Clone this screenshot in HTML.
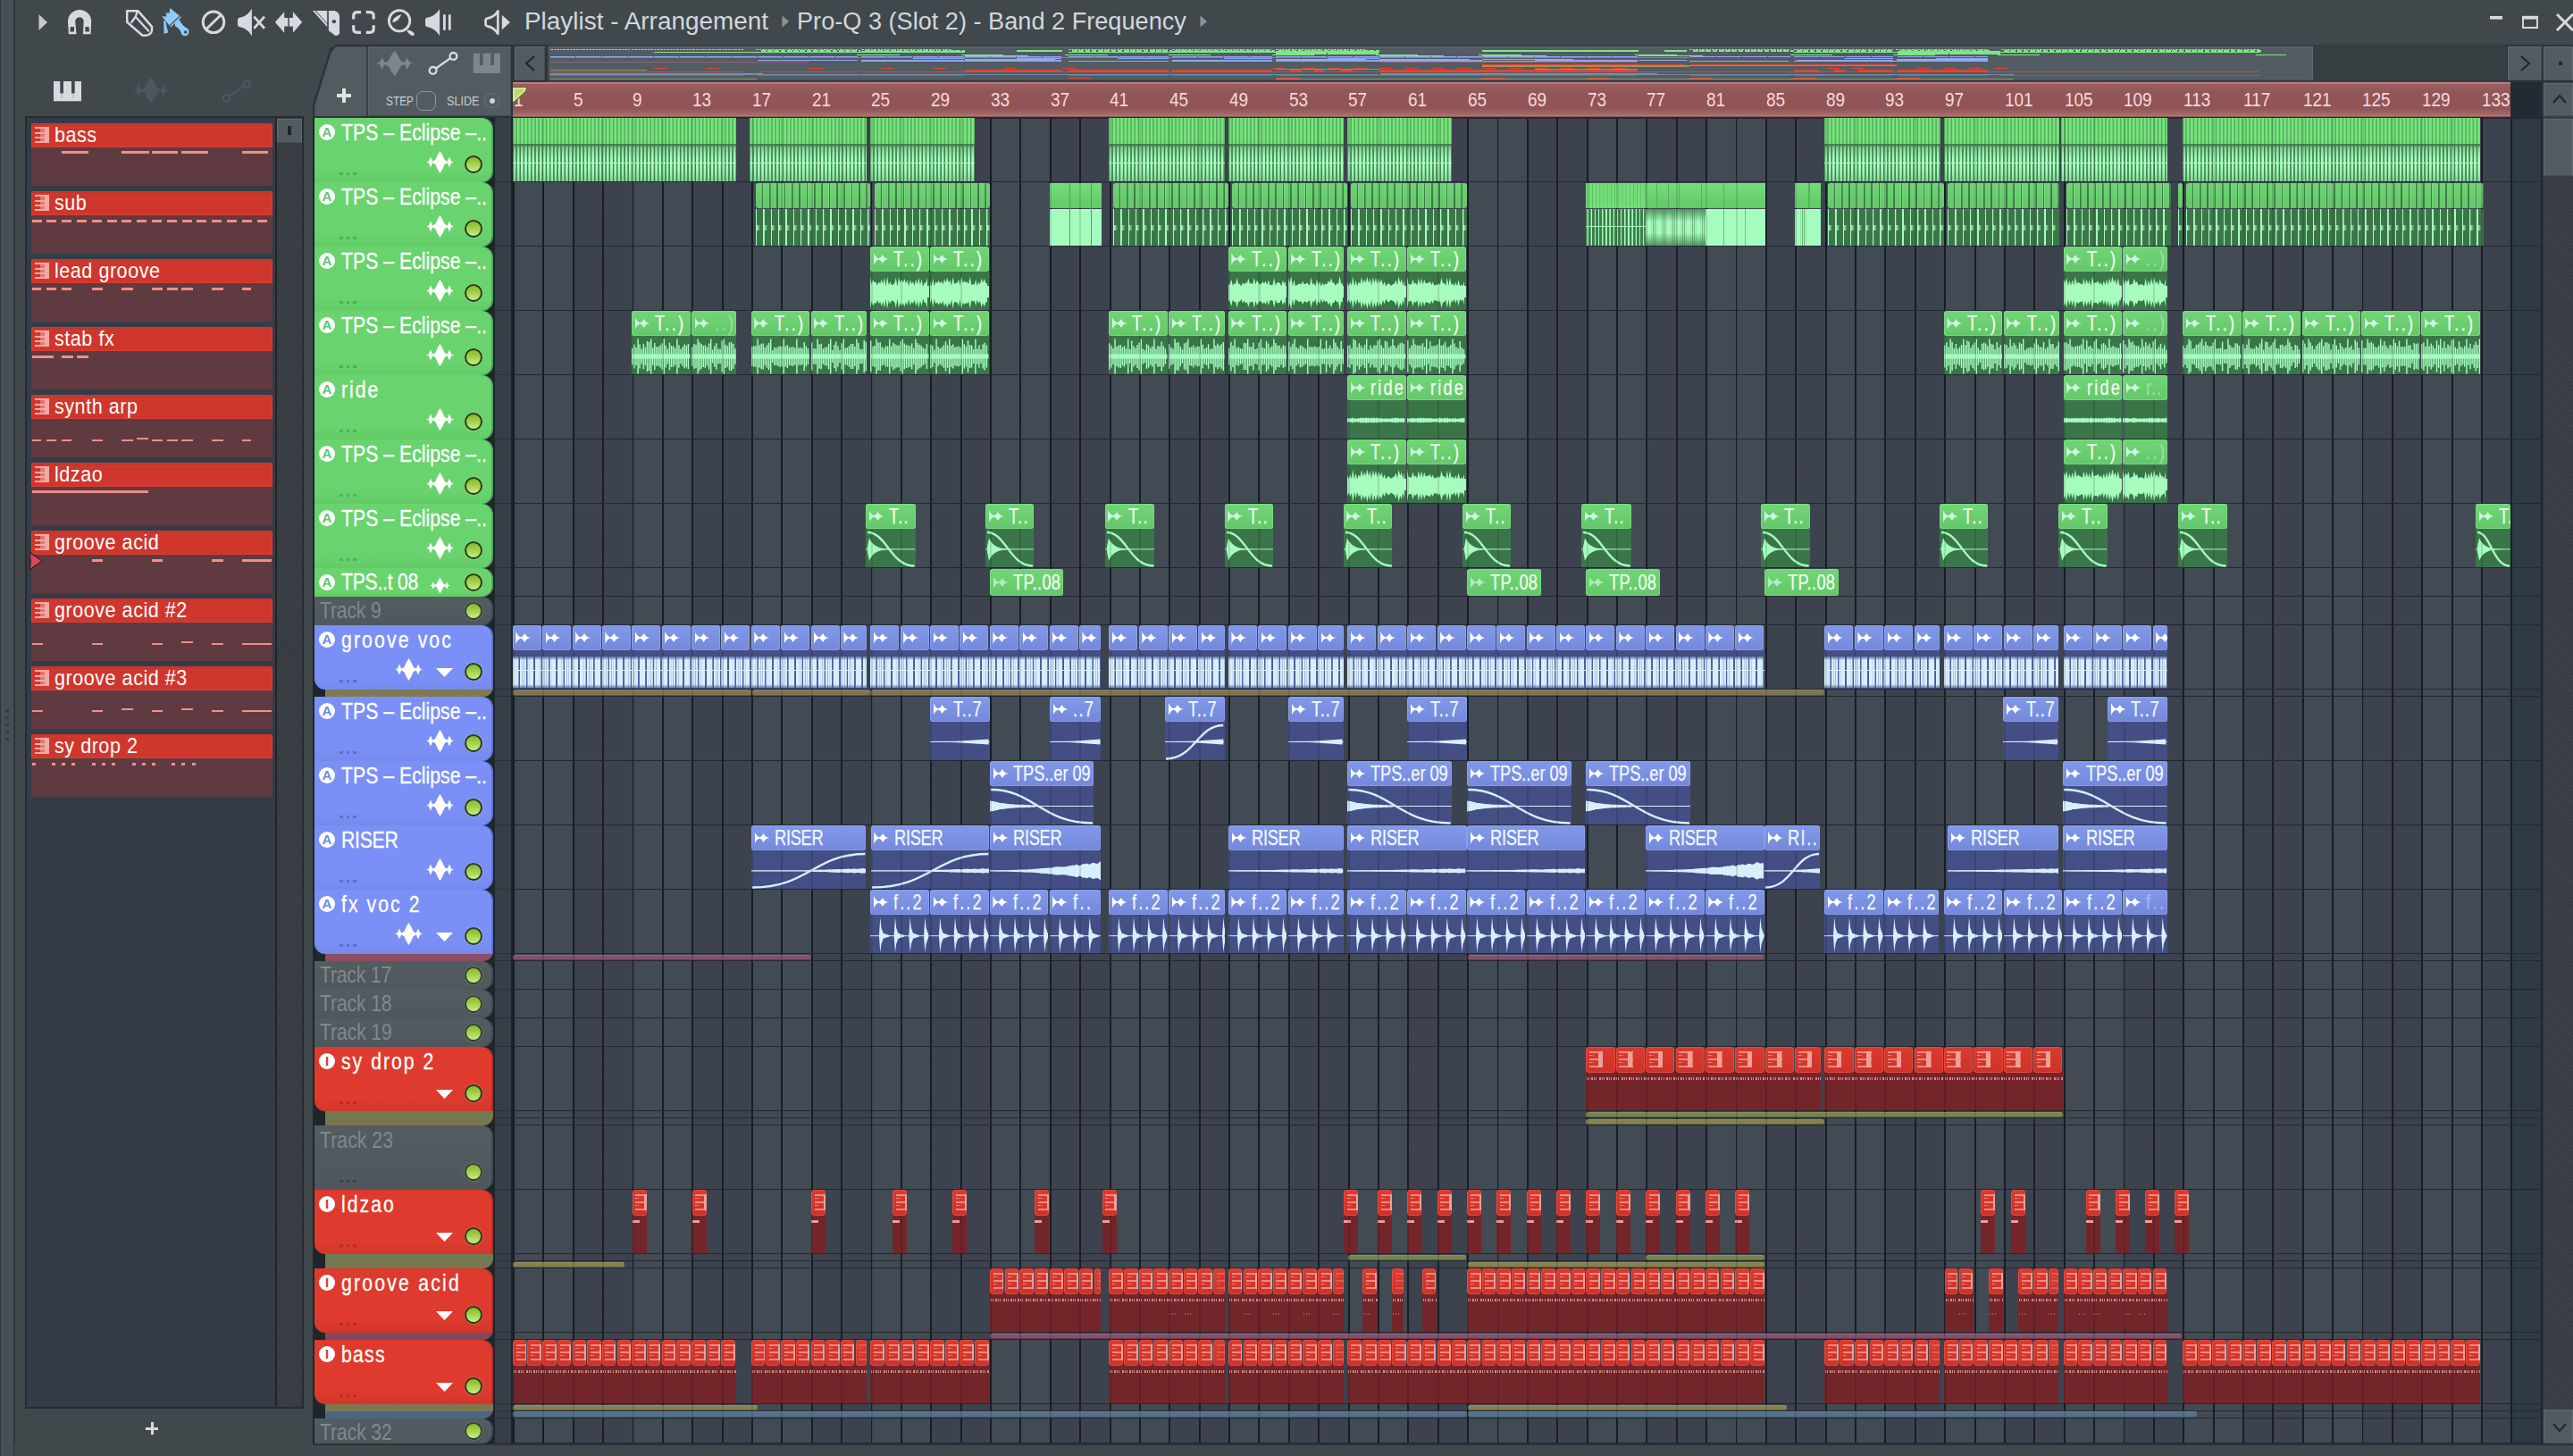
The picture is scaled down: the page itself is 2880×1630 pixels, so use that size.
<!DOCTYPE html><html><head><meta charset="utf-8"><title>Playlist - Arrangement</title><style>
html,body{margin:0;padding:0}
body{width:2880px;height:1630px;background:#40484c;position:relative;overflow:hidden;font-family:"Liberation Sans",sans-serif;}
div,svg,span,i,b{position:absolute;box-sizing:border-box;display:block}
.t{white-space:nowrap;transform-origin:0 0;line-height:1}

.h{border-radius:3px;overflow:hidden;z-index:1}
.hg{background:linear-gradient(#70d675 0,#6bcf70 50%,#64c86a 100%);box-shadow:inset 0 0 0 1px rgba(130,230,135,0.55)}
.hb{background:linear-gradient(#8199ea 0,#7b91e2 50%,#7488da 100%);box-shadow:inset 0 0 0 1px rgba(150,170,245,0.55)}
.hr{background:linear-gradient(#dc3a2e 0,#d5362b 50%,#cc3329 100%);box-shadow:inset 0 0 0 1px rgba(240,90,75,0.55);border-radius:4px}
.bg{background:rgba(58,122,72,0.93)}
.bb{background:rgba(69,80,138,0.93)}
.br{background:rgba(118,36,40,0.95)}
.ic{left:3.6px;top:6.8px;width:17px;height:14px;clip-path:polygon(0 0,7% 17%,17% 33%,30% 44%,40% 42%,50% 30%,59% 14%,66% 28%,74% 40%,86% 47%,100% 50%,86% 53%,74% 60%,66% 72%,59% 86%,50% 70%,40% 58%,30% 56%,17% 67%,7% 83%,0 100%)}
.hg .ic{background:#cdf8e0}
.hb .ic{background:#fff}
.lb{left:26px;top:1.6px;-webkit-text-stroke:.25px currentColor;font-size:24px;white-space:nowrap;transform-origin:0 0;line-height:1;color:#f2fff2}
.hb .lb{color:#f4f7ff}
.pi{left:3.5px;top:5px;width:15.5px;height:18px;background:linear-gradient(#ee9f98,#ee9f98) 100% 0/5.5px 100% no-repeat,linear-gradient(rgba(255,205,200,.55),rgba(255,205,200,.55)) 0 0/100% 2px no-repeat,linear-gradient(rgba(255,205,200,.55),rgba(255,205,200,.55)) 0 8px/100% 2px no-repeat,linear-gradient(rgba(255,205,200,.55),rgba(255,205,200,.55)) 0 16px/100% 2px no-repeat,linear-gradient(90deg,rgba(255,215,205,.7),rgba(255,215,205,0)) 0 4.2px/6px 1.4px no-repeat,linear-gradient(90deg,rgba(255,215,205,.7),rgba(255,215,205,0)) 0 12.2px/6px 1.4px no-repeat}
.mu{opacity:.35}

.T20pi{left:5px}

.th{left:352px;width:200px;border-radius:0 12px 12px 0;overflow:hidden;box-shadow:inset -1.7px 0 0 rgba(10,20,60,.28)}
.thg{background:linear-gradient(#69d36d 0,#69d36d 80%,#62cb67 100%)}
.thb{background:linear-gradient(#7b90f6 0,#7b90f6 80%,#748aee 100%)}
.thr{background:linear-gradient(#de3a2d 0,#de3a2d 80%,#d3372b 100%)}
.thx{background:linear-gradient(#535c61 0,#4e575c 100%)}
.led{left:168px;width:20px;height:20px;border-radius:50%;background:linear-gradient(#86b832 0,#a2d048 45%,#c8ec8a 100%);border:2px solid rgba(15,25,12,.82);box-shadow:0 0 0 1px rgba(255,255,255,.12)}
.thx .led{border-color:rgba(25,30,34,.8)}
.cir{left:5px;top:7px;width:18px;height:18px;border-radius:50%;background:#fff;font:bold 15px/18px "Liberation Sans",sans-serif;text-align:center}
.thg .cir{color:#5fc866}.thb .cir{color:#7088ee}.thr .cir{color:#d93a2e}
.nm{left:30px;top:3.5px;font-size:25px;color:#fff;-webkit-text-stroke:.3px currentColor;white-space:nowrap;transform-origin:0 0;line-height:1;transform:scaleX(.85)}
.thx .nm{color:#7f888e;left:6px;-webkit-text-stroke:0}
.dots{left:28px;width:20px;height:3.5px;background:linear-gradient(90deg,currentColor 0,currentColor 3.5px,transparent 3.5px,transparent 7.5px,currentColor 7.5px,currentColor 11px,transparent 11px,transparent 15px,currentColor 15px,currentColor 18.5px,transparent 18.5px)}
.thg .dots{color:#4fb056}.thb .dots{color:#5b6fd0}.thr .dots{color:#b82d24}.thx .dots{color:#3c4449}
.wv{width:31px;height:25px;background:#fff;clip-path:polygon(0 50%,9% 46%,16% 26%,23% 46%,33% 40%,42% 16%,50% 0,58% 16%,67% 40%,77% 46%,84% 26%,91% 46%,100% 50%,91% 54%,84% 74%,77% 54%,67% 60%,58% 84%,50% 100%,42% 84%,33% 60%,23% 54%,16% 74%,9% 54%)}
.tri{width:19px;height:10px;background:#fff;clip-path:polygon(0 0,100% 0,50% 100%)}
.gs{left:364px;width:188px;border-radius:0 0 11px 0}
</style></head><body>
<div style="left:0px;top:0px;width:15px;height:1630px;background:#465054;"></div>
<div style="left:0px;top:0px;width:1px;height:1630px;background:#2f373b;"></div>
<div style="left:15px;top:0px;width:2px;height:1630px;background:#2e363a;"></div>
<div id="grid" style="left:574px;top:132px;width:2271px;height:1484px;background:#3f4651;overflow:hidden"><div style="left:0px;top:0;width:66.8px;height:1484px;background:#424a54"></div><div style="left:66.8px;top:0;width:66.8px;height:1484px;background:#3c434e"></div><div style="left:133.5px;top:0;width:66.8px;height:1484px;background:#424a54"></div><div style="left:200.3px;top:0;width:66.8px;height:1484px;background:#3c434e"></div><div style="left:267px;top:0;width:66.8px;height:1484px;background:#424a54"></div><div style="left:333.8px;top:0;width:66.8px;height:1484px;background:#3c434e"></div><div style="left:400.6px;top:0;width:66.8px;height:1484px;background:#424a54"></div><div style="left:467.3px;top:0;width:66.8px;height:1484px;background:#3c434e"></div><div style="left:534.1px;top:0;width:66.8px;height:1484px;background:#424a54"></div><div style="left:600.8px;top:0;width:66.8px;height:1484px;background:#3c434e"></div><div style="left:667.6px;top:0;width:66.8px;height:1484px;background:#424a54"></div><div style="left:734.4px;top:0;width:66.8px;height:1484px;background:#3c434e"></div><div style="left:801.1px;top:0;width:66.8px;height:1484px;background:#424a54"></div><div style="left:867.9px;top:0;width:66.8px;height:1484px;background:#3c434e"></div><div style="left:934.6px;top:0;width:66.8px;height:1484px;background:#424a54"></div><div style="left:1001.4px;top:0;width:66.8px;height:1484px;background:#3c434e"></div><div style="left:1068.2px;top:0;width:66.8px;height:1484px;background:#424a54"></div><div style="left:1134.9px;top:0;width:66.8px;height:1484px;background:#3c434e"></div><div style="left:1201.7px;top:0;width:66.8px;height:1484px;background:#424a54"></div><div style="left:1268.4px;top:0;width:66.8px;height:1484px;background:#3c434e"></div><div style="left:1335.2px;top:0;width:66.8px;height:1484px;background:#424a54"></div><div style="left:1402px;top:0;width:66.8px;height:1484px;background:#3c434e"></div><div style="left:1468.7px;top:0;width:66.8px;height:1484px;background:#424a54"></div><div style="left:1535.5px;top:0;width:66.8px;height:1484px;background:#3c434e"></div><div style="left:1602.2px;top:0;width:66.8px;height:1484px;background:#424a54"></div><div style="left:1669px;top:0;width:66.8px;height:1484px;background:#3c434e"></div><div style="left:1735.8px;top:0;width:66.8px;height:1484px;background:#424a54"></div><div style="left:1802.5px;top:0;width:66.8px;height:1484px;background:#3c434e"></div><div style="left:1869.3px;top:0;width:66.8px;height:1484px;background:#424a54"></div><div style="left:1936px;top:0;width:66.8px;height:1484px;background:#3c434e"></div><div style="left:2002.8px;top:0;width:66.8px;height:1484px;background:#424a54"></div><div style="left:2069.6px;top:0;width:66.8px;height:1484px;background:#3c434e"></div><div style="left:2136.3px;top:0;width:66.8px;height:1484px;background:#424a54"></div><div style="left:2203.1px;top:0;width:32.9px;height:1484px;background:#3c434e"></div><div style="left:2236px;top:0;width:35px;height:1484px;background:#2f3a46"></div><div style="left:-0.2px;top:0;width:2271.5px;height:1484px;background:repeating-linear-gradient(90deg,#1a1f28 0,#1a1f28 1.9px,transparent 1.9px,transparent 33.380px)"></div><div style="left:0;top:70.5px;width:2271px;height:1.6px;background:#222832"></div><div style="left:0;top:142.5px;width:2271px;height:1.6px;background:#222832"></div><div style="left:0;top:214.5px;width:2271px;height:1.6px;background:#222832"></div><div style="left:0;top:286.5px;width:2271px;height:1.6px;background:#222832"></div><div style="left:0;top:358.5px;width:2271px;height:1.6px;background:#222832"></div><div style="left:0;top:430.5px;width:2271px;height:1.6px;background:#222832"></div><div style="left:0;top:502.5px;width:2271px;height:1.6px;background:#222832"></div><div style="left:0;top:534.5px;width:2271px;height:1.6px;background:#222832"></div><div style="left:0;top:566.5px;width:2271px;height:1.6px;background:#222832"></div><div style="left:0;top:638.5px;width:2271px;height:1.6px;background:#222832"></div><div style="left:0;top:646.5px;width:2271px;height:1.6px;background:#222832"></div><div style="left:0;top:718.5px;width:2271px;height:1.6px;background:#222832"></div><div style="left:0;top:790.5px;width:2271px;height:1.6px;background:#222832"></div><div style="left:0;top:862.5px;width:2271px;height:1.6px;background:#222832"></div><div style="left:0;top:934.5px;width:2271px;height:1.6px;background:#222832"></div><div style="left:0;top:942.5px;width:2271px;height:1.6px;background:#222832"></div><div style="left:0;top:974.5px;width:2271px;height:1.6px;background:#222832"></div><div style="left:0;top:1006.5px;width:2271px;height:1.6px;background:#222832"></div><div style="left:0;top:1038.5px;width:2271px;height:1.6px;background:#222832"></div><div style="left:0;top:1110.5px;width:2271px;height:1.6px;background:#222832"></div><div style="left:0;top:1118.5px;width:2271px;height:1.6px;background:#222832"></div><div style="left:0;top:1126.5px;width:2271px;height:1.6px;background:#222832"></div><div style="left:0;top:1198.5px;width:2271px;height:1.6px;background:#222832"></div><div style="left:0;top:1270.5px;width:2271px;height:1.6px;background:#222832"></div><div style="left:0;top:1278.5px;width:2271px;height:1.6px;background:#222832"></div><div style="left:0;top:1286.5px;width:2271px;height:1.6px;background:#222832"></div><div style="left:0;top:1358.5px;width:2271px;height:1.6px;background:#222832"></div><div style="left:0;top:1366.5px;width:2271px;height:1.6px;background:#222832"></div><div style="left:0;top:1438.5px;width:2271px;height:1.6px;background:#222832"></div><div style="left:0;top:1446.5px;width:2271px;height:1.6px;background:#222832"></div><div style="left:0;top:1454.5px;width:2271px;height:1.6px;background:#222832"></div><div style="left:0;top:1482.5px;width:2271px;height:1.6px;background:#222832"></div></div>
<div style="left:552px;top:132px;width:22px;height:1484px;background:#1e262c;"></div>
<div style="left:553.8px;top:132px;width:18.2px;height:1484px;background:#373e48;"></div>
<div style="left:572px;top:132px;width:2px;height:1484px;background:#1d252c;"></div>
<div style="left:553.8px;top:202.7px;width:18.2px;height:1.5px;background:#293039;"></div>
<div style="left:553.8px;top:274.7px;width:18.2px;height:1.5px;background:#293039;"></div>
<div style="left:553.8px;top:346.7px;width:18.2px;height:1.5px;background:#293039;"></div>
<div style="left:553.8px;top:418.7px;width:18.2px;height:1.5px;background:#293039;"></div>
<div style="left:553.8px;top:490.7px;width:18.2px;height:1.5px;background:#293039;"></div>
<div style="left:553.8px;top:562.7px;width:18.2px;height:1.5px;background:#293039;"></div>
<div style="left:553.8px;top:634.7px;width:18.2px;height:1.5px;background:#293039;"></div>
<div style="left:553.8px;top:666.7px;width:18.2px;height:1.5px;background:#293039;"></div>
<div style="left:553.8px;top:698.7px;width:18.2px;height:1.5px;background:#293039;"></div>
<div style="left:553.8px;top:770.7px;width:18.2px;height:1.5px;background:#293039;"></div>
<div style="left:553.8px;top:778.7px;width:18.2px;height:1.5px;background:#293039;"></div>
<div style="left:553.8px;top:850.7px;width:18.2px;height:1.5px;background:#293039;"></div>
<div style="left:553.8px;top:922.7px;width:18.2px;height:1.5px;background:#293039;"></div>
<div style="left:553.8px;top:994.7px;width:18.2px;height:1.5px;background:#293039;"></div>
<div style="left:553.8px;top:1066.7px;width:18.2px;height:1.5px;background:#293039;"></div>
<div style="left:553.8px;top:1074.7px;width:18.2px;height:1.5px;background:#293039;"></div>
<div style="left:553.8px;top:1106.7px;width:18.2px;height:1.5px;background:#293039;"></div>
<div style="left:553.8px;top:1138.7px;width:18.2px;height:1.5px;background:#293039;"></div>
<div style="left:553.8px;top:1170.7px;width:18.2px;height:1.5px;background:#293039;"></div>
<div style="left:553.8px;top:1242.7px;width:18.2px;height:1.5px;background:#293039;"></div>
<div style="left:553.8px;top:1250.7px;width:18.2px;height:1.5px;background:#293039;"></div>
<div style="left:553.8px;top:1258.7px;width:18.2px;height:1.5px;background:#293039;"></div>
<div style="left:553.8px;top:1330.7px;width:18.2px;height:1.5px;background:#293039;"></div>
<div style="left:553.8px;top:1402.7px;width:18.2px;height:1.5px;background:#293039;"></div>
<div style="left:553.8px;top:1410.7px;width:18.2px;height:1.5px;background:#293039;"></div>
<div style="left:553.8px;top:1418.7px;width:18.2px;height:1.5px;background:#293039;"></div>
<div style="left:553.8px;top:1490.7px;width:18.2px;height:1.5px;background:#293039;"></div>
<div style="left:553.8px;top:1498.7px;width:18.2px;height:1.5px;background:#293039;"></div>
<div style="left:553.8px;top:1570.7px;width:18.2px;height:1.5px;background:#293039;"></div>
<div style="left:553.8px;top:1578.7px;width:18.2px;height:1.5px;background:#293039;"></div>
<div style="left:553.8px;top:1586.7px;width:18.2px;height:1.5px;background:#293039;"></div>
<div style="left:553.8px;top:1614.7px;width:18.2px;height:1.5px;background:#293039;"></div>
<div style="left:574px;top:92px;width:2236px;height:39px;background:linear-gradient(#c38585 0,#c38585 1.2px,#9b5f61 2.2px,#935658 30%,#915456 75%,#a56868 92%,#b47877 97.5%,#5a3a40 100%)"></div>
<div style="left:574px;top:130.5px;width:2271px;height:2px;background:#2a2630;"></div>
<div style="left:2810px;top:92px;width:35px;height:39px;background:#222a33;"></div>
<div class="t" style="left:574.5px;top:100.9px;font-size:21.8px;color:#f6dada;transform:scaleX(0.870);">1</div>
<div class="t" style="left:641.6px;top:100.9px;font-size:21.8px;color:#f6dada;transform:scaleX(0.870);">5</div>
<div class="t" style="left:708.3px;top:100.9px;font-size:21.8px;color:#f6dada;transform:scaleX(0.870);">9</div>
<div class="t" style="left:775.1px;top:100.9px;font-size:21.8px;color:#f6dada;transform:scaleX(0.870);">13</div>
<div class="t" style="left:841.8px;top:100.9px;font-size:21.8px;color:#f6dada;transform:scaleX(0.870);">17</div>
<div class="t" style="left:908.6px;top:100.9px;font-size:21.8px;color:#f6dada;transform:scaleX(0.870);">21</div>
<div class="t" style="left:975.4px;top:100.9px;font-size:21.8px;color:#f6dada;transform:scaleX(0.870);">25</div>
<div class="t" style="left:1042.1px;top:100.9px;font-size:21.8px;color:#f6dada;transform:scaleX(0.870);">29</div>
<div class="t" style="left:1108.9px;top:100.9px;font-size:21.8px;color:#f6dada;transform:scaleX(0.870);">33</div>
<div class="t" style="left:1175.6px;top:100.9px;font-size:21.8px;color:#f6dada;transform:scaleX(0.870);">37</div>
<div class="t" style="left:1242.4px;top:100.9px;font-size:21.8px;color:#f6dada;transform:scaleX(0.870);">41</div>
<div class="t" style="left:1309.2px;top:100.9px;font-size:21.8px;color:#f6dada;transform:scaleX(0.870);">45</div>
<div class="t" style="left:1375.9px;top:100.9px;font-size:21.8px;color:#f6dada;transform:scaleX(0.870);">49</div>
<div class="t" style="left:1442.7px;top:100.9px;font-size:21.8px;color:#f6dada;transform:scaleX(0.870);">53</div>
<div class="t" style="left:1509.4px;top:100.9px;font-size:21.8px;color:#f6dada;transform:scaleX(0.870);">57</div>
<div class="t" style="left:1576.2px;top:100.9px;font-size:21.8px;color:#f6dada;transform:scaleX(0.870);">61</div>
<div class="t" style="left:1643px;top:100.9px;font-size:21.8px;color:#f6dada;transform:scaleX(0.870);">65</div>
<div class="t" style="left:1709.7px;top:100.9px;font-size:21.8px;color:#f6dada;transform:scaleX(0.870);">69</div>
<div class="t" style="left:1776.5px;top:100.9px;font-size:21.8px;color:#f6dada;transform:scaleX(0.870);">73</div>
<div class="t" style="left:1843.2px;top:100.9px;font-size:21.8px;color:#f6dada;transform:scaleX(0.870);">77</div>
<div class="t" style="left:1910px;top:100.9px;font-size:21.8px;color:#f6dada;transform:scaleX(0.870);">81</div>
<div class="t" style="left:1976.8px;top:100.9px;font-size:21.8px;color:#f6dada;transform:scaleX(0.870);">85</div>
<div class="t" style="left:2043.5px;top:100.9px;font-size:21.8px;color:#f6dada;transform:scaleX(0.870);">89</div>
<div class="t" style="left:2110.3px;top:100.9px;font-size:21.8px;color:#f6dada;transform:scaleX(0.870);">93</div>
<div class="t" style="left:2177px;top:100.9px;font-size:21.8px;color:#f6dada;transform:scaleX(0.870);">97</div>
<div class="t" style="left:2243.8px;top:100.9px;font-size:21.8px;color:#f6dada;transform:scaleX(0.870);">101</div>
<div class="t" style="left:2310.6px;top:100.9px;font-size:21.8px;color:#f6dada;transform:scaleX(0.870);">105</div>
<div class="t" style="left:2377.3px;top:100.9px;font-size:21.8px;color:#f6dada;transform:scaleX(0.870);">109</div>
<div class="t" style="left:2444.1px;top:100.9px;font-size:21.8px;color:#f6dada;transform:scaleX(0.870);">113</div>
<div class="t" style="left:2510.8px;top:100.9px;font-size:21.8px;color:#f6dada;transform:scaleX(0.870);">117</div>
<div class="t" style="left:2577.6px;top:100.9px;font-size:21.8px;color:#f6dada;transform:scaleX(0.870);">121</div>
<div class="t" style="left:2644.4px;top:100.9px;font-size:21.8px;color:#f6dada;transform:scaleX(0.870);">125</div>
<div class="t" style="left:2711.1px;top:100.9px;font-size:21.8px;color:#f6dada;transform:scaleX(0.870);">129</div>
<div class="t" style="left:2777.9px;top:100.9px;font-size:21.8px;color:#f6dada;transform:scaleX(0.870);">133</div>
<svg style="left:573px;top:96px" width="22" height="22" viewBox="0 0 22 22"><path d="M0.5 1.5 L17 1.5 L15 7 L0.5 20 Z" fill="#b9d96b" stroke="#5c6b2c" stroke-width="1.2"/><path d="M2 3 L15 3 L13.6 6.2 L2 16.5 Z" fill="none" stroke="#e4f2b0" stroke-width="1.2"/></svg>
<div style="left:574px;top:50px;width:2306px;height:42px;background:#363e42;"></div>
<div style="left:574px;top:50px;width:38px;height:42px;background:#2d3439;"></div>
<div style="left:2805px;top:50px;width:75px;height:42px;background:#2d3439;"></div>
<div style="left:576px;top:52px;width:34px;height:38px;background:#525b60;border:1px solid #626b70;border-right-color:#474f54;border-bottom-color:#474f54"></div>
<svg style="left:584px;top:60px" width="20" height="22" viewBox="0 0 20 22"><path d="M14 3 L5 11 L14 19" fill="none" stroke="#1f2529" stroke-width="2"/></svg>
<div style="left:612px;top:52px;width:2194px;height:38px;background:#363e42;"></div>
<div id="mini" style="left:614px;top:52px;width:1975px;height:38px;background:#525c62;border-top:1px solid #5e686e;border-right:1px solid #5f696e;border-bottom:1px solid #495257;overflow:hidden"><i style="left:2px;top:2px;width:217.2px;height:1.2px;background:repeating-linear-gradient(90deg,#7fe684 0,#7fe684 2.6px,transparent 2.6px,transparent 3.62px)"></i><i style="left:232.2px;top:2px;width:113.8px;height:1.2px;background:repeating-linear-gradient(90deg,#7fe684 0,#7fe684 2.6px,transparent 2.6px,transparent 3.62px)"></i><i style="left:349.5px;top:2px;width:101.6px;height:1.2px;background:repeating-linear-gradient(90deg,#7fe684 0,#7fe684 2.6px,transparent 2.6px,transparent 3.62px)"></i><i style="left:581.5px;top:2px;width:112.9px;height:1.2px;background:repeating-linear-gradient(90deg,#7fe684 0,#7fe684 2.6px,transparent 2.6px,transparent 3.62px)"></i><i style="left:697.9px;top:2px;width:112.1px;height:1.2px;background:repeating-linear-gradient(90deg,#7fe684 0,#7fe684 2.6px,transparent 2.6px,transparent 3.62px)"></i><i style="left:813.5px;top:2px;width:101.6px;height:1.2px;background:repeating-linear-gradient(90deg,#7fe684 0,#7fe684 2.6px,transparent 2.6px,transparent 3.62px)"></i><i style="left:1277.4px;top:2px;width:112.9px;height:1.2px;background:repeating-linear-gradient(90deg,#7fe684 0,#7fe684 2.6px,transparent 2.6px,transparent 3.62px)"></i><i style="left:1393.8px;top:2px;width:112.1px;height:1.2px;background:repeating-linear-gradient(90deg,#7fe684 0,#7fe684 2.6px,transparent 2.6px,transparent 3.62px)"></i><i style="left:1507.6px;top:2px;width:103.4px;height:1.2px;background:repeating-linear-gradient(90deg,#7fe684 0,#7fe684 2.6px,transparent 2.6px,transparent 3.62px)"></i><i style="left:1625.8px;top:2px;width:289.3px;height:1.2px;background:repeating-linear-gradient(90deg,#7fe684 0,#7fe684 2.6px,transparent 2.6px,transparent 3.62px)"></i><i style="left:237.9px;top:2.6px;width:111.2px;height:2.2px;background:repeating-linear-gradient(90deg,#7fe684 0,#7fe684 5.6px,transparent 5.6px,transparent 7.25px)"></i><i style="left:353.9px;top:2.6px;width:112.1px;height:2.2px;background:repeating-linear-gradient(90deg,#7fe684 0,#7fe684 5.6px,transparent 5.6px,transparent 7.25px)"></i><i style="left:585.8px;top:2.6px;width:112.1px;height:2.2px;background:repeating-linear-gradient(90deg,#7fe684 0,#7fe684 5.6px,transparent 5.6px,transparent 7.25px)"></i><i style="left:701.4px;top:2.6px;width:112.1px;height:2.2px;background:repeating-linear-gradient(90deg,#7fe684 0,#7fe684 5.6px,transparent 5.6px,transparent 7.25px)"></i><i style="left:816.9px;top:2.6px;width:112.9px;height:2.2px;background:repeating-linear-gradient(90deg,#7fe684 0,#7fe684 5.6px,transparent 5.6px,transparent 7.25px)"></i><i style="left:1280.9px;top:2.6px;width:112.7px;height:2.2px;background:repeating-linear-gradient(90deg,#7fe684 0,#7fe684 5.6px,transparent 5.6px,transparent 7.25px)"></i><i style="left:1397.3px;top:2.6px;width:108.6px;height:2.2px;background:repeating-linear-gradient(90deg,#7fe684 0,#7fe684 5.6px,transparent 5.6px,transparent 7.25px)"></i><i style="left:1512.8px;top:2.6px;width:101.2px;height:2.2px;background:repeating-linear-gradient(90deg,#7fe684 0,#7fe684 5.6px,transparent 5.6px,transparent 7.25px)"></i><i style="left:1629.3px;top:2.6px;width:289.1px;height:2.2px;background:repeating-linear-gradient(90deg,#7fe684 0,#7fe684 5.6px,transparent 5.6px,transparent 7.25px)"></i><i style="left:523.9px;top:2.6px;width:50.7px;height:2.2px;background:#7fe684"></i><i style="left:1045.4px;top:2.6px;width:174.3px;height:2.2px;background:#7fe684"></i><i style="left:1248.7px;top:2.6px;width:24.9px;height:2.2px;background:#7fe684"></i><i style="left:350px;top:4.4px;width:56.6px;height:1px;background:#7fe684"></i><i style="left:408px;top:4.4px;width:56.6px;height:1px;background:#7fe684"></i><i style="left:698px;top:4.4px;width:56.6px;height:1px;background:#7fe684"></i><i style="left:756px;top:4.4px;width:56.6px;height:1px;background:#7fe684"></i><i style="left:814px;top:4.4px;width:56.6px;height:1px;background:#7fe684"></i><i style="left:872px;top:4.4px;width:56.6px;height:1px;background:#7fe684"></i><i style="left:1510px;top:4.4px;width:56.6px;height:1px;background:#7fe684"></i><i style="left:1568px;top:4.4px;width:56.6px;height:1px;background:#7fe684"></i><i style="left:118px;top:5.1px;width:58px;height:1.3px;background:#7fe684"></i><i style="left:176px;top:5.1px;width:58px;height:1.3px;background:#7fe684"></i><i style="left:234px;top:5.1px;width:58px;height:1.3px;background:#7fe684"></i><i style="left:292px;top:5.1px;width:58px;height:1.3px;background:#7fe684"></i><i style="left:350px;top:5.1px;width:58px;height:1.3px;background:#7fe684"></i><i style="left:408px;top:5.1px;width:58px;height:1.3px;background:#7fe684"></i><i style="left:582px;top:5.1px;width:58px;height:1.3px;background:#7fe684"></i><i style="left:640px;top:5.1px;width:58px;height:1.3px;background:#7fe684"></i><i style="left:698px;top:5.1px;width:58px;height:1.3px;background:#7fe684"></i><i style="left:756px;top:5.1px;width:58px;height:1.3px;background:#7fe684"></i><i style="left:814px;top:5.1px;width:58px;height:1.3px;background:#7fe684"></i><i style="left:872px;top:5.1px;width:58px;height:1.3px;background:#7fe684"></i><i style="left:1394px;top:5.1px;width:58px;height:1.3px;background:#7fe684"></i><i style="left:1452px;top:5.1px;width:58px;height:1.3px;background:#7fe684"></i><i style="left:1510px;top:5.1px;width:58px;height:1.3px;background:#7fe684"></i><i style="left:1568px;top:5.1px;width:58px;height:1.3px;background:#7fe684"></i><i style="left:1626px;top:5.1px;width:58px;height:1.3px;background:#7fe684"></i><i style="left:1684px;top:5.1px;width:58px;height:1.3px;background:#7fe684"></i><i style="left:1742px;top:5.1px;width:58px;height:1.3px;background:#7fe684"></i><i style="left:1800px;top:5.1px;width:58px;height:1.3px;background:#7fe684"></i><i style="left:1858px;top:5.1px;width:58px;height:1.3px;background:#7fe684"></i><i style="left:814px;top:6px;width:56.6px;height:1px;background:#7fe684"></i><i style="left:814px;top:6.9px;width:56.6px;height:1px;background:#7fe684"></i><i style="left:872px;top:6px;width:56.6px;height:1px;background:#7fe684"></i><i style="left:872px;top:6.9px;width:56.6px;height:1px;background:#7fe684"></i><i style="left:1510px;top:6px;width:56.6px;height:1px;background:#7fe684"></i><i style="left:1510px;top:6.9px;width:56.6px;height:1px;background:#7fe684"></i><i style="left:1568px;top:6px;width:56.6px;height:1px;background:#7fe684"></i><i style="left:1568px;top:6.9px;width:56.6px;height:1px;background:#7fe684"></i><i style="left:345.2px;top:7.7px;width:48.2px;height:1px;background:#7fe684"></i><i style="left:461.9px;top:7.7px;width:46.9px;height:1px;background:#7fe684"></i><i style="left:577.6px;top:7.7px;width:48px;height:1px;background:#7fe684"></i><i style="left:694.2px;top:7.7px;width:46.9px;height:1px;background:#7fe684"></i><i style="left:809.6px;top:7.7px;width:47.6px;height:1px;background:#7fe684"></i><i style="left:925.8px;top:7.7px;width:46.9px;height:1px;background:#7fe684"></i><i style="left:1041.1px;top:7.7px;width:48.3px;height:1px;background:#7fe684"></i><i style="left:1215.9px;top:7.7px;width:47.4px;height:1px;background:#7fe684"></i><i style="left:1389.7px;top:7.7px;width:47.1px;height:1px;background:#7fe684"></i><i style="left:1505.2px;top:7.7px;width:47.3px;height:1px;background:#7fe684"></i><i style="left:1621.6px;top:7.7px;width:47.3px;height:1px;background:#7fe684"></i><i style="left:1910.8px;top:7.7px;width:33.9px;height:1px;background:#7fe684"></i><i style="left:466.3px;top:8.6px;width:71.2px;height:1px;background:#7fe684"></i><i style="left:930.2px;top:8.6px;width:71.4px;height:1px;background:#7fe684"></i><i style="left:1045.4px;top:8.6px;width:72.1px;height:1px;background:#7fe684"></i><i style="left:1219.5px;top:8.6px;width:72.2px;height:1px;background:#7fe684"></i><i style="left:2px;top:10px;width:344px;height:1.3px;background:repeating-linear-gradient(90deg,#93a7f2 0,#93a7f2 28px,transparent 28px,transparent 29px)"></i><i style="left:350px;top:10px;width:224.1px;height:1.3px;background:repeating-linear-gradient(90deg,#93a7f2 0,#93a7f2 28px,transparent 28px,transparent 29px)"></i><i style="left:582px;top:10px;width:112.2px;height:1.3px;background:repeating-linear-gradient(90deg,#93a7f2 0,#93a7f2 28px,transparent 28px,transparent 29px)"></i><i style="left:698px;top:10px;width:111.6px;height:1.3px;background:repeating-linear-gradient(90deg,#93a7f2 0,#93a7f2 28px,transparent 28px,transparent 29px)"></i><i style="left:814px;top:10px;width:404.8px;height:1.3px;background:repeating-linear-gradient(90deg,#93a7f2 0,#93a7f2 28px,transparent 28px,transparent 29px)"></i><i style="left:1278px;top:10px;width:111.7px;height:1.3px;background:repeating-linear-gradient(90deg,#93a7f2 0,#93a7f2 28px,transparent 28px,transparent 29px)"></i><i style="left:1394px;top:10px;width:111.2px;height:1.3px;background:repeating-linear-gradient(90deg,#93a7f2 0,#93a7f2 28px,transparent 28px,transparent 29px)"></i><i style="left:1510px;top:10px;width:100.6px;height:1.3px;background:repeating-linear-gradient(90deg,#93a7f2 0,#93a7f2 28px,transparent 28px,transparent 29px)"></i><i style="left:2px;top:11.4px;width:231.6px;height:0.9px;background:#8f8660"></i><i style="left:234.8px;top:11.4px;width:114.2px;height:0.9px;background:#8f8660"></i><i style="left:350px;top:11.4px;width:927.1px;height:0.9px;background:#8f8660"></i><i style="left:407.7px;top:12.4px;width:57.9px;height:1px;background:#93a7f2"></i><i style="left:524.1px;top:12.4px;width:49.9px;height:1px;background:#93a7f2"></i><i style="left:636.6px;top:12.4px;width:57.6px;height:1px;background:#93a7f2"></i><i style="left:756.1px;top:12.4px;width:53.5px;height:1px;background:#93a7f2"></i><i style="left:871.7px;top:12.4px;width:58.2px;height:1px;background:#93a7f2"></i><i style="left:1451.4px;top:12.4px;width:53.8px;height:1px;background:#93a7f2"></i><i style="left:1553.1px;top:12.4px;width:57.6px;height:1px;background:#93a7f2"></i><i style="left:466.3px;top:13.3px;width:100.9px;height:1px;background:#93a7f2"></i><i style="left:813.5px;top:13.3px;width:101.4px;height:1px;background:#93a7f2"></i><i style="left:929.9px;top:13.3px;width:101.2px;height:1px;background:#93a7f2"></i><i style="left:1045.4px;top:13.3px;width:101.6px;height:1px;background:#93a7f2"></i><i style="left:1509.4px;top:13.3px;width:101.3px;height:1px;background:#93a7f2"></i><i style="left:234px;top:13.9px;width:111.6px;height:1.2px;background:#93a7f2"></i><i style="left:350px;top:13.9px;width:115px;height:1.2px;background:#93a7f2"></i><i style="left:466.3px;top:13.9px;width:107.7px;height:1.2px;background:#93a7f2"></i><i style="left:697.9px;top:13.9px;width:111.7px;height:1.2px;background:#93a7f2"></i><i style="left:813.5px;top:13.9px;width:116px;height:1.2px;background:#93a7f2"></i><i style="left:930.2px;top:13.9px;width:114.7px;height:1.2px;background:#93a7f2"></i><i style="left:1104px;top:13.9px;width:114.9px;height:1.2px;background:#93a7f2"></i><i style="left:1219.5px;top:13.9px;width:54px;height:1.2px;background:#93a7f2"></i><i style="left:1397.3px;top:13.9px;width:107.7px;height:1.2px;background:#93a7f2"></i><i style="left:1509.4px;top:13.9px;width:101.3px;height:1.2px;background:#93a7f2"></i><i style="left:349.5px;top:14.8px;width:224.5px;height:1.4px;background:#93a7f2"></i><i style="left:581.5px;top:14.8px;width:112.7px;height:1.4px;background:#93a7f2"></i><i style="left:697.9px;top:14.8px;width:111.7px;height:1.4px;background:#93a7f2"></i><i style="left:813.5px;top:14.8px;width:405.4px;height:1.4px;background:#93a7f2"></i><i style="left:1277.4px;top:14.8px;width:111.1px;height:1.4px;background:#93a7f2"></i><i style="left:1393.8px;top:14.8px;width:216.9px;height:1.4px;background:#93a7f2"></i><i style="left:2px;top:15.9px;width:290px;height:0.9px;background:#94607a"></i><i style="left:930.7px;top:15.9px;width:287.6px;height:0.9px;background:#94607a"></i><i style="left:1045.4px;top:19.2px;width:228.1px;height:1.3px;background:#e2452f"></i><i style="left:1277.7px;top:19.2px;width:231.7px;height:1.3px;background:#e2452f"></i><i style="left:1045.4px;top:20.3px;width:463.9px;height:0.8px;background:#8a9a5a"></i><i style="left:1045.4px;top:21px;width:231.7px;height:0.8px;background:#9a9660"></i><i style="left:118px;top:22.9px;width:14.8px;height:1px;background:#e2452f"></i><i style="left:176.3px;top:22.9px;width:14.8px;height:1px;background:#e2452f"></i><i style="left:292.4px;top:22.9px;width:14.8px;height:1px;background:#e2452f"></i><i style="left:371.5px;top:22.9px;width:14.8px;height:1px;background:#e2452f"></i><i style="left:429.8px;top:22.9px;width:14.8px;height:1px;background:#e2452f"></i><i style="left:509.6px;top:22.9px;width:14.8px;height:1px;background:#e2452f"></i><i style="left:575px;top:22.9px;width:14.8px;height:1px;background:#e2452f"></i><i style="left:810.3px;top:22.9px;width:14.8px;height:1px;background:#e2452f"></i><i style="left:843.2px;top:22.9px;width:14.8px;height:1px;background:#e2452f"></i><i style="left:871.8px;top:22.9px;width:14.8px;height:1px;background:#e2452f"></i><i style="left:900.8px;top:22.9px;width:14.8px;height:1px;background:#e2452f"></i><i style="left:929.9px;top:22.9px;width:14.8px;height:1px;background:#e2452f"></i><i style="left:958.5px;top:22.9px;width:14.8px;height:1px;background:#e2452f"></i><i style="left:988.3px;top:22.9px;width:14.8px;height:1px;background:#e2452f"></i><i style="left:1016.9px;top:22.9px;width:14.8px;height:1px;background:#e2452f"></i><i style="left:1045.7px;top:22.9px;width:14.8px;height:1px;background:#e2452f"></i><i style="left:1075.3px;top:22.9px;width:14.8px;height:1px;background:#e2452f"></i><i style="left:1103.6px;top:22.9px;width:14.8px;height:1px;background:#e2452f"></i><i style="left:1132.9px;top:22.9px;width:14.8px;height:1px;background:#e2452f"></i><i style="left:1162.1px;top:22.9px;width:14.8px;height:1px;background:#e2452f"></i><i style="left:1190.9px;top:22.9px;width:14.8px;height:1px;background:#e2452f"></i><i style="left:1429.8px;top:22.9px;width:14.8px;height:1px;background:#e2452f"></i><i style="left:1459px;top:22.9px;width:14.8px;height:1px;background:#e2452f"></i><i style="left:1531.7px;top:22.9px;width:14.8px;height:1px;background:#e2452f"></i><i style="left:1560.8px;top:22.9px;width:14.8px;height:1px;background:#e2452f"></i><i style="left:1589.6px;top:22.9px;width:14.8px;height:1px;background:#e2452f"></i><i style="left:1618.2px;top:22.9px;width:14.8px;height:1px;background:#e2452f"></i><i style="left:814px;top:23.8px;width:115.5px;height:0.8px;background:#8a9a5a"></i><i style="left:1104px;top:23.8px;width:114.9px;height:0.8px;background:#8a9a5a"></i><i style="left:2px;top:24.6px;width:108.2px;height:0.9px;background:#9a9660"></i><i style="left:930.7px;top:24.6px;width:288.1px;height:0.9px;background:#9a9660"></i><i style="left:466.3px;top:25.3px;width:107.7px;height:1.3px;background:#e2452f"></i><i style="left:581.8px;top:25.3px;width:112.3px;height:1.3px;background:#e2452f"></i><i style="left:697.9px;top:25.3px;width:111.7px;height:1.3px;background:#e2452f"></i><i style="left:828.6px;top:25.3px;width:14.1px;height:1.3px;background:#e2452f"></i><i style="left:857.2px;top:25.3px;width:10.7px;height:1.3px;background:#e2452f"></i><i style="left:886.4px;top:25.3px;width:13.9px;height:1.3px;background:#e2452f"></i><i style="left:929.9px;top:25.3px;width:289px;height:1.3px;background:#e2452f"></i><i style="left:1394.3px;top:25.3px;width:28px;height:1.3px;background:#e2452f"></i><i style="left:1437.6px;top:25.3px;width:13.4px;height:1.3px;background:#e2452f"></i><i style="left:1466.3px;top:25.3px;width:38.9px;height:1.3px;background:#e2452f"></i><i style="left:1509.8px;top:25.3px;width:100.9px;height:1.3px;background:#e2452f"></i><i style="left:466.3px;top:26.5px;width:1159px;height:0.8px;background:#94607a"></i><i style="left:2px;top:27.1px;width:216.9px;height:1.4px;background:#e2452f"></i><i style="left:234px;top:27.1px;width:112.1px;height:1.4px;background:#e2452f"></i><i style="left:349.5px;top:27.1px;width:116.1px;height:1.4px;background:#e2452f"></i><i style="left:581.8px;top:27.1px;width:112.3px;height:1.4px;background:#e2452f"></i><i style="left:697.9px;top:27.1px;width:111.7px;height:1.4px;background:#e2452f"></i><i style="left:813.5px;top:27.1px;width:405.4px;height:1.4px;background:#e2452f"></i><i style="left:1277.7px;top:27.1px;width:112.1px;height:1.4px;background:#e2452f"></i><i style="left:1393.8px;top:27.1px;width:111.4px;height:1.4px;background:#e2452f"></i><i style="left:1509.8px;top:27.1px;width:100.9px;height:1.4px;background:#e2452f"></i><i style="left:1626px;top:27.1px;width:289.1px;height:1.4px;background:#e2452f"></i><i style="left:2px;top:28.7px;width:238.1px;height:0.8px;background:#9a9660"></i><i style="left:930.7px;top:28.7px;width:309.9px;height:0.8px;background:#9a9660"></i><i style="left:2px;top:29.6px;width:927.4px;height:0.8px;background:#6d8ba8"></i><i style="left:930.7px;top:29.6px;width:708.9px;height:0.8px;background:#6d8ba8"></i><i style="left:2px;top:30.8px;width:216.9px;height:1.1px;background:#e2452f"></i><i style="left:234px;top:30.8px;width:112.1px;height:1.1px;background:#e2452f"></i><i style="left:349.5px;top:30.8px;width:116.1px;height:1.1px;background:#e2452f"></i><i style="left:581.8px;top:30.8px;width:112.3px;height:1.1px;background:#e2452f"></i><i style="left:697.9px;top:30.8px;width:111.7px;height:1.1px;background:#e2452f"></i><i style="left:813.5px;top:30.8px;width:405.4px;height:1.1px;background:#e2452f"></i><i style="left:1277.7px;top:30.8px;width:112.1px;height:1.1px;background:#e2452f"></i><i style="left:1393.8px;top:30.8px;width:111.4px;height:1.1px;background:#e2452f"></i><i style="left:1509.8px;top:30.8px;width:100.9px;height:1.1px;background:#e2452f"></i><i style="left:1626px;top:30.8px;width:289.1px;height:1.1px;background:#e2452f"></i><i style="left:581.5px;top:34.2px;width:26.1px;height:1px;background:#e2452f"></i><i style="left:813.5px;top:34.2px;width:26.1px;height:1px;background:#e2452f"></i><i style="left:1045.4px;top:34.2px;width:26.1px;height:1px;background:#e2452f"></i><i style="left:1161.8px;top:34.2px;width:26.1px;height:1px;background:#e2452f"></i><i style="left:1277.4px;top:34.2px;width:26.1px;height:1px;background:#e2452f"></i><i style="left:1393.8px;top:34.2px;width:26.1px;height:1px;background:#e2452f"></i><i style="left:1509.4px;top:34.2px;width:26.1px;height:1px;background:#e2452f"></i><i style="left:2px;top:35.3px;width:231.1px;height:0.8px;background:#9a9660"></i><i style="left:813.5px;top:35.3px;width:826.2px;height:0.8px;background:#9a9660"></i></div>
<div style="left:2807px;top:52px;width:38px;height:38px;background:#525b60;border:1px solid #626b70;border-right-color:#474f54;border-bottom-color:#474f54"></div>
<svg style="left:2816px;top:60px" width="20" height="22" viewBox="0 0 20 22"><path d="M6 3 L15 11 L6 19" fill="none" stroke="#1f2529" stroke-width="2"/></svg>
<div style="left:2847px;top:52px;width:33px;height:38px;background:#525b60;border:1px solid #626b70;border-bottom-color:#474f54"></div>
<div style="left:2864px;top:69px;width:4px;height:4px;background:#1f2529;"></div>
<div style="left:2845px;top:92px;width:2px;height:1524px;background:#2a3036;"></div>
<div style="left:2847px;top:92px;width:33px;height:1524px;background:#363c41;background-image:repeating-linear-gradient(45deg,rgba(255,255,255,0.035) 0,rgba(255,255,255,0.035) 1px,transparent 1px,transparent 3px)"></div>
<div style="left:2847px;top:93px;width:33px;height:37px;background:#525b60;border:1px solid #626b70;border-bottom-color:#474f54"></div>
<svg style="left:2855px;top:100px" width="20" height="22" viewBox="0 0 20 22"><path d="M3 15 L10 7 L17 15" fill="none" stroke="#1f2529" stroke-width="2"/></svg>
<div style="left:2847px;top:133px;width:33px;height:64px;background:#525b60;border:1px solid #626b70;border-bottom-color:#474f54"></div>
<div style="left:2847px;top:1578px;width:33px;height:38px;background:#525b60;border:1px solid #626b70;border-bottom-color:#474f54"></div>
<svg style="left:2855px;top:1587px" width="20" height="22" viewBox="0 0 20 22"><path d="M3 7 L10 15 L17 7" fill="none" stroke="#1f2529" stroke-width="2"/></svg>
<div style="left:350px;top:1616px;width:2530px;height:2px;background:#2b3237;"></div>
<div style="left:16px;top:1618px;width:2864px;height:12px;background:#40484c;"></div>
<div id="clips" style="left:574px;top:132px;width:2236px;height:1484px;overflow:hidden"><div class="" style="left:0px;top:0.3px;width:250px;height:28.3px;background:repeating-linear-gradient(90deg,#55ad5d 0,#5bb863 .5px,#79e57d 1.2px,#79e57d 2.9px,#5bb863 3.6px,#55ad5d 4.1725px);"></div>
<div class="" style="left:0px;top:28.6px;width:250px;height:42.1px;background:linear-gradient(rgba(60,122,72,.9) 0,rgba(60,122,72,.9) 1.5px,rgba(60,122,72,.35) 4px,rgba(60,122,72,0) 40%,rgba(60,122,72,0) 65%,rgba(60,122,72,.3) 100%),repeating-linear-gradient(90deg,#3f7d4b 0,#4f9a5e .5px,#aaffc3 1.1px,#aaffc3 2.9px,#4f9a5e 3.5px,#3f7d4b 4.1725px);"></div>
<div class="" style="left:0px;top:50px;width:250px;height:1.4px;background:#aaffc3"></div>
<div class="" style="left:265px;top:0.3px;width:131px;height:28.3px;background:repeating-linear-gradient(90deg,#55ad5d 0,#5bb863 .5px,#79e57d 1.2px,#79e57d 2.9px,#5bb863 3.6px,#55ad5d 4.1725px);"></div>
<div class="" style="left:265px;top:28.6px;width:131px;height:42.1px;background:linear-gradient(rgba(60,122,72,.9) 0,rgba(60,122,72,.9) 1.5px,rgba(60,122,72,.35) 4px,rgba(60,122,72,0) 40%,rgba(60,122,72,0) 65%,rgba(60,122,72,.3) 100%),repeating-linear-gradient(90deg,#3f7d4b 0,#4f9a5e .5px,#aaffc3 1.1px,#aaffc3 2.9px,#4f9a5e 3.5px,#3f7d4b 4.1725px);"></div>
<div class="" style="left:265px;top:50px;width:131px;height:1.4px;background:#aaffc3"></div>
<div class="" style="left:400px;top:0.3px;width:117px;height:28.3px;background:repeating-linear-gradient(90deg,#55ad5d 0,#5bb863 .5px,#79e57d 1.2px,#79e57d 2.9px,#5bb863 3.6px,#55ad5d 4.1725px);"></div>
<div class="" style="left:400px;top:28.6px;width:117px;height:42.1px;background:linear-gradient(rgba(60,122,72,.9) 0,rgba(60,122,72,.9) 1.5px,rgba(60,122,72,.35) 4px,rgba(60,122,72,0) 40%,rgba(60,122,72,0) 65%,rgba(60,122,72,.3) 100%),repeating-linear-gradient(90deg,#3f7d4b 0,#4f9a5e .5px,#aaffc3 1.1px,#aaffc3 2.9px,#4f9a5e 3.5px,#3f7d4b 4.1725px);"></div>
<div class="" style="left:400px;top:50px;width:117px;height:1.4px;background:#aaffc3"></div>
<div class="" style="left:667px;top:0.3px;width:130px;height:28.3px;background:repeating-linear-gradient(90deg,#55ad5d 0,#5bb863 .5px,#79e57d 1.2px,#79e57d 2.9px,#5bb863 3.6px,#55ad5d 4.1725px);"></div>
<div class="" style="left:667px;top:28.6px;width:130px;height:42.1px;background:linear-gradient(rgba(60,122,72,.9) 0,rgba(60,122,72,.9) 1.5px,rgba(60,122,72,.35) 4px,rgba(60,122,72,0) 40%,rgba(60,122,72,0) 65%,rgba(60,122,72,.3) 100%),repeating-linear-gradient(90deg,#3f7d4b 0,#4f9a5e .5px,#aaffc3 1.1px,#aaffc3 2.9px,#4f9a5e 3.5px,#3f7d4b 4.1725px);"></div>
<div class="" style="left:667px;top:50px;width:130px;height:1.4px;background:#aaffc3"></div>
<div class="" style="left:801px;top:0.3px;width:129px;height:28.3px;background:repeating-linear-gradient(90deg,#55ad5d 0,#5bb863 .5px,#79e57d 1.2px,#79e57d 2.9px,#5bb863 3.6px,#55ad5d 4.1725px);"></div>
<div class="" style="left:801px;top:28.6px;width:129px;height:42.1px;background:linear-gradient(rgba(60,122,72,.9) 0,rgba(60,122,72,.9) 1.5px,rgba(60,122,72,.35) 4px,rgba(60,122,72,0) 40%,rgba(60,122,72,0) 65%,rgba(60,122,72,.3) 100%),repeating-linear-gradient(90deg,#3f7d4b 0,#4f9a5e .5px,#aaffc3 1.1px,#aaffc3 2.9px,#4f9a5e 3.5px,#3f7d4b 4.1725px);"></div>
<div class="" style="left:801px;top:50px;width:129px;height:1.4px;background:#aaffc3"></div>
<div class="" style="left:934px;top:0.3px;width:117px;height:28.3px;background:repeating-linear-gradient(90deg,#55ad5d 0,#5bb863 .5px,#79e57d 1.2px,#79e57d 2.9px,#5bb863 3.6px,#55ad5d 4.1725px);"></div>
<div class="" style="left:934px;top:28.6px;width:117px;height:42.1px;background:linear-gradient(rgba(60,122,72,.9) 0,rgba(60,122,72,.9) 1.5px,rgba(60,122,72,.35) 4px,rgba(60,122,72,0) 40%,rgba(60,122,72,0) 65%,rgba(60,122,72,.3) 100%),repeating-linear-gradient(90deg,#3f7d4b 0,#4f9a5e .5px,#aaffc3 1.1px,#aaffc3 2.9px,#4f9a5e 3.5px,#3f7d4b 4.1725px);"></div>
<div class="" style="left:934px;top:50px;width:117px;height:1.4px;background:#aaffc3"></div>
<div class="" style="left:1468px;top:0.3px;width:130px;height:28.3px;background:repeating-linear-gradient(90deg,#55ad5d 0,#5bb863 .5px,#79e57d 1.2px,#79e57d 2.9px,#5bb863 3.6px,#55ad5d 4.1725px);"></div>
<div class="" style="left:1468px;top:28.6px;width:130px;height:42.1px;background:linear-gradient(rgba(60,122,72,.9) 0,rgba(60,122,72,.9) 1.5px,rgba(60,122,72,.35) 4px,rgba(60,122,72,0) 40%,rgba(60,122,72,0) 65%,rgba(60,122,72,.3) 100%),repeating-linear-gradient(90deg,#3f7d4b 0,#4f9a5e .5px,#aaffc3 1.1px,#aaffc3 2.9px,#4f9a5e 3.5px,#3f7d4b 4.1725px);"></div>
<div class="" style="left:1468px;top:50px;width:130px;height:1.4px;background:#aaffc3"></div>
<div class="" style="left:1602px;top:0.3px;width:129px;height:28.3px;background:repeating-linear-gradient(90deg,#55ad5d 0,#5bb863 .5px,#79e57d 1.2px,#79e57d 2.9px,#5bb863 3.6px,#55ad5d 4.1725px);"></div>
<div class="" style="left:1602px;top:28.6px;width:129px;height:42.1px;background:linear-gradient(rgba(60,122,72,.9) 0,rgba(60,122,72,.9) 1.5px,rgba(60,122,72,.35) 4px,rgba(60,122,72,0) 40%,rgba(60,122,72,0) 65%,rgba(60,122,72,.3) 100%),repeating-linear-gradient(90deg,#3f7d4b 0,#4f9a5e .5px,#aaffc3 1.1px,#aaffc3 2.9px,#4f9a5e 3.5px,#3f7d4b 4.1725px);"></div>
<div class="" style="left:1602px;top:50px;width:129px;height:1.4px;background:#aaffc3"></div>
<div class="" style="left:1733px;top:0.3px;width:119px;height:28.3px;background:repeating-linear-gradient(90deg,#55ad5d 0,#5bb863 .5px,#79e57d 1.2px,#79e57d 2.9px,#5bb863 3.6px,#55ad5d 4.1725px);"></div>
<div class="" style="left:1733px;top:28.6px;width:119px;height:42.1px;background:linear-gradient(rgba(60,122,72,.9) 0,rgba(60,122,72,.9) 1.5px,rgba(60,122,72,.35) 4px,rgba(60,122,72,0) 40%,rgba(60,122,72,0) 65%,rgba(60,122,72,.3) 100%),repeating-linear-gradient(90deg,#3f7d4b 0,#4f9a5e .5px,#aaffc3 1.1px,#aaffc3 2.9px,#4f9a5e 3.5px,#3f7d4b 4.1725px);"></div>
<div class="" style="left:1733px;top:50px;width:119px;height:1.4px;background:#aaffc3"></div>
<div class="" style="left:1869px;top:0.3px;width:333px;height:28.3px;background:repeating-linear-gradient(90deg,#55ad5d 0,#5bb863 .5px,#79e57d 1.2px,#79e57d 2.9px,#5bb863 3.6px,#55ad5d 4.1725px);"></div>
<div class="" style="left:1869px;top:28.6px;width:333px;height:42.1px;background:linear-gradient(rgba(60,122,72,.9) 0,rgba(60,122,72,.9) 1.5px,rgba(60,122,72,.35) 4px,rgba(60,122,72,0) 40%,rgba(60,122,72,0) 65%,rgba(60,122,72,.3) 100%),repeating-linear-gradient(90deg,#3f7d4b 0,#4f9a5e .5px,#aaffc3 1.1px,#aaffc3 2.9px,#4f9a5e 3.5px,#3f7d4b 4.1725px);"></div>
<div class="" style="left:1869px;top:50px;width:333px;height:1.4px;background:#aaffc3"></div>
<div class="" style="left:271.5px;top:72.5px;width:128px;height:28.5px;background:linear-gradient(rgba(255,255,255,.06),rgba(255,255,255,0) 30%,rgba(0,0,0,.05)),repeating-linear-gradient(90deg,#78dc7d 0,#6bd070 .6px,#6bd070 5.9px,#78dc7d 6.4px,#3d7c48 6.8px,#3d7c48 8.05px,#78dc7d 8.345px);border-radius:3px;"></div>
<div class="" style="left:271.5px;top:101.5px;width:128px;height:41px;background:repeating-linear-gradient(90deg,#a6fcbf 0,#a6fcbf 1.1px,rgba(166,252,191,0) 1.5px,rgba(166,252,191,0) 8.345px),rgba(60,120,72,.96);"></div>
<div class="" style="left:271.5px;top:119.5px;width:128px;height:6px;background:repeating-linear-gradient(90deg,#a6fcbf 0,#a6fcbf 1.3px,rgba(166,252,191,.75) 2px,rgba(166,252,191,0) 5px,rgba(166,252,191,0) 8.345px);"></div>
<div class="" style="left:271.5px;top:121.6px;width:128px;height:1.8px;background:repeating-linear-gradient(90deg,#a6fcbf 0,#a6fcbf 1.3px,rgba(166,252,191,.75) 2px,rgba(166,252,191,0) 6.5px,rgba(166,252,191,0) 8.346.5px);"></div>
<div class="" style="left:405px;top:72.5px;width:129px;height:28.5px;background:linear-gradient(rgba(255,255,255,.06),rgba(255,255,255,0) 30%,rgba(0,0,0,.05)),repeating-linear-gradient(90deg,#78dc7d 0,#6bd070 .6px,#6bd070 5.9px,#78dc7d 6.4px,#3d7c48 6.8px,#3d7c48 8.05px,#78dc7d 8.345px);border-radius:3px;"></div>
<div class="" style="left:405px;top:101.5px;width:129px;height:41px;background:repeating-linear-gradient(90deg,#a6fcbf 0,#a6fcbf 1.1px,rgba(166,252,191,0) 1.5px,rgba(166,252,191,0) 8.345px),rgba(60,120,72,.96);"></div>
<div class="" style="left:405px;top:119.5px;width:129px;height:6px;background:repeating-linear-gradient(90deg,#a6fcbf 0,#a6fcbf 1.3px,rgba(166,252,191,.75) 2px,rgba(166,252,191,0) 5px,rgba(166,252,191,0) 8.345px);"></div>
<div class="" style="left:405px;top:121.6px;width:129px;height:1.8px;background:repeating-linear-gradient(90deg,#a6fcbf 0,#a6fcbf 1.3px,rgba(166,252,191,.75) 2px,rgba(166,252,191,0) 6.5px,rgba(166,252,191,0) 8.346.5px);"></div>
<div class="" style="left:672px;top:72.5px;width:129px;height:28.5px;background:linear-gradient(rgba(255,255,255,.06),rgba(255,255,255,0) 30%,rgba(0,0,0,.05)),repeating-linear-gradient(90deg,#78dc7d 0,#6bd070 .6px,#6bd070 5.9px,#78dc7d 6.4px,#3d7c48 6.8px,#3d7c48 8.05px,#78dc7d 8.345px);border-radius:3px;"></div>
<div class="" style="left:672px;top:101.5px;width:129px;height:41px;background:repeating-linear-gradient(90deg,#a6fcbf 0,#a6fcbf 1.1px,rgba(166,252,191,0) 1.5px,rgba(166,252,191,0) 8.345px),rgba(60,120,72,.96);"></div>
<div class="" style="left:672px;top:119.5px;width:129px;height:6px;background:repeating-linear-gradient(90deg,#a6fcbf 0,#a6fcbf 1.3px,rgba(166,252,191,.75) 2px,rgba(166,252,191,0) 5px,rgba(166,252,191,0) 8.345px);"></div>
<div class="" style="left:672px;top:121.6px;width:129px;height:1.8px;background:repeating-linear-gradient(90deg,#a6fcbf 0,#a6fcbf 1.3px,rgba(166,252,191,.75) 2px,rgba(166,252,191,0) 6.5px,rgba(166,252,191,0) 8.346.5px);"></div>
<div class="" style="left:805px;top:72.5px;width:129px;height:28.5px;background:linear-gradient(rgba(255,255,255,.06),rgba(255,255,255,0) 30%,rgba(0,0,0,.05)),repeating-linear-gradient(90deg,#78dc7d 0,#6bd070 .6px,#6bd070 5.9px,#78dc7d 6.4px,#3d7c48 6.8px,#3d7c48 8.05px,#78dc7d 8.345px);border-radius:3px;"></div>
<div class="" style="left:805px;top:101.5px;width:129px;height:41px;background:repeating-linear-gradient(90deg,#a6fcbf 0,#a6fcbf 1.1px,rgba(166,252,191,0) 1.5px,rgba(166,252,191,0) 8.345px),rgba(60,120,72,.96);"></div>
<div class="" style="left:805px;top:119.5px;width:129px;height:6px;background:repeating-linear-gradient(90deg,#a6fcbf 0,#a6fcbf 1.3px,rgba(166,252,191,.75) 2px,rgba(166,252,191,0) 5px,rgba(166,252,191,0) 8.345px);"></div>
<div class="" style="left:805px;top:121.6px;width:129px;height:1.8px;background:repeating-linear-gradient(90deg,#a6fcbf 0,#a6fcbf 1.3px,rgba(166,252,191,.75) 2px,rgba(166,252,191,0) 6.5px,rgba(166,252,191,0) 8.346.5px);"></div>
<div class="" style="left:938px;top:72.5px;width:130px;height:28.5px;background:linear-gradient(rgba(255,255,255,.06),rgba(255,255,255,0) 30%,rgba(0,0,0,.05)),repeating-linear-gradient(90deg,#78dc7d 0,#6bd070 .6px,#6bd070 5.9px,#78dc7d 6.4px,#3d7c48 6.8px,#3d7c48 8.05px,#78dc7d 8.345px);border-radius:3px;"></div>
<div class="" style="left:938px;top:101.5px;width:130px;height:41px;background:repeating-linear-gradient(90deg,#a6fcbf 0,#a6fcbf 1.1px,rgba(166,252,191,0) 1.5px,rgba(166,252,191,0) 8.345px),rgba(60,120,72,.96);"></div>
<div class="" style="left:938px;top:119.5px;width:130px;height:6px;background:repeating-linear-gradient(90deg,#a6fcbf 0,#a6fcbf 1.3px,rgba(166,252,191,.75) 2px,rgba(166,252,191,0) 5px,rgba(166,252,191,0) 8.345px);"></div>
<div class="" style="left:938px;top:121.6px;width:130px;height:1.8px;background:repeating-linear-gradient(90deg,#a6fcbf 0,#a6fcbf 1.3px,rgba(166,252,191,.75) 2px,rgba(166,252,191,0) 6.5px,rgba(166,252,191,0) 8.346.5px);"></div>
<div class="" style="left:1472px;top:72.5px;width:129.7px;height:28.5px;background:linear-gradient(rgba(255,255,255,.06),rgba(255,255,255,0) 30%,rgba(0,0,0,.05)),repeating-linear-gradient(90deg,#78dc7d 0,#6bd070 .6px,#6bd070 5.9px,#78dc7d 6.4px,#3d7c48 6.8px,#3d7c48 8.05px,#78dc7d 8.345px);border-radius:3px;"></div>
<div class="" style="left:1472px;top:101.5px;width:129.7px;height:41px;background:repeating-linear-gradient(90deg,#a6fcbf 0,#a6fcbf 1.1px,rgba(166,252,191,0) 1.5px,rgba(166,252,191,0) 8.345px),rgba(60,120,72,.96);"></div>
<div class="" style="left:1472px;top:119.5px;width:129.7px;height:6px;background:repeating-linear-gradient(90deg,#a6fcbf 0,#a6fcbf 1.3px,rgba(166,252,191,.75) 2px,rgba(166,252,191,0) 5px,rgba(166,252,191,0) 8.345px);"></div>
<div class="" style="left:1472px;top:121.6px;width:129.7px;height:1.8px;background:repeating-linear-gradient(90deg,#a6fcbf 0,#a6fcbf 1.3px,rgba(166,252,191,.75) 2px,rgba(166,252,191,0) 6.5px,rgba(166,252,191,0) 8.346.5px);"></div>
<div class="" style="left:1606px;top:72.5px;width:125px;height:28.5px;background:linear-gradient(rgba(255,255,255,.06),rgba(255,255,255,0) 30%,rgba(0,0,0,.05)),repeating-linear-gradient(90deg,#78dc7d 0,#6bd070 .6px,#6bd070 5.9px,#78dc7d 6.4px,#3d7c48 6.8px,#3d7c48 8.05px,#78dc7d 8.345px);border-radius:3px;"></div>
<div class="" style="left:1606px;top:101.5px;width:125px;height:41px;background:repeating-linear-gradient(90deg,#a6fcbf 0,#a6fcbf 1.1px,rgba(166,252,191,0) 1.5px,rgba(166,252,191,0) 8.345px),rgba(60,120,72,.96);"></div>
<div class="" style="left:1606px;top:119.5px;width:125px;height:6px;background:repeating-linear-gradient(90deg,#a6fcbf 0,#a6fcbf 1.3px,rgba(166,252,191,.75) 2px,rgba(166,252,191,0) 5px,rgba(166,252,191,0) 8.345px);"></div>
<div class="" style="left:1606px;top:121.6px;width:125px;height:1.8px;background:repeating-linear-gradient(90deg,#a6fcbf 0,#a6fcbf 1.3px,rgba(166,252,191,.75) 2px,rgba(166,252,191,0) 6.5px,rgba(166,252,191,0) 8.346.5px);"></div>
<div class="" style="left:1739px;top:72.5px;width:116.5px;height:28.5px;background:linear-gradient(rgba(255,255,255,.06),rgba(255,255,255,0) 30%,rgba(0,0,0,.05)),repeating-linear-gradient(90deg,#78dc7d 0,#6bd070 .6px,#6bd070 5.9px,#78dc7d 6.4px,#3d7c48 6.8px,#3d7c48 8.05px,#78dc7d 8.345px);border-radius:3px;"></div>
<div class="" style="left:1739px;top:101.5px;width:116.5px;height:41px;background:repeating-linear-gradient(90deg,#a6fcbf 0,#a6fcbf 1.1px,rgba(166,252,191,0) 1.5px,rgba(166,252,191,0) 8.345px),rgba(60,120,72,.96);"></div>
<div class="" style="left:1739px;top:119.5px;width:116.5px;height:6px;background:repeating-linear-gradient(90deg,#a6fcbf 0,#a6fcbf 1.3px,rgba(166,252,191,.75) 2px,rgba(166,252,191,0) 5px,rgba(166,252,191,0) 8.345px);"></div>
<div class="" style="left:1739px;top:121.6px;width:116.5px;height:1.8px;background:repeating-linear-gradient(90deg,#a6fcbf 0,#a6fcbf 1.3px,rgba(166,252,191,.75) 2px,rgba(166,252,191,0) 6.5px,rgba(166,252,191,0) 8.346.5px);"></div>
<div class="" style="left:1863.8px;top:72.5px;width:4.8px;height:28.5px;background:linear-gradient(rgba(255,255,255,.06),rgba(255,255,255,0) 30%,rgba(0,0,0,.05)),repeating-linear-gradient(90deg,#78dc7d 0,#6bd070 .6px,#6bd070 5.9px,#78dc7d 6.4px,#3d7c48 6.8px,#3d7c48 8.05px,#78dc7d 8.345px);border-radius:3px;"></div>
<div class="" style="left:1863.8px;top:101.5px;width:4.8px;height:41px;background:repeating-linear-gradient(90deg,#a6fcbf 0,#a6fcbf 1.1px,rgba(166,252,191,0) 1.5px,rgba(166,252,191,0) 8.345px),rgba(60,120,72,.96);"></div>
<div class="" style="left:1863.8px;top:119.5px;width:4.8px;height:6px;background:repeating-linear-gradient(90deg,#a6fcbf 0,#a6fcbf 1.3px,rgba(166,252,191,.75) 2px,rgba(166,252,191,0) 5px,rgba(166,252,191,0) 8.345px);"></div>
<div class="" style="left:1863.8px;top:121.6px;width:4.8px;height:1.8px;background:repeating-linear-gradient(90deg,#a6fcbf 0,#a6fcbf 1.3px,rgba(166,252,191,.75) 2px,rgba(166,252,191,0) 6.5px,rgba(166,252,191,0) 8.346.5px);"></div>
<div class="" style="left:1873px;top:72.5px;width:332.8px;height:28.5px;background:linear-gradient(rgba(255,255,255,.06),rgba(255,255,255,0) 30%,rgba(0,0,0,.05)),repeating-linear-gradient(90deg,#78dc7d 0,#6bd070 .6px,#6bd070 5.9px,#78dc7d 6.4px,#3d7c48 6.8px,#3d7c48 8.05px,#78dc7d 8.345px);border-radius:3px;"></div>
<div class="" style="left:1873px;top:101.5px;width:332.8px;height:41px;background:repeating-linear-gradient(90deg,#a6fcbf 0,#a6fcbf 1.1px,rgba(166,252,191,0) 1.5px,rgba(166,252,191,0) 8.345px),rgba(60,120,72,.96);"></div>
<div class="" style="left:1873px;top:119.5px;width:332.8px;height:6px;background:repeating-linear-gradient(90deg,#a6fcbf 0,#a6fcbf 1.3px,rgba(166,252,191,.75) 2px,rgba(166,252,191,0) 5px,rgba(166,252,191,0) 8.345px);"></div>
<div class="" style="left:1873px;top:121.6px;width:332.8px;height:1.8px;background:repeating-linear-gradient(90deg,#a6fcbf 0,#a6fcbf 1.3px,rgba(166,252,191,.75) 2px,rgba(166,252,191,0) 6.5px,rgba(166,252,191,0) 8.346.5px);"></div>
<div class="" style="left:600.7px;top:72.5px;width:58.3px;height:28.5px;background:linear-gradient(#74dd79,#63c869)"></div>
<div class="" style="left:600.7px;top:101.5px;width:58.3px;height:41px;background:#a6fcbf"></div>
<div class="" style="left:622.5px;top:72.5px;width:1px;height:70px;background:#4f9e5a"></div>
<div class="" style="left:646.5px;top:72.5px;width:1px;height:70px;background:#4f9e5a"></div>
<div class="" style="left:1201px;top:72.5px;width:200.6px;height:28.5px;background:linear-gradient(#74dd79,#63c869)"></div>
<div class="" style="left:1201px;top:72.5px;width:67px;height:28.5px;background:repeating-linear-gradient(90deg,#74df79 0,#74df79 2.6px,#5abd61 3.4px,#74df79 4.17px)"></div>
<div class="" style="left:1268px;top:72.5px;width:1px;height:28.5px;background:#55b25e"></div>
<div class="" style="left:1280px;top:72.5px;width:1px;height:28.5px;background:#55b25e"></div>
<div class="" style="left:1293px;top:72.5px;width:1px;height:28.5px;background:#55b25e"></div>
<div class="" style="left:1305px;top:72.5px;width:1px;height:28.5px;background:#55b25e"></div>
<div class="" style="left:1330px;top:72.5px;width:1px;height:28.5px;background:#55b25e"></div>
<div class="" style="left:1355px;top:72.5px;width:1px;height:28.5px;background:#55b25e"></div>
<div class="" style="left:1201px;top:101.5px;width:200.6px;height:41px;background:#a6fcbf"></div>
<div class="" style="left:1201px;top:101.5px;width:67px;height:41px;background:linear-gradient(#a6fcbf,#a6fcbf) 0 50%/100% 1.2px no-repeat,repeating-linear-gradient(90deg,#3f7d4b 0,#3f7d4b 1.2px,#a6fcbf 1.6px,#a6fcbf 2.6px,#3f7d4b 3px,#3f7d4b 4.17px)"></div>
<div class="" style="left:1268px;top:101.5px;width:67px;height:41px;background:linear-gradient(rgba(63,125,75,.8) 0,rgba(63,125,75,0) 35%,rgba(63,125,75,0) 65%,rgba(63,125,75,.8) 100%),repeating-linear-gradient(90deg,#a6fcbf 0,#a6fcbf 1.4px,#5a9c68 1.8px,#a6fcbf 2.2px)"></div>
<div class="" style="left:1355px;top:101.5px;width:1px;height:41px;background:#6fbf80"></div>
<div class="" style="left:1379px;top:101.5px;width:1px;height:41px;background:#6fbf80"></div>
<div class="" style="left:1435px;top:72.5px;width:28.7px;height:28.5px;background:linear-gradient(#74dd79,#63c869)"></div>
<div class="" style="left:1450px;top:72.5px;width:1.5px;height:28.5px;background:#55b25e"></div>
<div class="" style="left:1435px;top:101.5px;width:28.7px;height:41px;background:#a6fcbf"></div>
<div class="" style="left:1435px;top:101.5px;width:16px;height:41px;background:repeating-linear-gradient(90deg,#a6fcbf 0,#a6fcbf 1.4px,#4f9e5a 1.8px,#a6fcbf 2.2px)"></div>
<div class="h hg" style="left:400.3px;top:144.2px;width:65.5px;height:28.3px;"><i class="ic"></i><span class="lb" style="transform:scaleX(0.76);letter-spacing:2.93px;">T..)</span></div>
<div class="bg" style="left:400.3px;top:169px;width:65.5px;height:45.6px;"></div>
<svg style="left:400.3px;top:173.5px" width="65.5" height="41" viewBox="0 0 65.5 41"><path d="M0 4L1.6 12.2L3.2 7L4.8 10.7L6.4 9.2L8 13.7L9.6 9.6L11.2 11.7L12.8 6.6L14.4 12L16 4.8L17.6 14.7L19.2 3.9L20.8 13.3L22.4 9.2L24 13.3L25.6 12.5L27.2 11.4L28.8 4.7L30.4 14.9L32 4.5L33.6 10.7L35.2 6.7L36.8 10.6L38.4 6.1L40 11.6L41.6 7.5L43.2 14.5L44.8 7.3L46.4 11.8L48 9.5L49.6 13.7L51.2 6.7L52.8 12.5L54.4 5L56 13.1L57.6 6.5L59.2 14.9L60.8 10.8L62.4 10.6L64 4.7L64 38.8L62.4 32.9L60.8 32.7L59.2 28.6L57.6 37L56 30.4L54.4 38.5L52.8 31L51.2 36.8L49.6 29.8L48 34L46.4 31.7L44.8 36.2L43.2 29L41.6 36L40 31.9L38.4 37.4L36.8 32.9L35.2 36.8L33.6 32.8L32 39L30.4 28.6L28.8 38.8L27.2 32.1L25.6 31L24 30.2L22.4 34.3L20.8 30.2L19.2 39.6L17.6 28.8L16 38.7L14.4 31.5L12.8 36.9L11.2 31.8L9.6 33.9L8 29.8L6.4 34.3L4.8 32.8L3.2 36.5L1.6 31.3L0 39.5Z" fill="#a6fcbf"/></svg>
<div class="" style="left:400.3px;top:187.5px;width:65.5px;height:13.5px;background:#a6fcbf"></div>
<div class="h hg" style="left:467px;top:144.2px;width:65.5px;height:28.3px;"><i class="ic"></i><span class="lb" style="transform:scaleX(0.76);letter-spacing:2.93px;">T..)</span></div>
<div class="bg" style="left:467px;top:169px;width:65.5px;height:45.6px;"></div>
<svg style="left:467px;top:173.5px" width="65.5" height="41" viewBox="0 0 65.5 41"><path d="M0 8.7L1.6 15L3.2 5.4L4.8 14.6L6.4 9.3L8 11.1L9.6 7.9L11.2 11.2L12.8 8.6L14.4 12.8L16 6.3L17.6 10.5L19.2 4.8L20.8 10.5L22.4 7.4L24 14.1L25.6 4.2L27.2 11.8L28.8 11.1L30.4 11.1L32 6.4L33.6 14.1L35.2 3.6L36.8 10.9L38.4 8.3L40 10.6L41.6 9.6L43.2 11.9L44.8 3.7L46.4 13.4L48 11.7L49.6 13.1L51.2 6.9L52.8 14L54.4 9.7L56 12.6L57.6 5.5L59.2 10.4L60.8 6.1L62.4 11.1L64 11.5L64 32L62.4 32.4L60.8 37.4L59.2 33.1L57.6 38L56 30.9L54.4 33.8L52.8 29.5L51.2 36.6L49.6 30.4L48 31.8L46.4 30.1L44.8 39.8L43.2 31.6L41.6 33.9L40 32.9L38.4 35.2L36.8 32.6L35.2 39.9L33.6 29.4L32 37.1L30.4 32.4L28.8 32.4L27.2 31.7L25.6 39.3L24 29.4L22.4 36.1L20.8 33L19.2 38.7L17.6 33L16 37.2L14.4 30.7L12.8 34.9L11.2 32.3L9.6 35.6L8 32.4L6.4 34.2L4.8 28.9L3.2 38.1L1.6 28.5L0 34.8Z" fill="#a6fcbf"/></svg>
<div class="" style="left:467px;top:187.5px;width:65.5px;height:13.5px;background:#a6fcbf"></div>
<div class="h hg" style="left:800.8px;top:144.2px;width:65.5px;height:28.3px;"><i class="ic"></i><span class="lb" style="transform:scaleX(0.76);letter-spacing:2.93px;">T..)</span></div>
<div class="bg" style="left:800.8px;top:169px;width:65.5px;height:45.6px;"></div>
<svg style="left:800.8px;top:173.5px" width="65.5" height="41" viewBox="0 0 65.5 41"><path d="M0 13.2L1.6 12.2L3.2 6.5L4.8 13.7L6.4 11.2L8 12L9.6 5L11.2 12L12.8 11.8L14.4 14.8L16 10L17.6 12.8L19.2 10.2L20.8 10.9L22.4 5.8L24 11.6L25.6 11L27.2 12.2L28.8 4.8L30.4 12.5L32 7.6L33.6 10.7L35.2 12.4L36.8 11.7L38.4 9.2L40 11.5L41.6 8.4L43.2 13.1L44.8 7.2L46.4 12.9L48 13.3L49.6 12.7L51.2 5L52.8 14L54.4 9.9L56 10.6L57.6 10.5L59.2 14.8L60.8 7.8L62.4 11.8L64 9L64 34.5L62.4 31.7L60.8 35.7L59.2 28.7L57.6 33L56 32.9L54.4 33.6L52.8 29.5L51.2 38.5L49.6 30.8L48 30.2L46.4 30.6L44.8 36.3L43.2 30.4L41.6 35.1L40 32L38.4 34.3L36.8 31.8L35.2 31.1L33.6 32.8L32 35.9L30.4 31L28.8 38.7L27.2 31.3L25.6 32.5L24 31.9L22.4 37.7L20.8 32.6L19.2 33.3L17.6 30.7L16 33.5L14.4 28.7L12.8 31.7L11.2 31.5L9.6 38.5L8 31.5L6.4 32.3L4.8 29.8L3.2 37L1.6 31.3L0 30.3Z" fill="#a6fcbf"/></svg>
<div class="" style="left:800.8px;top:187.5px;width:65.5px;height:13.5px;background:#a6fcbf"></div>
<div class="h hg" style="left:867.6px;top:144.2px;width:62px;height:28.3px;"><i class="ic"></i><span class="lb" style="transform:scaleX(0.76);letter-spacing:2.93px;">T..)</span></div>
<div class="bg" style="left:867.6px;top:169px;width:62px;height:45.6px;"></div>
<svg style="left:867.6px;top:173.5px" width="62" height="41" viewBox="0 0 62 41"><path d="M0 5.1L1.6 10.8L3.2 3.3L4.8 14.8L6.4 6.9L8 14.5L9.6 13.3L11.2 12.1L12.8 11.6L14.4 12.6L16 8.4L17.6 12.1L19.2 12.1L20.8 10.6L22.4 12.1L24 13.6L25.6 4.4L27.2 12.7L28.8 10.7L30.4 14.8L32 6.4L33.6 13.2L35.2 9L36.8 14.9L38.4 10.6L40 13.4L41.6 11.4L43.2 12.4L44.8 8.1L46.4 11.1L48 5.3L49.6 10.5L51.2 10.4L52.8 14L54.4 10.8L56 12.3L57.6 3.1L59.2 11.9L60.8 10.9L60.8 32.6L59.2 31.6L57.6 40.4L56 31.2L54.4 32.7L52.8 29.5L51.2 33.1L49.6 33L48 38.2L46.4 32.4L44.8 35.4L43.2 31.1L41.6 32.1L40 30.1L38.4 32.9L36.8 28.6L35.2 34.5L33.6 30.3L32 37.1L30.4 28.7L28.8 32.8L27.2 30.8L25.6 39.1L24 29.9L22.4 31.4L20.8 32.9L19.2 31.4L17.6 31.4L16 35.1L14.4 30.9L12.8 31.9L11.2 31.4L9.6 30.2L8 29L6.4 36.6L4.8 28.7L3.2 40.2L1.6 32.7L0 38.4Z" fill="#a6fcbf"/></svg>
<div class="" style="left:867.6px;top:187.5px;width:62px;height:13.5px;background:#a6fcbf"></div>
<div class="h hg" style="left:934.3px;top:144.2px;width:65.5px;height:28.3px;"><i class="ic"></i><span class="lb" style="transform:scaleX(0.76);letter-spacing:2.93px;">T..)</span></div>
<div class="bg" style="left:934.3px;top:169px;width:65.5px;height:45.6px;"></div>
<svg style="left:934.3px;top:173.5px" width="65.5" height="41" viewBox="0 0 65.5 41"><path d="M0 10.1L1.6 14.2L3.2 9.4L4.8 13.8L6.4 3.4L8 14.8L9.6 7.7L11.2 14.4L12.8 9.4L14.4 11.9L16 4.2L17.6 11.4L19.2 6.6L20.8 10.8L22.4 3.4L24 11.3L25.6 5.2L27.2 13.7L28.8 4L30.4 11L32 4.8L33.6 12.2L35.2 5.6L36.8 11L38.4 6.8L40 13.7L41.6 9.1L43.2 14.8L44.8 12.3L46.4 11L48 12.9L49.6 13.8L51.2 12.2L52.8 11.6L54.4 7.2L56 13.4L57.6 3.4L59.2 10.7L60.8 6.4L62.4 13.7L64 7.8L64 35.7L62.4 29.8L60.8 37.1L59.2 32.8L57.6 40.1L56 30.1L54.4 36.3L52.8 31.9L51.2 31.3L49.6 29.7L48 30.6L46.4 32.5L44.8 31.2L43.2 28.7L41.6 34.4L40 29.8L38.4 36.7L36.8 32.5L35.2 37.9L33.6 31.3L32 38.7L30.4 32.5L28.8 39.5L27.2 29.8L25.6 38.3L24 32.2L22.4 40.1L20.8 32.7L19.2 36.9L17.6 32.1L16 39.3L14.4 31.6L12.8 34.1L11.2 29.1L9.6 35.8L8 28.7L6.4 40.1L4.8 29.7L3.2 34.1L1.6 29.3L0 33.4Z" fill="#a6fcbf"/></svg>
<div class="" style="left:934.3px;top:187.5px;width:65.5px;height:13.5px;background:#a6fcbf"></div>
<div class="h hg" style="left:1001.1px;top:144.2px;width:65.5px;height:28.3px;"><i class="ic"></i><span class="lb" style="transform:scaleX(0.76);letter-spacing:2.93px;">T..)</span></div>
<div class="bg" style="left:1001.1px;top:169px;width:65.5px;height:45.6px;"></div>
<svg style="left:1001.1px;top:173.5px" width="65.5" height="41" viewBox="0 0 65.5 41"><path d="M0 3.5L1.6 12L3.2 12.3L4.8 12.8L6.4 6.4L8 12.1L9.6 10.6L11.2 13.6L12.8 4.9L14.4 12.4L16 5.3L17.6 12.7L19.2 6.8L20.8 11.4L22.4 10.7L24 10.7L25.6 8.7L27.2 13.1L28.8 9.4L30.4 14.1L32 12.5L33.6 13.2L35.2 10.8L36.8 13.2L38.4 4.9L40 11L41.6 11.2L43.2 13.8L44.8 4.8L46.4 13.9L48 4.2L49.6 13.2L51.2 10.9L52.8 14.7L54.4 9.8L56 14.7L57.6 7.1L59.2 14.7L60.8 12.4L62.4 13.9L64 8.8L64 34.7L62.4 29.6L60.8 31.1L59.2 28.8L57.6 36.4L56 28.8L54.4 33.7L52.8 28.8L51.2 32.6L49.6 30.3L48 39.3L46.4 29.6L44.8 38.7L43.2 29.7L41.6 32.3L40 32.5L38.4 38.6L36.8 30.3L35.2 32.7L33.6 30.3L32 31L30.4 29.4L28.8 34.1L27.2 30.4L25.6 34.8L24 32.8L22.4 32.8L20.8 32.1L19.2 36.7L17.6 30.8L16 38.2L14.4 31.1L12.8 38.6L11.2 29.9L9.6 32.9L8 31.4L6.4 37.1L4.8 30.7L3.2 31.2L1.6 31.5L0 40Z" fill="#a6fcbf"/></svg>
<div class="" style="left:1001.1px;top:187.5px;width:65.5px;height:13.5px;background:#a6fcbf"></div>
<div class="h hg" style="left:1735.5px;top:144.2px;width:65.5px;height:28.3px;"><i class="ic"></i><span class="lb" style="transform:scaleX(0.76);letter-spacing:2.93px;">T..)</span></div>
<div class="bg" style="left:1735.5px;top:169px;width:65.5px;height:45.6px;"></div>
<svg style="left:1735.5px;top:173.5px" width="65.5" height="41" viewBox="0 0 65.5 41"><path d="M0 6.2L1.6 11.1L3.2 4.9L4.8 14.2L6.4 7.7L8 13.7L9.6 7.1L11.2 13.8L12.8 3.5L14.4 12.1L16 9.6L17.6 11.1L19.2 11.4L20.8 12.7L22.4 5.2L24 13L25.6 6.2L27.2 12.4L28.8 7.4L30.4 14.4L32 3.3L33.6 11L35.2 10.4L36.8 10.6L38.4 8.6L40 12.4L41.6 9.7L43.2 14.3L44.8 8L46.4 13.6L48 6.4L49.6 12.9L51.2 5.3L52.8 11.6L54.4 3.3L56 10.7L57.6 6.6L59.2 13L60.8 4.9L62.4 13.4L64 13.3L64 30.2L62.4 30.1L60.8 38.6L59.2 30.5L57.6 36.9L56 32.8L54.4 40.2L52.8 31.9L51.2 38.2L49.6 30.6L48 37.1L46.4 29.9L44.8 35.5L43.2 29.2L41.6 33.8L40 31.1L38.4 34.9L36.8 32.9L35.2 33.1L33.6 32.5L32 40.2L30.4 29.1L28.8 36.1L27.2 31.1L25.6 37.3L24 30.5L22.4 38.3L20.8 30.8L19.2 32.1L17.6 32.4L16 33.9L14.4 31.4L12.8 40L11.2 29.7L9.6 36.4L8 29.8L6.4 35.8L4.8 29.3L3.2 38.6L1.6 32.4L0 37.3Z" fill="#a6fcbf"/></svg>
<div class="" style="left:1735.5px;top:187.5px;width:65.5px;height:13.5px;background:#a6fcbf"></div>
<div class="h hg" style="left:1802.2px;top:144.2px;width:49.6px;height:28.3px;"><i class="ic"></i><span class="lb mu" style="transform:scaleX(0.76);letter-spacing:3.15px;">..)</span></div>
<div class="bg" style="left:1802.2px;top:169px;width:49.6px;height:45.6px;"></div>
<svg style="left:1802.2px;top:173.5px" width="49.6" height="41" viewBox="0 0 49.6 41"><path d="M0 3.6L1.6 13.3L3.2 7.3L4.8 10.4L6.4 6.1L8 13.6L9.6 12L11.2 12L12.8 5.5L14.4 10.7L16 9L17.6 13.8L19.2 12.3L20.8 12.4L22.4 12.4L24 14.4L25.6 5L27.2 14.7L28.8 7.6L30.4 13.5L32 5.4L33.6 12.6L35.2 3.4L36.8 11.8L38.4 8.4L40 13.4L41.6 6.2L43.2 10.8L44.8 11.6L46.4 13.8L48 6.3L48 37.2L46.4 29.7L44.8 31.9L43.2 32.7L41.6 37.3L40 30.1L38.4 35.1L36.8 31.7L35.2 40.1L33.6 30.9L32 38.1L30.4 30L28.8 35.9L27.2 28.8L25.6 38.5L24 29.1L22.4 31.1L20.8 31.1L19.2 31.2L17.6 29.7L16 34.5L14.4 32.8L12.8 38L11.2 31.5L9.6 31.5L8 29.9L6.4 37.4L4.8 33.1L3.2 36.2L1.6 30.2L0 39.9Z" fill="#a6fcbf"/></svg>
<div class="" style="left:1802.2px;top:187.5px;width:49.6px;height:13.5px;background:#a6fcbf"></div>
<div class="h hg" style="left:133.2px;top:216.2px;width:65.5px;height:28.3px;"><i class="ic"></i><span class="lb" style="transform:scaleX(0.76);letter-spacing:2.93px;">T..)</span></div>
<div class="bg" style="left:133.2px;top:241px;width:65.5px;height:45.6px;"></div>
<svg style="left:133.2px;top:245.5px" width="65.5" height="41" viewBox="0 0 65.5 41"><path d="M0.8 11.7V30.3M2.9 7.4V34.6M5 11V31M7.1 1.5V40.5M9.1 7.6V34.4M11.2 12.6V29.4M13.3 6.8V35.2M15.4 10.8V31.2M17.5 4.1V37.9M19.6 5V37M21.7 1.5V40.5M23.7 11.2V30.8M25.8 6V36M27.9 10.3V31.7M30 10.2V31.8M32.1 8.5V33.5M34.2 6.3V35.7M36.3 1.5V40.5M38.3 8.6V33.4M40.4 12.5V29.5M42.5 5.8V36.2M44.6 8.9V33.1M46.7 9.3V32.7M48.8 11.6V30.4M50.9 1.5V40.5M52.9 8.5V33.5M55 12.7V29.3M57.1 10.2V31.8M59.2 7.6V34.4M61.3 8.8V33.2M63.4 7.1V34.9" stroke="#a6fcbf" stroke-width="1.45" fill="none"/><path d="M0 21 H65.5" stroke="#a6fcbf" stroke-width="5"/></svg>
<div class="h hg" style="left:200px;top:216.2px;width:49.6px;height:28.3px;"><i class="ic"></i><span class="lb mu" style="transform:scaleX(0.76);letter-spacing:3.15px;">..)</span></div>
<div class="bg" style="left:200px;top:241px;width:49.6px;height:45.6px;"></div>
<svg style="left:200px;top:245.5px" width="49.6" height="41" viewBox="0 0 49.6 41"><path d="M0.8 10.2V31.8M2.9 7V35M5 8.1V33.9M7.1 1.5V40.5M9.1 5.2V36.8M11.2 6.9V35.1M13.3 8.9V33.1M15.4 8.2V33.8M17.5 10.7V31.3M19.6 6.6V35.4M21.7 1.5V40.5M23.7 13.5V28.5M25.8 9.3V32.7M27.9 6.3V35.7M30 12.6V29.4M32.1 12.7V29.3M34.2 3.5V38.5M36.3 1.5V40.5M38.3 8.1V33.9M40.4 9.2V32.8M42.5 5.5V36.5M44.6 4.9V37.1M46.7 7.1V34.9M48.8 12.2V29.8" stroke="#a6fcbf" stroke-width="1.45" fill="none"/><path d="M0 21 H49.6" stroke="#a6fcbf" stroke-width="5"/></svg>
<div class="h hg" style="left:266.7px;top:216.2px;width:65.5px;height:28.3px;"><i class="ic"></i><span class="lb" style="transform:scaleX(0.76);letter-spacing:2.93px;">T..)</span></div>
<div class="bg" style="left:266.7px;top:241px;width:65.5px;height:45.6px;"></div>
<svg style="left:266.7px;top:245.5px" width="65.5" height="41" viewBox="0 0 65.5 41"><path d="M0.8 9.9V32.1M2.9 9.2V32.8M5 9.3V32.7M7.1 1.5V40.5M9.1 8.6V33.4M11.2 6.7V35.3M13.3 6.4V35.6M15.4 10.9V31.1M17.5 8.3V33.7M19.6 6.1V35.9M21.7 1.5V40.5M23.7 14.1V27.9M25.8 11.1V30.9M27.9 11.2V30.8M30 10.2V31.8M32.1 9.3V32.7M34.2 9.8V32.2M36.3 1.5V40.5M38.3 9.5V32.5M40.4 8V34M42.5 10.9V31.1M44.6 10.4V31.6M46.7 10.2V31.8M48.8 11.4V30.6M50.9 1.5V40.5M52.9 11.6V30.4M55 11.1V30.9M57.1 12V30M59.2 5V37M61.3 9.4V32.6M63.4 12.1V29.9" stroke="#a6fcbf" stroke-width="1.45" fill="none"/><path d="M0 21 H65.5" stroke="#a6fcbf" stroke-width="5"/></svg>
<div class="h hg" style="left:333.5px;top:216.2px;width:62.5px;height:28.3px;"><i class="ic"></i><span class="lb" style="transform:scaleX(0.76);letter-spacing:2.93px;">T..)</span></div>
<div class="bg" style="left:333.5px;top:241px;width:62.5px;height:45.6px;"></div>
<svg style="left:333.5px;top:245.5px" width="62.5" height="41" viewBox="0 0 62.5 41"><path d="M0.8 5.4V36.6M2.9 12.2V29.8M5 12.3V29.7M7.1 1.5V40.5M9.1 7.5V34.5M11.2 6.8V35.2M13.3 12.2V29.8M15.4 11.1V30.9M17.5 10.3V31.7M19.6 6.7V35.3M21.7 1.5V40.5M23.7 14.1V27.9M25.8 8V34M27.9 4.6V37.4M30 9.6V32.4M32.1 13.8V28.2M34.2 6.2V35.8M36.3 1.5V40.5M38.3 11.7V30.3M40.4 10.9V31.1M42.5 9.2V32.8M44.6 7V35M46.7 7V35M48.8 10.1V31.9M50.9 1.5V40.5M52.9 6V36M55 12.7V29.3M57.1 12.9V29.1M59.2 2.8V39.2M61.3 4.7V37.3" stroke="#a6fcbf" stroke-width="1.45" fill="none"/><path d="M0 21 H62.5" stroke="#a6fcbf" stroke-width="5"/></svg>
<div class="h hg" style="left:400.3px;top:216.2px;width:65.5px;height:28.3px;"><i class="ic"></i><span class="lb" style="transform:scaleX(0.76);letter-spacing:2.93px;">T..)</span></div>
<div class="bg" style="left:400.3px;top:241px;width:65.5px;height:45.6px;"></div>
<svg style="left:400.3px;top:245.5px" width="65.5" height="41" viewBox="0 0 65.5 41"><path d="M0.8 3.5V38.5M2.9 9.9V32.1M5 9V33M7.1 1.5V40.5M9.1 5.5V36.5M11.2 5V37M13.3 10.5V31.5M15.4 11.7V30.3M17.5 9.2V32.8M19.6 9.6V32.4M21.7 1.5V40.5M23.7 9.6V32.4M25.8 5.8V36.2M27.9 7.6V34.4M30 8.6V33.4M32.1 8.8V33.2M34.2 4.3V37.7M36.3 1.5V40.5M38.3 6.6V35.4M40.4 8V34M42.5 8.4V33.6M44.6 9.3V32.7M46.7 6.5V35.5M48.8 11.8V30.2M50.9 1.5V40.5M52.9 5.9V36.1M55 7.7V34.3M57.1 8.7V33.3M59.2 10.9V31.1M61.3 12.5V29.5M63.4 7V35" stroke="#a6fcbf" stroke-width="1.45" fill="none"/><path d="M0 21 H65.5" stroke="#a6fcbf" stroke-width="5"/></svg>
<div class="h hg" style="left:467px;top:216.2px;width:65.5px;height:28.3px;"><i class="ic"></i><span class="lb" style="transform:scaleX(0.76);letter-spacing:2.93px;">T..)</span></div>
<div class="bg" style="left:467px;top:241px;width:65.5px;height:45.6px;"></div>
<svg style="left:467px;top:245.5px" width="65.5" height="41" viewBox="0 0 65.5 41"><path d="M0.8 7.8V34.2M2.9 8.9V33.1M5 13.4V28.6M7.1 1.5V40.5M9.1 9.9V32.1M11.2 12V30M13.3 10.6V31.4M15.4 8.2V33.8M17.5 4.2V37.8M19.6 8.3V33.7M21.7 1.5V40.5M23.7 9V33M25.8 7.6V34.4M27.9 10.8V31.2M30 10V32M32.1 9.8V32.2M34.2 10.8V31.2M36.3 1.5V40.5M38.3 7.3V34.7M40.4 9.6V32.4M42.5 3V39M44.6 7.9V34.1M46.7 8.6V33.4M48.8 13V29M50.9 1.5V40.5M52.9 12.2V29.8M55 8.3V33.7M57.1 12.9V29.1M59.2 7.4V34.6M61.3 5.8V36.2M63.4 8.4V33.6" stroke="#a6fcbf" stroke-width="1.45" fill="none"/><path d="M0 21 H65.5" stroke="#a6fcbf" stroke-width="5"/></svg>
<div class="h hg" style="left:667.3px;top:216.2px;width:65.5px;height:28.3px;"><i class="ic"></i><span class="lb" style="transform:scaleX(0.76);letter-spacing:2.93px;">T..)</span></div>
<div class="bg" style="left:667.3px;top:241px;width:65.5px;height:45.6px;"></div>
<svg style="left:667.3px;top:245.5px" width="65.5" height="41" viewBox="0 0 65.5 41"><path d="M0.8 6.3V35.7M2.9 8.5V33.5M5 11.9V30.1M7.1 1.5V40.5M9.1 10V32M11.2 8.6V33.4M13.3 7.9V34.1M15.4 10.8V31.2M17.5 9.2V32.8M19.6 12.2V29.8M21.7 1.5V40.5M23.7 13V29M25.8 3.6V38.4M27.9 9.4V32.6M30 11.5V30.5M32.1 7.9V34.1M34.2 5.6V36.4M36.3 1.5V40.5M38.3 12.4V29.6M40.4 13.8V28.2M42.5 7.3V34.7M44.6 8.4V33.6M46.7 11.5V30.5M48.8 9.4V32.6M50.9 1.5V40.5M52.9 12.6V29.4M55 9.1V32.9M57.1 9.8V32.2M59.2 4.5V37.5M61.3 9.2V32.8M63.4 12.2V29.8" stroke="#a6fcbf" stroke-width="1.45" fill="none"/><path d="M0 21 H65.5" stroke="#a6fcbf" stroke-width="5"/></svg>
<div class="h hg" style="left:734.1px;top:216.2px;width:62.6px;height:28.3px;"><i class="ic"></i><span class="lb" style="transform:scaleX(0.76);letter-spacing:2.93px;">T..)</span></div>
<div class="bg" style="left:734.1px;top:241px;width:62.6px;height:45.6px;"></div>
<svg style="left:734.1px;top:245.5px" width="62.6" height="41" viewBox="0 0 62.6 41"><path d="M0.8 7.2V34.8M2.9 11.1V30.9M5 12.5V29.5M7.1 1.5V40.5M9.1 5.6V36.4M11.2 5.3V36.7M13.3 9.8V32.2M15.4 13.2V28.8M17.5 6.6V35.4M19.6 5.5V36.5M21.7 1.5V40.5M23.7 11V31M25.8 10.3V31.7M27.9 8.6V33.4M30 11.3V30.7M32.1 9.8V32.2M34.2 10V32M36.3 1.5V40.5M38.3 7.8V34.2M40.4 12.4V29.6M42.5 10.9V31.1M44.6 7.3V34.7M46.7 12.8V29.2M48.8 12.2V29.8M50.9 1.5V40.5M52.9 8.9V33.1M55 6.7V35.3M57.1 9.1V32.9M59.2 7.2V34.8M61.3 4.9V37.1" stroke="#a6fcbf" stroke-width="1.45" fill="none"/><path d="M0 21 H62.6" stroke="#a6fcbf" stroke-width="5"/></svg>
<div class="h hg" style="left:800.8px;top:216.2px;width:65.5px;height:28.3px;"><i class="ic"></i><span class="lb" style="transform:scaleX(0.76);letter-spacing:2.93px;">T..)</span></div>
<div class="bg" style="left:800.8px;top:241px;width:65.5px;height:45.6px;"></div>
<svg style="left:800.8px;top:245.5px" width="65.5" height="41" viewBox="0 0 65.5 41"><path d="M0.8 11.7V30.3M2.9 4.8V37.2M5 9V33M7.1 1.5V40.5M9.1 11.4V30.6M11.2 10.3V31.7M13.3 11.9V30.1M15.4 12.6V29.4M17.5 5.9V36.1M19.6 5.9V36.1M21.7 1.5V40.5M23.7 10V32M25.8 10.5V31.5M27.9 5.6V36.4M30 13.1V28.9M32.1 12.1V29.9M34.2 5.6V36.4M36.3 1.5V40.5M38.3 11.2V30.8M40.4 12V30M42.5 3.7V38.3M44.6 6.6V35.4M46.7 11.6V30.4M48.8 9.4V32.6M50.9 1.5V40.5M52.9 5.9V36.1M55 9V33M57.1 8.8V33.2M59.2 11.7V30.3M61.3 8.3V33.7M63.4 9.3V32.7" stroke="#a6fcbf" stroke-width="1.45" fill="none"/><path d="M0 21 H65.5" stroke="#a6fcbf" stroke-width="5"/></svg>
<div class="h hg" style="left:867.6px;top:216.2px;width:62px;height:28.3px;"><i class="ic"></i><span class="lb" style="transform:scaleX(0.76);letter-spacing:2.93px;">T..)</span></div>
<div class="bg" style="left:867.6px;top:241px;width:62px;height:45.6px;"></div>
<svg style="left:867.6px;top:245.5px" width="62" height="41" viewBox="0 0 62 41"><path d="M0.8 4.5V37.5M2.9 10.3V31.7M5 6.8V35.2M7.1 1.5V40.5M9.1 10.4V31.6M11.2 12.2V29.8M13.3 8.8V33.2M15.4 8.9V33.1M17.5 10.9V31.1M19.6 12.6V29.4M21.7 1.5V40.5M23.7 10.2V31.8M25.8 10.3V31.7M27.9 10.5V31.5M30 9.7V32.3M32.1 11.1V30.9M34.2 9.7V32.3M36.3 1.5V40.5M38.3 12.6V29.4M40.4 12.3V29.7M42.5 3.1V38.9M44.6 11.7V30.3M46.7 8.5V33.5M48.8 12.3V29.7M50.9 1.5V40.5M52.9 5.7V36.3M55 9.8V32.2M57.1 12.6V29.4M59.2 3.9V38.1M61.3 12.4V29.6" stroke="#a6fcbf" stroke-width="1.45" fill="none"/><path d="M0 21 H62" stroke="#a6fcbf" stroke-width="5"/></svg>
<div class="h hg" style="left:934.3px;top:216.2px;width:65.5px;height:28.3px;"><i class="ic"></i><span class="lb" style="transform:scaleX(0.76);letter-spacing:2.93px;">T..)</span></div>
<div class="bg" style="left:934.3px;top:241px;width:65.5px;height:45.6px;"></div>
<svg style="left:934.3px;top:245.5px" width="65.5" height="41" viewBox="0 0 65.5 41"><path d="M0.8 9V33M2.9 8.2V33.8M5 12.1V29.9M7.1 1.5V40.5M9.1 2.9V39.1M11.2 10.6V31.4M13.3 6.3V35.7M15.4 8.9V33.1M17.5 11.5V30.5M19.6 8.1V33.9M21.7 1.5V40.5M23.7 13.4V28.6M25.8 8.4V33.6M27.9 11.8V30.2M30 8.5V33.5M32.1 8.4V33.6M34.2 3.5V38.5M36.3 1.5V40.5M38.3 8.6V33.4M40.4 11.5V30.5M42.5 3.6V38.4M44.6 4.6V37.4M46.7 10.9V31.1M48.8 9.1V32.9M50.9 1.5V40.5M52.9 8.7V33.3M55 11.4V30.6M57.1 8.3V33.7M59.2 6.3V35.7M61.3 5.6V36.4M63.4 7.3V34.7" stroke="#a6fcbf" stroke-width="1.45" fill="none"/><path d="M0 21 H65.5" stroke="#a6fcbf" stroke-width="5"/></svg>
<div class="h hg" style="left:1001.1px;top:216.2px;width:65.5px;height:28.3px;"><i class="ic"></i><span class="lb" style="transform:scaleX(0.76);letter-spacing:2.93px;">T..)</span></div>
<div class="bg" style="left:1001.1px;top:241px;width:65.5px;height:45.6px;"></div>
<svg style="left:1001.1px;top:245.5px" width="65.5" height="41" viewBox="0 0 65.5 41"><path d="M0.8 3.1V38.9M2.9 11.8V30.2M5 8.7V33.3M7.1 1.5V40.5M9.1 7.5V34.5M11.2 8.8V33.2M13.3 8.4V33.6M15.4 8.7V33.3M17.5 6.2V35.8M19.6 10.5V31.5M21.7 1.5V40.5M23.7 12.3V29.7M25.8 4.3V37.7M27.9 9.4V32.6M30 9.3V32.7M32.1 9.1V32.9M34.2 7.6V34.4M36.3 1.5V40.5M38.3 8.7V33.3M40.4 8V34M42.5 4.7V37.3M44.6 10.5V31.5M46.7 10.3V31.7M48.8 8.1V33.9M50.9 1.5V40.5M52.9 6.5V35.5M55 10.5V31.5M57.1 11.7V30.3M59.2 4.1V37.9M61.3 11.1V30.9M63.4 12.9V29.1" stroke="#a6fcbf" stroke-width="1.45" fill="none"/><path d="M0 21 H65.5" stroke="#a6fcbf" stroke-width="5"/></svg>
<div class="h hg" style="left:1601.9px;top:216.2px;width:65.5px;height:28.3px;"><i class="ic"></i><span class="lb" style="transform:scaleX(0.76);letter-spacing:2.93px;">T..)</span></div>
<div class="bg" style="left:1601.9px;top:241px;width:65.5px;height:45.6px;"></div>
<svg style="left:1601.9px;top:245.5px" width="65.5" height="41" viewBox="0 0 65.5 41"><path d="M0.8 8.5V33.5M2.9 5.2V36.8M5 10.5V31.5M7.1 1.5V40.5M9.1 4.9V37.1M11.2 12V30M13.3 7V35M15.4 12.6V29.4M17.5 10.5V31.5M19.6 8V34M21.7 1.5V40.5M23.7 8.2V33.8M25.8 3.2V38.8M27.9 4.5V37.5M30 11.2V30.8M32.1 8.1V33.9M34.2 5.5V36.5M36.3 1.5V40.5M38.3 11.2V30.8M40.4 14.1V27.9M42.5 7.1V34.9M44.6 5.4V36.6M46.7 6.5V35.5M48.8 9.2V32.8M50.9 1.5V40.5M52.9 7.3V34.7M55 7.8V34.2M57.1 13V29M59.2 5.1V36.9M61.3 10.9V31.1M63.4 8V34" stroke="#a6fcbf" stroke-width="1.45" fill="none"/><path d="M0 21 H65.5" stroke="#a6fcbf" stroke-width="5"/></svg>
<div class="h hg" style="left:1668.7px;top:216.2px;width:62.3px;height:28.3px;"><i class="ic"></i><span class="lb" style="transform:scaleX(0.76);letter-spacing:2.93px;">T..)</span></div>
<div class="bg" style="left:1668.7px;top:241px;width:62.3px;height:45.6px;"></div>
<svg style="left:1668.7px;top:245.5px" width="62.3" height="41" viewBox="0 0 62.3 41"><path d="M0.8 7.2V34.8M2.9 7.9V34.1M5 11.2V30.8M7.1 1.5V40.5M9.1 9.6V32.4M11.2 6V36M13.3 8.6V33.4M15.4 12.3V29.7M17.5 5.6V36.4M19.6 7.1V34.9M21.7 1.5V40.5M23.7 14V28M25.8 11.8V30.2M27.9 11.5V30.5M30 10.6V31.4M32.1 11.5V30.5M34.2 6.4V35.6M36.3 1.5V40.5M38.3 7.7V34.3M40.4 10.6V31.4M42.5 10.5V31.5M44.6 4.8V37.2M46.7 12.5V29.5M48.8 10.4V31.6M50.9 1.5V40.5M52.9 7.2V34.8M55 7V35M57.1 12.1V29.9M59.2 9.4V32.6M61.3 4.5V37.5" stroke="#a6fcbf" stroke-width="1.45" fill="none"/><path d="M0 21 H62.3" stroke="#a6fcbf" stroke-width="5"/></svg>
<div class="h hg" style="left:1735.5px;top:216.2px;width:65.5px;height:28.3px;"><i class="ic"></i><span class="lb" style="transform:scaleX(0.76);letter-spacing:2.93px;">T..)</span></div>
<div class="bg" style="left:1735.5px;top:241px;width:65.5px;height:45.6px;"></div>
<svg style="left:1735.5px;top:245.5px" width="65.5" height="41" viewBox="0 0 65.5 41"><path d="M0.8 5.5V36.5M2.9 5.2V36.8M5 7.2V34.8M7.1 1.5V40.5M9.1 9.5V32.5M11.2 11.1V30.9M13.3 9.4V32.6M15.4 9.2V32.8M17.5 9.3V32.7M19.6 7.7V34.3M21.7 1.5V40.5M23.7 12.7V29.3M25.8 3.1V38.9M27.9 10V32M30 8.9V33.1M32.1 11.9V30.1M34.2 3.9V38.1M36.3 1.5V40.5M38.3 12.1V29.9M40.4 13.3V28.7M42.5 7.4V34.6M44.6 6.1V35.9M46.7 8.1V33.9M48.8 11.5V30.5M50.9 1.5V40.5M52.9 10.8V31.2M55 9.3V32.7M57.1 10.4V31.6M59.2 11.2V30.8M61.3 11.6V30.4M63.4 6.2V35.8" stroke="#a6fcbf" stroke-width="1.45" fill="none"/><path d="M0 21 H65.5" stroke="#a6fcbf" stroke-width="5"/></svg>
<div class="h hg" style="left:1802.2px;top:216.2px;width:49.6px;height:28.3px;"><i class="ic"></i><span class="lb mu" style="transform:scaleX(0.76);letter-spacing:3.15px;">..)</span></div>
<div class="bg" style="left:1802.2px;top:241px;width:49.6px;height:45.6px;"></div>
<svg style="left:1802.2px;top:245.5px" width="49.6" height="41" viewBox="0 0 49.6 41"><path d="M0.8 3.1V38.9M2.9 7.4V34.6M5 10.7V31.3M7.1 1.5V40.5M9.1 5.3V36.7M11.2 4.5V37.5M13.3 8.2V33.8M15.4 9.4V32.6M17.5 9.1V32.9M19.6 11.6V30.4M21.7 1.5V40.5M23.7 10.1V31.9M25.8 4.9V37.1M27.9 9V33M30 6.6V35.4M32.1 11.5V30.5M34.2 4.2V37.8M36.3 1.5V40.5M38.3 12.7V29.3M40.4 10.2V31.8M42.5 6.7V35.3M44.6 11.9V30.1M46.7 8.4V33.6M48.8 13.5V28.5" stroke="#a6fcbf" stroke-width="1.45" fill="none"/><path d="M0 21 H49.6" stroke="#a6fcbf" stroke-width="5"/></svg>
<div class="h hg" style="left:1869px;top:216.2px;width:65.5px;height:28.3px;"><i class="ic"></i><span class="lb" style="transform:scaleX(0.76);letter-spacing:2.93px;">T..)</span></div>
<div class="bg" style="left:1869px;top:241px;width:65.5px;height:45.6px;"></div>
<svg style="left:1869px;top:245.5px" width="65.5" height="41" viewBox="0 0 65.5 41"><path d="M0.8 8.7V33.3M2.9 11.7V30.3M5 8.1V33.9M7.1 1.5V40.5M9.1 3.7V38.3M11.2 12.5V29.5M13.3 11.4V30.6M15.4 7.9V34.1M17.5 7.5V34.5M19.6 4.9V37.1M21.7 1.5V40.5M23.7 8.9V33.1M25.8 4.4V37.6M27.9 8.5V33.5M30 10.1V31.9M32.1 8.9V33.1M34.2 5.5V36.5M36.3 1.5V40.5M38.3 12.3V29.7M40.4 12V30M42.5 11.4V30.6M44.6 4.6V37.4M46.7 13.3V28.7M48.8 13V29M50.9 1.5V40.5M52.9 8.3V33.7M55 10.6V31.4M57.1 11.3V30.7M59.2 6.2V35.8M61.3 6.6V35.4M63.4 9V33" stroke="#a6fcbf" stroke-width="1.45" fill="none"/><path d="M0 21 H65.5" stroke="#a6fcbf" stroke-width="5"/></svg>
<div class="h hg" style="left:1935.7px;top:216.2px;width:65.5px;height:28.3px;"><i class="ic"></i><span class="lb" style="transform:scaleX(0.76);letter-spacing:2.93px;">T..)</span></div>
<div class="bg" style="left:1935.7px;top:241px;width:65.5px;height:45.6px;"></div>
<svg style="left:1935.7px;top:245.5px" width="65.5" height="41" viewBox="0 0 65.5 41"><path d="M0.8 7.3V34.7M2.9 11.9V30.1M5 7.8V34.2M7.1 1.5V40.5M9.1 11.6V30.4M11.2 12.6V29.4M13.3 12.2V29.8M15.4 9.3V32.7M17.5 10.9V31.1M19.6 6.4V35.6M21.7 1.5V40.5M23.7 13.4V28.6M25.8 4.4V37.6M27.9 4.9V37.1M30 10.6V31.4M32.1 8.4V33.6M34.2 5V37M36.3 1.5V40.5M38.3 11.8V30.2M40.4 12.3V29.7M42.5 8V34M44.6 7.8V34.2M46.7 9.8V32.2M48.8 8.3V33.7M50.9 1.5V40.5M52.9 5.2V36.8M55 10.1V31.9M57.1 14V28M59.2 8V34M61.3 9.1V32.9M63.4 12.9V29.1" stroke="#a6fcbf" stroke-width="1.45" fill="none"/><path d="M0 21 H65.5" stroke="#a6fcbf" stroke-width="5"/></svg>
<div class="h hg" style="left:2002.5px;top:216.2px;width:65.5px;height:28.3px;"><i class="ic"></i><span class="lb" style="transform:scaleX(0.76);letter-spacing:2.93px;">T..)</span></div>
<div class="bg" style="left:2002.5px;top:241px;width:65.5px;height:45.6px;"></div>
<svg style="left:2002.5px;top:245.5px" width="65.5" height="41" viewBox="0 0 65.5 41"><path d="M0.8 3.1V38.9M2.9 6.6V35.4M5 10.9V31.1M7.1 1.5V40.5M9.1 5.3V36.7M11.2 9V33M13.3 13.1V28.9M15.4 9.2V32.8M17.5 6.7V35.3M19.6 5.2V36.8M21.7 1.5V40.5M23.7 9.5V32.5M25.8 5.2V36.8M27.9 5.4V36.6M30 6.8V35.2M32.1 13.3V28.7M34.2 7.4V34.6M36.3 1.5V40.5M38.3 8.6V33.4M40.4 13.3V28.7M42.5 5.9V36.1M44.6 10V32M46.7 12.5V29.5M48.8 10.7V31.3M50.9 1.5V40.5M52.9 10.9V31.1M55 8.7V33.3M57.1 13.4V28.6M59.2 2.6V39.4M61.3 4.9V37.1M63.4 11.5V30.5" stroke="#a6fcbf" stroke-width="1.45" fill="none"/><path d="M0 21 H65.5" stroke="#a6fcbf" stroke-width="5"/></svg>
<div class="h hg" style="left:2069.3px;top:216.2px;width:65.5px;height:28.3px;"><i class="ic"></i><span class="lb" style="transform:scaleX(0.76);letter-spacing:2.93px;">T..)</span></div>
<div class="bg" style="left:2069.3px;top:241px;width:65.5px;height:45.6px;"></div>
<svg style="left:2069.3px;top:245.5px" width="65.5" height="41" viewBox="0 0 65.5 41"><path d="M0.8 3.1V38.9M2.9 11.8V30.2M5 11.3V30.7M7.1 1.5V40.5M9.1 6.1V35.9M11.2 4.8V37.2M13.3 6.6V35.4M15.4 10.2V31.8M17.5 10.9V31.1M19.6 8.5V33.5M21.7 1.5V40.5M23.7 8.8V33.2M25.8 4V38M27.9 9.2V32.8M30 11.8V30.2M32.1 8V34M34.2 8.9V33.1M36.3 1.5V40.5M38.3 6.1V35.9M40.4 9.8V32.2M42.5 3.4V38.6M44.6 10V32M46.7 10.6V31.4M48.8 10.1V31.9M50.9 1.5V40.5M52.9 8.5V33.5M55 8.3V33.7M57.1 13.3V28.7M59.2 5.9V36.1M61.3 7.2V34.8M63.4 6.3V35.7" stroke="#a6fcbf" stroke-width="1.45" fill="none"/><path d="M0 21 H65.5" stroke="#a6fcbf" stroke-width="5"/></svg>
<div class="h hg" style="left:2136px;top:216.2px;width:66px;height:28.3px;"><i class="ic"></i><span class="lb" style="transform:scaleX(0.76);letter-spacing:2.93px;">T..)</span></div>
<div class="bg" style="left:2136px;top:241px;width:66px;height:45.6px;"></div>
<svg style="left:2136px;top:245.5px" width="66" height="41" viewBox="0 0 66 41"><path d="M0.8 7.2V34.8M2.9 5.3V36.7M5 9.9V32.1M7.1 1.5V40.5M9.1 9.5V32.5M11.2 6.4V35.6M13.3 8.9V33.1M15.4 12.1V29.9M17.5 3.3V38.7M19.6 8.3V33.7M21.7 1.5V40.5M23.7 11.2V30.8M25.8 4.2V37.8M27.9 11.4V30.6M30 7.4V34.6M32.1 9.3V32.7M34.2 2.7V39.3M36.3 1.5V40.5M38.3 10.8V31.2M40.4 12.3V29.7M42.5 4.2V37.8M44.6 9.9V32.1M46.7 11.8V30.2M48.8 9.6V32.4M50.9 1.5V40.5M52.9 11.3V30.7M55 6.7V35.3M57.1 12.3V29.7M59.2 8.3V33.7M61.3 4.4V37.6M63.4 8V34M65.5 1.5V40.5" stroke="#a6fcbf" stroke-width="1.45" fill="none"/><path d="M0 21 H66" stroke="#a6fcbf" stroke-width="5"/></svg>
<div class="h hg" style="left:934.3px;top:288.2px;width:65.5px;height:28.3px;"><i class="ic"></i><span class="lb" style="transform:scaleX(0.76);letter-spacing:2.89px;">ride</span></div>
<div class="bg" style="left:934.3px;top:313px;width:65.5px;height:45.6px;"></div>
<svg style="left:934.3px;top:317.5px" width="65.5" height="41" viewBox="0 0 65.5 41"><path d="M0 18.2L1.5 18.8L3 18.1L4.5 18.8L6 17.3L7.5 18.9L9 17.9L10.5 18.9L12 18.1L13.5 18.4L15 17.4L16.5 18.3L18 17.7L19.5 18.2L21 17.3L22.5 18.3L24 17.6L25.5 18.7L27 17.4L28.5 18.3L30 17.5L31.5 18.5L33 17.6L34.5 18.3L36 17.8L37.5 18.7L39 18.1L40.5 18.9L42 18.5L43.5 18.3L45 18.5L46.5 18.8L48 18.4L49.5 18.4L51 17.8L52.5 18.7L54 17.3L55.5 18.2L57 17.7L58.5 18.7L60 17.9L61.5 18.6L63 18L64.5 18.8L64.5 22.2L63 23L61.5 22.4L60 23.1L58.5 22.3L57 23.3L55.5 22.8L54 23.7L52.5 22.3L51 23.2L49.5 22.6L48 22.6L46.5 22.2L45 22.5L43.5 22.7L42 22.5L40.5 22.1L39 22.9L37.5 22.3L36 23.2L34.5 22.7L33 23.4L31.5 22.5L30 23.5L28.5 22.7L27 23.6L25.5 22.3L24 23.4L22.5 22.7L21 23.7L19.5 22.8L18 23.3L16.5 22.7L15 23.6L13.5 22.6L12 22.9L10.5 22.1L9 23.1L7.5 22.1L6 23.7L4.5 22.2L3 22.9L1.5 22.2L0 22.8Z" fill="#a6fcbf"/></svg>
<div class="h hg" style="left:1001.1px;top:288.2px;width:65.5px;height:28.3px;"><i class="ic"></i><span class="lb" style="transform:scaleX(0.76);letter-spacing:2.89px;">ride</span></div>
<div class="bg" style="left:1001.1px;top:313px;width:65.5px;height:45.6px;"></div>
<svg style="left:1001.1px;top:317.5px" width="65.5" height="41" viewBox="0 0 65.5 41"><path d="M0 17.4L1.5 18.5L3 18.4L4.5 18.6L6 17.7L7.5 18.5L9 18.2L10.5 18.7L12 17.5L13.5 18.5L15 17.6L16.5 18.6L18 17.8L19.5 18.3L21 18.3L22.5 18.2L24 18L25.5 18.6L27 18.1L28.5 18.8L30 18.5L31.5 18.7L33 18.3L34.5 18.7L36 17.5L37.5 18.3L39 18.3L40.5 18.8L42 17.5L43.5 18.8L45 17.5L46.5 18.7L48 18.3L49.5 18.9L51 18.1L52.5 18.9L54 17.8L55.5 18.9L57 18.5L58.5 18.8L60 18L61.5 18.4L63 17.7L64.5 18.5L64.5 22.5L63 23.3L61.5 22.6L60 23L58.5 22.2L57 22.5L55.5 22.1L54 23.2L52.5 22.1L51 22.9L49.5 22.1L48 22.7L46.5 22.3L45 23.5L43.5 22.2L42 23.5L40.5 22.2L39 22.7L37.5 22.7L36 23.5L34.5 22.3L33 22.7L31.5 22.3L30 22.5L28.5 22.2L27 22.9L25.5 22.4L24 23L22.5 22.8L21 22.7L19.5 22.7L18 23.2L16.5 22.4L15 23.4L13.5 22.5L12 23.5L10.5 22.3L9 22.8L7.5 22.5L6 23.3L4.5 22.4L3 22.6L1.5 22.5L0 23.6Z" fill="#a6fcbf"/></svg>
<div class="h hg" style="left:1735.5px;top:288.2px;width:65.5px;height:28.3px;"><i class="ic"></i><span class="lb" style="transform:scaleX(0.76);letter-spacing:2.89px;">ride</span></div>
<div class="bg" style="left:1735.5px;top:313px;width:65.5px;height:45.6px;"></div>
<svg style="left:1735.5px;top:317.5px" width="65.5" height="41" viewBox="0 0 65.5 41"><path d="M0 17.7L1.5 18.3L3 17.5L4.5 18.8L6 17.9L7.5 18.7L9 17.8L10.5 18.8L12 17.4L13.5 18.5L15 18.1L16.5 18.3L18 18.3L19.5 18.6L21 17.6L22.5 18.6L24 17.7L25.5 18.5L27 17.8L28.5 18.9L30 17.3L31.5 18.3L33 18.2L34.5 18.2L36 18L37.5 18.5L39 18.1L40.5 18.8L42 17.9L43.5 18.7L45 17.7L46.5 18.6L48 17.6L49.5 18.4L51 17.3L52.5 18.2L54 17.7L55.5 18.6L57 17.5L58.5 18.7L60 18.6L61.5 18.7L63 17.4L64.5 18.9L64.5 22.1L63 23.6L61.5 22.3L60 22.4L58.5 22.3L57 23.5L55.5 22.4L54 23.3L52.5 22.8L51 23.7L49.5 22.6L48 23.4L46.5 22.4L45 23.3L43.5 22.3L42 23.1L40.5 22.2L39 22.9L37.5 22.5L36 23L34.5 22.8L33 22.8L31.5 22.7L30 23.7L28.5 22.1L27 23.2L25.5 22.5L24 23.3L22.5 22.4L21 23.4L19.5 22.4L18 22.7L16.5 22.7L15 22.9L13.5 22.5L12 23.6L10.5 22.2L9 23.2L7.5 22.3L6 23.1L4.5 22.2L3 23.5L1.5 22.7L0 23.3Z" fill="#a6fcbf"/></svg>
<div class="h hg" style="left:1802.2px;top:288.2px;width:49.6px;height:28.3px;"><i class="ic"></i><span class="lb mu" style="transform:scaleX(0.76);letter-spacing:1.18px;">r..</span></div>
<div class="bg" style="left:1802.2px;top:313px;width:49.6px;height:45.6px;"></div>
<svg style="left:1802.2px;top:317.5px" width="49.6" height="41" viewBox="0 0 49.6 41"><path d="M0 17.4L1.5 18.7L3 17.8L4.5 18.2L6 17.7L7.5 18.7L9 18.4L10.5 18.5L12 17.6L13.5 18.2L15 18L16.5 18.8L18 18.5L19.5 18.5L21 18.5L22.5 18.9L24 17.6L25.5 18.9L27 17.9L28.5 18.7L30 17.6L31.5 18.6L33 17.4L34.5 18.4L36 18L37.5 18.7L39 17.7L40.5 18.3L42 18.4L43.5 18.8L45 17.7L46.5 18.9L48 17.5L49.5 18.3L49.5 22.7L48 23.5L46.5 22.1L45 23.3L43.5 22.2L42 22.6L40.5 22.7L39 23.3L37.5 22.3L36 23L34.5 22.6L33 23.6L31.5 22.4L30 23.4L28.5 22.3L27 23.1L25.5 22.1L24 23.4L22.5 22.1L21 22.5L19.5 22.5L18 22.5L16.5 22.2L15 23L13.5 22.8L12 23.4L10.5 22.5L9 22.6L7.5 22.3L6 23.3L4.5 22.8L3 23.2L1.5 22.3L0 23.6Z" fill="#a6fcbf"/></svg>
<div class="h hg" style="left:934.3px;top:360.2px;width:65.5px;height:28.3px;"><i class="ic"></i><span class="lb" style="transform:scaleX(0.76);letter-spacing:2.93px;">T..)</span></div>
<div class="bg" style="left:934.3px;top:385px;width:65.5px;height:45.6px;"></div>
<svg style="left:934.3px;top:389.5px" width="65.5" height="41" viewBox="0 0 65.5 41"><path d="M0 10.1L1.6 14.2L3.2 9.4L4.8 13.8L6.4 3.4L8 14.8L9.6 7.7L11.2 14.4L12.8 9.4L14.4 11.9L16 4.2L17.6 11.4L19.2 6.6L20.8 10.8L22.4 3.4L24 11.3L25.6 5.2L27.2 13.7L28.8 4L30.4 11L32 4.8L33.6 12.2L35.2 5.6L36.8 11L38.4 6.8L40 13.7L41.6 9.1L43.2 14.8L44.8 12.3L46.4 11L48 12.9L49.6 13.8L51.2 12.2L52.8 11.6L54.4 7.2L56 13.4L57.6 3.4L59.2 10.7L60.8 6.4L62.4 13.7L64 7.8L64 35.7L62.4 29.8L60.8 37.1L59.2 32.8L57.6 40.1L56 30.1L54.4 36.3L52.8 31.9L51.2 31.3L49.6 29.7L48 30.6L46.4 32.5L44.8 31.2L43.2 28.7L41.6 34.4L40 29.8L38.4 36.7L36.8 32.5L35.2 37.9L33.6 31.3L32 38.7L30.4 32.5L28.8 39.5L27.2 29.8L25.6 38.3L24 32.2L22.4 40.1L20.8 32.7L19.2 36.9L17.6 32.1L16 39.3L14.4 31.6L12.8 34.1L11.2 29.1L9.6 35.8L8 28.7L6.4 40.1L4.8 29.7L3.2 34.1L1.6 29.3L0 33.4Z" fill="#a6fcbf"/></svg>
<div class="" style="left:934.3px;top:403.5px;width:65.5px;height:13.5px;background:#a6fcbf"></div>
<div class="h hg" style="left:1001.1px;top:360.2px;width:65.5px;height:28.3px;"><i class="ic"></i><span class="lb" style="transform:scaleX(0.76);letter-spacing:2.93px;">T..)</span></div>
<div class="bg" style="left:1001.1px;top:385px;width:65.5px;height:45.6px;"></div>
<svg style="left:1001.1px;top:389.5px" width="65.5" height="41" viewBox="0 0 65.5 41"><path d="M0 3.5L1.6 12L3.2 12.3L4.8 12.8L6.4 6.4L8 12.1L9.6 10.6L11.2 13.6L12.8 4.9L14.4 12.4L16 5.3L17.6 12.7L19.2 6.8L20.8 11.4L22.4 10.7L24 10.7L25.6 8.7L27.2 13.1L28.8 9.4L30.4 14.1L32 12.5L33.6 13.2L35.2 10.8L36.8 13.2L38.4 4.9L40 11L41.6 11.2L43.2 13.8L44.8 4.8L46.4 13.9L48 4.2L49.6 13.2L51.2 10.9L52.8 14.7L54.4 9.8L56 14.7L57.6 7.1L59.2 14.7L60.8 12.4L62.4 13.9L64 8.8L64 34.7L62.4 29.6L60.8 31.1L59.2 28.8L57.6 36.4L56 28.8L54.4 33.7L52.8 28.8L51.2 32.6L49.6 30.3L48 39.3L46.4 29.6L44.8 38.7L43.2 29.7L41.6 32.3L40 32.5L38.4 38.6L36.8 30.3L35.2 32.7L33.6 30.3L32 31L30.4 29.4L28.8 34.1L27.2 30.4L25.6 34.8L24 32.8L22.4 32.8L20.8 32.1L19.2 36.7L17.6 30.8L16 38.2L14.4 31.1L12.8 38.6L11.2 29.9L9.6 32.9L8 31.4L6.4 37.1L4.8 30.7L3.2 31.2L1.6 31.5L0 40Z" fill="#a6fcbf"/></svg>
<div class="" style="left:1001.1px;top:403.5px;width:65.5px;height:13.5px;background:#a6fcbf"></div>
<div class="h hg" style="left:1735.5px;top:360.2px;width:65.5px;height:28.3px;"><i class="ic"></i><span class="lb" style="transform:scaleX(0.76);letter-spacing:2.93px;">T..)</span></div>
<div class="bg" style="left:1735.5px;top:385px;width:65.5px;height:45.6px;"></div>
<svg style="left:1735.5px;top:389.5px" width="65.5" height="41" viewBox="0 0 65.5 41"><path d="M0 6.2L1.6 11.1L3.2 4.9L4.8 14.2L6.4 7.7L8 13.7L9.6 7.1L11.2 13.8L12.8 3.5L14.4 12.1L16 9.6L17.6 11.1L19.2 11.4L20.8 12.7L22.4 5.2L24 13L25.6 6.2L27.2 12.4L28.8 7.4L30.4 14.4L32 3.3L33.6 11L35.2 10.4L36.8 10.6L38.4 8.6L40 12.4L41.6 9.7L43.2 14.3L44.8 8L46.4 13.6L48 6.4L49.6 12.9L51.2 5.3L52.8 11.6L54.4 3.3L56 10.7L57.6 6.6L59.2 13L60.8 4.9L62.4 13.4L64 13.3L64 30.2L62.4 30.1L60.8 38.6L59.2 30.5L57.6 36.9L56 32.8L54.4 40.2L52.8 31.9L51.2 38.2L49.6 30.6L48 37.1L46.4 29.9L44.8 35.5L43.2 29.2L41.6 33.8L40 31.1L38.4 34.9L36.8 32.9L35.2 33.1L33.6 32.5L32 40.2L30.4 29.1L28.8 36.1L27.2 31.1L25.6 37.3L24 30.5L22.4 38.3L20.8 30.8L19.2 32.1L17.6 32.4L16 33.9L14.4 31.4L12.8 40L11.2 29.7L9.6 36.4L8 29.8L6.4 35.8L4.8 29.3L3.2 38.6L1.6 32.4L0 37.3Z" fill="#a6fcbf"/></svg>
<div class="" style="left:1735.5px;top:403.5px;width:65.5px;height:13.5px;background:#a6fcbf"></div>
<div class="h hg" style="left:1802.2px;top:360.2px;width:49.6px;height:28.3px;"><i class="ic"></i><span class="lb mu" style="transform:scaleX(0.76);letter-spacing:3.15px;">..)</span></div>
<div class="bg" style="left:1802.2px;top:385px;width:49.6px;height:45.6px;"></div>
<svg style="left:1802.2px;top:389.5px" width="49.6" height="41" viewBox="0 0 49.6 41"><path d="M0 3.6L1.6 13.3L3.2 7.3L4.8 10.4L6.4 6.1L8 13.6L9.6 12L11.2 12L12.8 5.5L14.4 10.7L16 9L17.6 13.8L19.2 12.3L20.8 12.4L22.4 12.4L24 14.4L25.6 5L27.2 14.7L28.8 7.6L30.4 13.5L32 5.4L33.6 12.6L35.2 3.4L36.8 11.8L38.4 8.4L40 13.4L41.6 6.2L43.2 10.8L44.8 11.6L46.4 13.8L48 6.3L48 37.2L46.4 29.7L44.8 31.9L43.2 32.7L41.6 37.3L40 30.1L38.4 35.1L36.8 31.7L35.2 40.1L33.6 30.9L32 38.1L30.4 30L28.8 35.9L27.2 28.8L25.6 38.5L24 29.1L22.4 31.1L20.8 31.1L19.2 31.2L17.6 29.7L16 34.5L14.4 32.8L12.8 38L11.2 31.5L9.6 31.5L8 29.9L6.4 37.4L4.8 33.1L3.2 36.2L1.6 30.2L0 39.9Z" fill="#a6fcbf"/></svg>
<div class="" style="left:1802.2px;top:403.5px;width:49.6px;height:13.5px;background:#a6fcbf"></div>
<div class="h hg" style="left:395px;top:432.2px;width:55.5px;height:28.3px;"><i class="ic"></i><span class="lb" style="transform:scaleX(0.76);letter-spacing:1.48px;">T..</span></div>
<div class="bg" style="left:395px;top:457px;width:55.5px;height:45.6px;"></div>
<svg style="left:395px;top:461.5px" width="55.5" height="41" viewBox="0 0 55.5 41"><path d="M2 18.3L4 8.4L6 11.9L8 14.5L10 16.3L12 17.6L14 18.5L16 19.2L18 19.7L20 20L22 20.3L24 20.5L26 20.6L28 20.7L30 20.7L32 20.8L32 21L30 21.1L28 21.1L26 21.2L24 21.3L22 21.5L20 21.8L18 22.1L16 22.6L14 23.3L12 24.2L10 25.5L8 27.3L6 29.9L4 33.4L2 23.5Z" fill="#a6fcbf"/><path d="M0 20.9 H55.5" stroke="#a6fcbf" stroke-width="1"/><path d="M2 2 C23.3 2,27.8 39.5,54.5 39.5" fill="none" stroke="#a6fcbf" stroke-width="2.4"/></svg>
<div class="h hg" style="left:529.4px;top:432.2px;width:54px;height:28.3px;"><i class="ic"></i><span class="lb" style="transform:scaleX(0.76);letter-spacing:1.48px;">T..</span></div>
<div class="bg" style="left:529.4px;top:457px;width:54px;height:45.6px;"></div>
<svg style="left:529.4px;top:461.5px" width="54" height="41" viewBox="0 0 54 41"><path d="M2 18.3L4 8.4L6 11.9L8 14.5L10 16.3L12 17.6L14 18.5L16 19.2L18 19.7L20 20L22 20.3L24 20.5L26 20.6L28 20.7L30 20.7L32 20.8L32 21L30 21.1L28 21.1L26 21.2L24 21.3L22 21.5L20 21.8L18 22.1L16 22.6L14 23.3L12 24.2L10 25.5L8 27.3L6 29.9L4 33.4L2 23.5Z" fill="#a6fcbf"/><path d="M0 20.9 H54" stroke="#a6fcbf" stroke-width="1"/><path d="M2 2 C22.7 2,27 39.5,53 39.5" fill="none" stroke="#a6fcbf" stroke-width="2.4"/></svg>
<div class="h hg" style="left:662.5px;top:432.2px;width:55.3px;height:28.3px;"><i class="ic"></i><span class="lb" style="transform:scaleX(0.76);letter-spacing:1.48px;">T..</span></div>
<div class="bg" style="left:662.5px;top:457px;width:55.3px;height:45.6px;"></div>
<svg style="left:662.5px;top:461.5px" width="55.3" height="41" viewBox="0 0 55.3 41"><path d="M2 18.3L4 8.4L6 11.9L8 14.5L10 16.3L12 17.6L14 18.5L16 19.2L18 19.7L20 20L22 20.3L24 20.5L26 20.6L28 20.7L30 20.7L32 20.8L32 21L30 21.1L28 21.1L26 21.2L24 21.3L22 21.5L20 21.8L18 22.1L16 22.6L14 23.3L12 24.2L10 25.5L8 27.3L6 29.9L4 33.4L2 23.5Z" fill="#a6fcbf"/><path d="M0 20.9 H55.3" stroke="#a6fcbf" stroke-width="1"/><path d="M2 2 C23.2 2,27.6 39.5,54.3 39.5" fill="none" stroke="#a6fcbf" stroke-width="2.4"/></svg>
<div class="h hg" style="left:796.7px;top:432.2px;width:54px;height:28.3px;"><i class="ic"></i><span class="lb" style="transform:scaleX(0.76);letter-spacing:1.48px;">T..</span></div>
<div class="bg" style="left:796.7px;top:457px;width:54px;height:45.6px;"></div>
<svg style="left:796.7px;top:461.5px" width="54" height="41" viewBox="0 0 54 41"><path d="M2 18.3L4 8.4L6 11.9L8 14.5L10 16.3L12 17.6L14 18.5L16 19.2L18 19.7L20 20L22 20.3L24 20.5L26 20.6L28 20.7L30 20.7L32 20.8L32 21L30 21.1L28 21.1L26 21.2L24 21.3L22 21.5L20 21.8L18 22.1L16 22.6L14 23.3L12 24.2L10 25.5L8 27.3L6 29.9L4 33.4L2 23.5Z" fill="#a6fcbf"/><path d="M0 20.9 H54" stroke="#a6fcbf" stroke-width="1"/><path d="M2 2 C22.7 2,27 39.5,53 39.5" fill="none" stroke="#a6fcbf" stroke-width="2.4"/></svg>
<div class="h hg" style="left:929.6px;top:432.2px;width:54.8px;height:28.3px;"><i class="ic"></i><span class="lb" style="transform:scaleX(0.76);letter-spacing:1.48px;">T..</span></div>
<div class="bg" style="left:929.6px;top:457px;width:54.8px;height:45.6px;"></div>
<svg style="left:929.6px;top:461.5px" width="54.8" height="41" viewBox="0 0 54.8 41"><path d="M2 18.3L4 8.4L6 11.9L8 14.5L10 16.3L12 17.6L14 18.5L16 19.2L18 19.7L20 20L22 20.3L24 20.5L26 20.6L28 20.7L30 20.7L32 20.8L32 21L30 21.1L28 21.1L26 21.2L24 21.3L22 21.5L20 21.8L18 22.1L16 22.6L14 23.3L12 24.2L10 25.5L8 27.3L6 29.9L4 33.4L2 23.5Z" fill="#a6fcbf"/><path d="M0 20.9 H54.8" stroke="#a6fcbf" stroke-width="1"/><path d="M2 2 C23 2,27.4 39.5,53.8 39.5" fill="none" stroke="#a6fcbf" stroke-width="2.4"/></svg>
<div class="h hg" style="left:1063.3px;top:432.2px;width:54px;height:28.3px;"><i class="ic"></i><span class="lb" style="transform:scaleX(0.76);letter-spacing:1.48px;">T..</span></div>
<div class="bg" style="left:1063.3px;top:457px;width:54px;height:45.6px;"></div>
<svg style="left:1063.3px;top:461.5px" width="54" height="41" viewBox="0 0 54 41"><path d="M2 18.3L4 8.4L6 11.9L8 14.5L10 16.3L12 17.6L14 18.5L16 19.2L18 19.7L20 20L22 20.3L24 20.5L26 20.6L28 20.7L30 20.7L32 20.8L32 21L30 21.1L28 21.1L26 21.2L24 21.3L22 21.5L20 21.8L18 22.1L16 22.6L14 23.3L12 24.2L10 25.5L8 27.3L6 29.9L4 33.4L2 23.5Z" fill="#a6fcbf"/><path d="M0 20.9 H54" stroke="#a6fcbf" stroke-width="1"/><path d="M2 2 C22.7 2,27 39.5,53 39.5" fill="none" stroke="#a6fcbf" stroke-width="2.4"/></svg>
<div class="h hg" style="left:1196px;top:432.2px;width:55.6px;height:28.3px;"><i class="ic"></i><span class="lb" style="transform:scaleX(0.76);letter-spacing:1.48px;">T..</span></div>
<div class="bg" style="left:1196px;top:457px;width:55.6px;height:45.6px;"></div>
<svg style="left:1196px;top:461.5px" width="55.6" height="41" viewBox="0 0 55.6 41"><path d="M2 18.3L4 8.4L6 11.9L8 14.5L10 16.3L12 17.6L14 18.5L16 19.2L18 19.7L20 20L22 20.3L24 20.5L26 20.6L28 20.7L30 20.7L32 20.8L32 21L30 21.1L28 21.1L26 21.2L24 21.3L22 21.5L20 21.8L18 22.1L16 22.6L14 23.3L12 24.2L10 25.5L8 27.3L6 29.9L4 33.4L2 23.5Z" fill="#a6fcbf"/><path d="M0 20.9 H55.6" stroke="#a6fcbf" stroke-width="1"/><path d="M2 2 C23.4 2,27.8 39.5,54.6 39.5" fill="none" stroke="#a6fcbf" stroke-width="2.4"/></svg>
<div class="h hg" style="left:1397.2px;top:432.2px;width:54.6px;height:28.3px;"><i class="ic"></i><span class="lb" style="transform:scaleX(0.76);letter-spacing:1.48px;">T..</span></div>
<div class="bg" style="left:1397.2px;top:457px;width:54.6px;height:45.6px;"></div>
<svg style="left:1397.2px;top:461.5px" width="54.6" height="41" viewBox="0 0 54.6 41"><path d="M2 18.3L4 8.4L6 11.9L8 14.5L10 16.3L12 17.6L14 18.5L16 19.2L18 19.7L20 20L22 20.3L24 20.5L26 20.6L28 20.7L30 20.7L32 20.8L32 21L30 21.1L28 21.1L26 21.2L24 21.3L22 21.5L20 21.8L18 22.1L16 22.6L14 23.3L12 24.2L10 25.5L8 27.3L6 29.9L4 33.4L2 23.5Z" fill="#a6fcbf"/><path d="M0 20.9 H54.6" stroke="#a6fcbf" stroke-width="1"/><path d="M2 2 C22.9 2,27.3 39.5,53.6 39.5" fill="none" stroke="#a6fcbf" stroke-width="2.4"/></svg>
<div class="h hg" style="left:1597.3px;top:432.2px;width:54.2px;height:28.3px;"><i class="ic"></i><span class="lb" style="transform:scaleX(0.76);letter-spacing:1.48px;">T..</span></div>
<div class="bg" style="left:1597.3px;top:457px;width:54.2px;height:45.6px;"></div>
<svg style="left:1597.3px;top:461.5px" width="54.2" height="41" viewBox="0 0 54.2 41"><path d="M2 18.3L4 8.4L6 11.9L8 14.5L10 16.3L12 17.6L14 18.5L16 19.2L18 19.7L20 20L22 20.3L24 20.5L26 20.6L28 20.7L30 20.7L32 20.8L32 21L30 21.1L28 21.1L26 21.2L24 21.3L22 21.5L20 21.8L18 22.1L16 22.6L14 23.3L12 24.2L10 25.5L8 27.3L6 29.9L4 33.4L2 23.5Z" fill="#a6fcbf"/><path d="M0 20.9 H54.2" stroke="#a6fcbf" stroke-width="1"/><path d="M2 2 C22.8 2,27.1 39.5,53.2 39.5" fill="none" stroke="#a6fcbf" stroke-width="2.4"/></svg>
<div class="h hg" style="left:1730.2px;top:432.2px;width:54.5px;height:28.3px;"><i class="ic"></i><span class="lb" style="transform:scaleX(0.76);letter-spacing:1.48px;">T..</span></div>
<div class="bg" style="left:1730.2px;top:457px;width:54.5px;height:45.6px;"></div>
<svg style="left:1730.2px;top:461.5px" width="54.5" height="41" viewBox="0 0 54.5 41"><path d="M2 18.3L4 8.4L6 11.9L8 14.5L10 16.3L12 17.6L14 18.5L16 19.2L18 19.7L20 20L22 20.3L24 20.5L26 20.6L28 20.7L30 20.7L32 20.8L32 21L30 21.1L28 21.1L26 21.2L24 21.3L22 21.5L20 21.8L18 22.1L16 22.6L14 23.3L12 24.2L10 25.5L8 27.3L6 29.9L4 33.4L2 23.5Z" fill="#a6fcbf"/><path d="M0 20.9 H54.5" stroke="#a6fcbf" stroke-width="1"/><path d="M2 2 C22.9 2,27.2 39.5,53.5 39.5" fill="none" stroke="#a6fcbf" stroke-width="2.4"/></svg>
<div class="h hg" style="left:1864.2px;top:432.2px;width:54.5px;height:28.3px;"><i class="ic"></i><span class="lb" style="transform:scaleX(0.76);letter-spacing:1.48px;">T..</span></div>
<div class="bg" style="left:1864.2px;top:457px;width:54.5px;height:45.6px;"></div>
<svg style="left:1864.2px;top:461.5px" width="54.5" height="41" viewBox="0 0 54.5 41"><path d="M2 18.3L4 8.4L6 11.9L8 14.5L10 16.3L12 17.6L14 18.5L16 19.2L18 19.7L20 20L22 20.3L24 20.5L26 20.6L28 20.7L30 20.7L32 20.8L32 21L30 21.1L28 21.1L26 21.2L24 21.3L22 21.5L20 21.8L18 22.1L16 22.6L14 23.3L12 24.2L10 25.5L8 27.3L6 29.9L4 33.4L2 23.5Z" fill="#a6fcbf"/><path d="M0 20.9 H54.5" stroke="#a6fcbf" stroke-width="1"/><path d="M2 2 C22.9 2,27.2 39.5,53.5 39.5" fill="none" stroke="#a6fcbf" stroke-width="2.4"/></svg>
<div class="h hg" style="left:2197px;top:432.2px;width:39px;height:28.3px;"><i class="ic"></i><span class="lb" style="transform:scaleX(0.76);letter-spacing:1.48px;">T..</span></div>
<div class="bg" style="left:2197px;top:457px;width:39px;height:45.6px;"></div>
<svg style="left:2197px;top:461.5px" width="39" height="41" viewBox="0 0 39 41"><path d="M2 18.3L4 8.4L6 11.9L8 14.5L10 16.3L12 17.6L14 18.5L16 19.2L18 19.7L20 20L22 20.3L24 20.5L26 20.6L28 20.7L30 20.7L32 20.8L32 21L30 21.1L28 21.1L26 21.2L24 21.3L22 21.5L20 21.8L18 22.1L16 22.6L14 23.3L12 24.2L10 25.5L8 27.3L6 29.9L4 33.4L2 23.5Z" fill="#a6fcbf"/><path d="M0 20.9 H39" stroke="#a6fcbf" stroke-width="1"/><path d="M2 2 C16.4 2,19.5 39.5,38 39.5" fill="none" stroke="#a6fcbf" stroke-width="2.4"/></svg>
<div class="h hg" style="left:534.4px;top:504.5px;width:82px;height:30px;"><i class="ic" style="top:8.5px;opacity:.7"></i><span class="lb" style="transform:scaleX(0.76);letter-spacing:0.43px;top:3px;left:25.5px">TP..08</span></div>
<div class="h hg" style="left:1068.4px;top:504.5px;width:82.2px;height:30px;"><i class="ic" style="top:8.5px;opacity:.7"></i><span class="lb" style="transform:scaleX(0.76);letter-spacing:0.43px;top:3px;left:25.5px">TP..08</span></div>
<div class="h hg" style="left:1201px;top:504.5px;width:83px;height:30px;"><i class="ic" style="top:8.5px;opacity:.7"></i><span class="lb" style="transform:scaleX(0.76);letter-spacing:0.43px;top:3px;left:25.5px">TP..08</span></div>
<div class="h hg" style="left:1401.4px;top:504.5px;width:83.1px;height:30px;"><i class="ic" style="top:8.5px;opacity:.7"></i><span class="lb" style="transform:scaleX(0.76);letter-spacing:0.43px;top:3px;left:25.5px">TP..08</span></div>
<div class="h hb" style="left:-0.3px;top:568.2px;width:32.1px;height:28.3px;"><i class="ic"></i></div>
<div class="h hb" style="left:33.1px;top:568.2px;width:32.1px;height:28.3px;"><i class="ic"></i></div>
<div class="h hb" style="left:66.5px;top:568.2px;width:32.1px;height:28.3px;"><i class="ic"></i></div>
<div class="h hb" style="left:99.8px;top:568.2px;width:32.1px;height:28.3px;"><i class="ic"></i></div>
<div class="h hb" style="left:133.2px;top:568.2px;width:32.1px;height:28.3px;"><i class="ic"></i></div>
<div class="h hb" style="left:166.6px;top:568.2px;width:32.1px;height:28.3px;"><i class="ic"></i></div>
<div class="h hb" style="left:200px;top:568.2px;width:32.1px;height:28.3px;"><i class="ic"></i></div>
<div class="h hb" style="left:233.4px;top:568.2px;width:32.1px;height:28.3px;"><i class="ic"></i></div>
<div class="h hb" style="left:266.7px;top:568.2px;width:32.1px;height:28.3px;"><i class="ic"></i></div>
<div class="h hb" style="left:300.1px;top:568.2px;width:32.1px;height:28.3px;"><i class="ic"></i></div>
<div class="h hb" style="left:333.5px;top:568.2px;width:32.1px;height:28.3px;"><i class="ic"></i></div>
<div class="h hb" style="left:366.9px;top:568.2px;width:29.1px;height:28.3px;"><i class="ic"></i></div>
<div class="bb" style="left:-0.3px;top:593px;width:396.3px;height:45.6px;"></div>
<div class="" style="left:-0.3px;top:603px;width:396.3px;height:34.5px;background:linear-gradient(#d6effc,#d6effc) 0 46%/100% 1.3px no-repeat,repeating-linear-gradient(90deg,#d6effc 0,#d6effc 1.7px,#9db3dd 2px,#d6effc 2.4px,#d6effc 3.9px,#9db3dd 4.2px,#d6effc 4.6px,#d6effc 6.2px,#55649f 6.7px,#48558f 7.9px,#d6effc 8.345px);"></div>
<div class="" style="left:-0.3px;top:603px;width:396.3px;height:4px;background:linear-gradient(rgba(69,80,138,.8),rgba(69,80,138,0))"></div>
<div class="" style="left:-0.3px;top:633.5px;width:396.3px;height:4px;background:linear-gradient(rgba(69,80,138,0),rgba(69,80,138,.7))"></div>
<div class="h hb" style="left:400.3px;top:568.2px;width:32.1px;height:28.3px;"><i class="ic"></i></div>
<div class="h hb" style="left:433.6px;top:568.2px;width:32.1px;height:28.3px;"><i class="ic"></i></div>
<div class="h hb" style="left:467px;top:568.2px;width:32.1px;height:28.3px;"><i class="ic"></i></div>
<div class="h hb" style="left:500.4px;top:568.2px;width:32.1px;height:28.3px;"><i class="ic"></i></div>
<div class="h hb" style="left:533.8px;top:568.2px;width:32.1px;height:28.3px;"><i class="ic"></i></div>
<div class="h hb" style="left:567.2px;top:568.2px;width:32.1px;height:28.3px;"><i class="ic"></i></div>
<div class="h hb" style="left:600.5px;top:568.2px;width:32.1px;height:28.3px;"><i class="ic"></i></div>
<div class="h hb" style="left:633.9px;top:568.2px;width:24.6px;height:28.3px;"><i class="ic"></i></div>
<div class="bb" style="left:400.3px;top:593px;width:258.2px;height:45.6px;"></div>
<div class="" style="left:400.3px;top:603px;width:258.2px;height:34.5px;background:linear-gradient(#d6effc,#d6effc) 0 46%/100% 1.3px no-repeat,repeating-linear-gradient(90deg,#d6effc 0,#d6effc 1.7px,#9db3dd 2px,#d6effc 2.4px,#d6effc 3.9px,#9db3dd 4.2px,#d6effc 4.6px,#d6effc 6.2px,#55649f 6.7px,#48558f 7.9px,#d6effc 8.345px);"></div>
<div class="" style="left:400.3px;top:603px;width:258.2px;height:4px;background:linear-gradient(rgba(69,80,138,.8),rgba(69,80,138,0))"></div>
<div class="" style="left:400.3px;top:633.5px;width:258.2px;height:4px;background:linear-gradient(rgba(69,80,138,0),rgba(69,80,138,.7))"></div>
<div class="h hb" style="left:667.3px;top:568.2px;width:32.1px;height:28.3px;"><i class="ic"></i></div>
<div class="h hb" style="left:700.7px;top:568.2px;width:32.1px;height:28.3px;"><i class="ic"></i></div>
<div class="h hb" style="left:734.1px;top:568.2px;width:32.1px;height:28.3px;"><i class="ic"></i></div>
<div class="h hb" style="left:767.4px;top:568.2px;width:29.3px;height:28.3px;"><i class="ic"></i></div>
<div class="bb" style="left:667.3px;top:593px;width:129.4px;height:45.6px;"></div>
<div class="" style="left:667.3px;top:603px;width:129.4px;height:34.5px;background:linear-gradient(#d6effc,#d6effc) 0 46%/100% 1.3px no-repeat,repeating-linear-gradient(90deg,#d6effc 0,#d6effc 1.7px,#9db3dd 2px,#d6effc 2.4px,#d6effc 3.9px,#9db3dd 4.2px,#d6effc 4.6px,#d6effc 6.2px,#55649f 6.7px,#48558f 7.9px,#d6effc 8.345px);"></div>
<div class="" style="left:667.3px;top:603px;width:129.4px;height:4px;background:linear-gradient(rgba(69,80,138,.8),rgba(69,80,138,0))"></div>
<div class="" style="left:667.3px;top:633.5px;width:129.4px;height:4px;background:linear-gradient(rgba(69,80,138,0),rgba(69,80,138,.7))"></div>
<div class="h hb" style="left:800.8px;top:568.2px;width:32.1px;height:28.3px;"><i class="ic"></i></div>
<div class="h hb" style="left:834.2px;top:568.2px;width:32.1px;height:28.3px;"><i class="ic"></i></div>
<div class="h hb" style="left:867.6px;top:568.2px;width:32.1px;height:28.3px;"><i class="ic"></i></div>
<div class="h hb" style="left:901px;top:568.2px;width:28.6px;height:28.3px;"><i class="ic"></i></div>
<div class="bb" style="left:800.8px;top:593px;width:128.8px;height:45.6px;"></div>
<div class="" style="left:800.8px;top:603px;width:128.8px;height:34.5px;background:linear-gradient(#d6effc,#d6effc) 0 46%/100% 1.3px no-repeat,repeating-linear-gradient(90deg,#d6effc 0,#d6effc 1.7px,#9db3dd 2px,#d6effc 2.4px,#d6effc 3.9px,#9db3dd 4.2px,#d6effc 4.6px,#d6effc 6.2px,#55649f 6.7px,#48558f 7.9px,#d6effc 8.345px);"></div>
<div class="" style="left:800.8px;top:603px;width:128.8px;height:4px;background:linear-gradient(rgba(69,80,138,.8),rgba(69,80,138,0))"></div>
<div class="" style="left:800.8px;top:633.5px;width:128.8px;height:4px;background:linear-gradient(rgba(69,80,138,0),rgba(69,80,138,.7))"></div>
<div class="h hb" style="left:934.3px;top:568.2px;width:32.1px;height:28.3px;"><i class="ic"></i></div>
<div class="h hb" style="left:967.7px;top:568.2px;width:32.1px;height:28.3px;"><i class="ic"></i></div>
<div class="h hb" style="left:1001.1px;top:568.2px;width:32.1px;height:28.3px;"><i class="ic"></i></div>
<div class="h hb" style="left:1034.5px;top:568.2px;width:32.1px;height:28.3px;"><i class="ic"></i></div>
<div class="h hb" style="left:1067.9px;top:568.2px;width:32.1px;height:28.3px;"><i class="ic"></i></div>
<div class="h hb" style="left:1101.2px;top:568.2px;width:32.1px;height:28.3px;"><i class="ic"></i></div>
<div class="h hb" style="left:1134.6px;top:568.2px;width:32.1px;height:28.3px;"><i class="ic"></i></div>
<div class="h hb" style="left:1168px;top:568.2px;width:32.1px;height:28.3px;"><i class="ic"></i></div>
<div class="h hb" style="left:1201.4px;top:568.2px;width:32.1px;height:28.3px;"><i class="ic"></i></div>
<div class="h hb" style="left:1234.8px;top:568.2px;width:32.1px;height:28.3px;"><i class="ic"></i></div>
<div class="h hb" style="left:1268.1px;top:568.2px;width:32.1px;height:28.3px;"><i class="ic"></i></div>
<div class="h hb" style="left:1301.5px;top:568.2px;width:32.1px;height:28.3px;"><i class="ic"></i></div>
<div class="h hb" style="left:1334.9px;top:568.2px;width:32.1px;height:28.3px;"><i class="ic"></i></div>
<div class="h hb" style="left:1368.3px;top:568.2px;width:32.1px;height:28.3px;"><i class="ic"></i></div>
<div class="bb" style="left:934.3px;top:593px;width:466.3px;height:45.6px;"></div>
<div class="" style="left:934.3px;top:603px;width:466.3px;height:34.5px;background:linear-gradient(#d6effc,#d6effc) 0 46%/100% 1.3px no-repeat,repeating-linear-gradient(90deg,#d6effc 0,#d6effc 1.7px,#9db3dd 2px,#d6effc 2.4px,#d6effc 3.9px,#9db3dd 4.2px,#d6effc 4.6px,#d6effc 6.2px,#55649f 6.7px,#48558f 7.9px,#d6effc 8.345px);"></div>
<div class="" style="left:934.3px;top:603px;width:466.3px;height:4px;background:linear-gradient(rgba(69,80,138,.8),rgba(69,80,138,0))"></div>
<div class="" style="left:934.3px;top:633.5px;width:466.3px;height:4px;background:linear-gradient(rgba(69,80,138,0),rgba(69,80,138,.7))"></div>
<div class="h hb" style="left:1468.4px;top:568.2px;width:32.1px;height:28.3px;"><i class="ic"></i></div>
<div class="h hb" style="left:1501.8px;top:568.2px;width:32.1px;height:28.3px;"><i class="ic"></i></div>
<div class="h hb" style="left:1535.2px;top:568.2px;width:32.1px;height:28.3px;"><i class="ic"></i></div>
<div class="h hb" style="left:1568.6px;top:568.2px;width:28.7px;height:28.3px;"><i class="ic"></i></div>
<div class="bb" style="left:1468.4px;top:593px;width:128.9px;height:45.6px;"></div>
<div class="" style="left:1468.4px;top:603px;width:128.9px;height:34.5px;background:linear-gradient(#d6effc,#d6effc) 0 46%/100% 1.3px no-repeat,repeating-linear-gradient(90deg,#d6effc 0,#d6effc 1.7px,#9db3dd 2px,#d6effc 2.4px,#d6effc 3.9px,#9db3dd 4.2px,#d6effc 4.6px,#d6effc 6.2px,#55649f 6.7px,#48558f 7.9px,#d6effc 8.345px);"></div>
<div class="" style="left:1468.4px;top:603px;width:128.9px;height:4px;background:linear-gradient(rgba(69,80,138,.8),rgba(69,80,138,0))"></div>
<div class="" style="left:1468.4px;top:633.5px;width:128.9px;height:4px;background:linear-gradient(rgba(69,80,138,0),rgba(69,80,138,.7))"></div>
<div class="h hb" style="left:1601.9px;top:568.2px;width:32.1px;height:28.3px;"><i class="ic"></i></div>
<div class="h hb" style="left:1635.3px;top:568.2px;width:32.1px;height:28.3px;"><i class="ic"></i></div>
<div class="h hb" style="left:1668.7px;top:568.2px;width:32.1px;height:28.3px;"><i class="ic"></i></div>
<div class="h hb" style="left:1702.1px;top:568.2px;width:28.1px;height:28.3px;"><i class="ic"></i></div>
<div class="bb" style="left:1601.9px;top:593px;width:128.3px;height:45.6px;"></div>
<div class="" style="left:1601.9px;top:603px;width:128.3px;height:34.5px;background:linear-gradient(#d6effc,#d6effc) 0 46%/100% 1.3px no-repeat,repeating-linear-gradient(90deg,#d6effc 0,#d6effc 1.7px,#9db3dd 2px,#d6effc 2.4px,#d6effc 3.9px,#9db3dd 4.2px,#d6effc 4.6px,#d6effc 6.2px,#55649f 6.7px,#48558f 7.9px,#d6effc 8.345px);"></div>
<div class="" style="left:1601.9px;top:603px;width:128.3px;height:4px;background:linear-gradient(rgba(69,80,138,.8),rgba(69,80,138,0))"></div>
<div class="" style="left:1601.9px;top:633.5px;width:128.3px;height:4px;background:linear-gradient(rgba(69,80,138,0),rgba(69,80,138,.7))"></div>
<div class="h hb" style="left:1735.5px;top:568.2px;width:32.1px;height:28.3px;"><i class="ic"></i></div>
<div class="h hb" style="left:1768.8px;top:568.2px;width:32.1px;height:28.3px;"><i class="ic"></i></div>
<div class="h hb" style="left:1802.2px;top:568.2px;width:32.1px;height:28.3px;"><i class="ic"></i></div>
<div class="h hb" style="left:1835.6px;top:568.2px;width:16px;height:28.3px;"><i class="ic"></i></div>
<div class="bb" style="left:1735.5px;top:593px;width:116.1px;height:45.6px;"></div>
<div class="" style="left:1735.5px;top:603px;width:116.1px;height:34.5px;background:linear-gradient(#d6effc,#d6effc) 0 46%/100% 1.3px no-repeat,repeating-linear-gradient(90deg,#d6effc 0,#d6effc 1.7px,#9db3dd 2px,#d6effc 2.4px,#d6effc 3.9px,#9db3dd 4.2px,#d6effc 4.6px,#d6effc 6.2px,#55649f 6.7px,#48558f 7.9px,#d6effc 8.345px);"></div>
<div class="" style="left:1735.5px;top:603px;width:116.1px;height:4px;background:linear-gradient(rgba(69,80,138,.8),rgba(69,80,138,0))"></div>
<div class="" style="left:1735.5px;top:633.5px;width:116.1px;height:4px;background:linear-gradient(rgba(69,80,138,0),rgba(69,80,138,.7))"></div>
<div class="" style="left:0px;top:640.4px;width:266.6px;height:6.6px;background:#7d7651;border-radius:2.5px;box-shadow:inset 0 1px 0 rgba(255,255,255,.12),inset 0 -1px 0 rgba(0,0,0,.25)"></div>
<div class="" style="left:268px;top:640.4px;width:131.5px;height:6.6px;background:#7d7651;border-radius:2.5px;box-shadow:inset 0 1px 0 rgba(255,255,255,.12),inset 0 -1px 0 rgba(0,0,0,.25)"></div>
<div class="" style="left:400.6px;top:640.4px;width:1067.1px;height:6.6px;background:#7d7651;border-radius:2.5px;box-shadow:inset 0 1px 0 rgba(255,255,255,.12),inset 0 -1px 0 rgba(0,0,0,.25)"></div>
<div class="" style="left:0px;top:936.5px;width:333.8px;height:6.5px;background:#84506a;border-radius:2.5px;box-shadow:inset 0 1px 0 rgba(255,255,255,.12),inset 0 -1px 0 rgba(0,0,0,.25)"></div>
<div class="" style="left:1069px;top:936.5px;width:331px;height:6.5px;background:#84506a;border-radius:2.5px;box-shadow:inset 0 1px 0 rgba(255,255,255,.12),inset 0 -1px 0 rgba(0,0,0,.25)"></div>
<div class="" style="left:1201px;top:1112.7px;width:534px;height:6.1px;background:#76854e;border-radius:2.5px;box-shadow:inset 0 1px 0 rgba(255,255,255,.12),inset 0 -1px 0 rgba(0,0,0,.25)"></div>
<div class="" style="left:1201px;top:1120.8px;width:266.7px;height:6px;background:#85824f;border-radius:2.5px;box-shadow:inset 0 1px 0 rgba(255,255,255,.12),inset 0 -1px 0 rgba(0,0,0,.25)"></div>
<div class="" style="left:934.6px;top:1272.8px;width:132.9px;height:5.9px;background:#76854e;border-radius:2.5px;box-shadow:inset 0 1px 0 rgba(255,255,255,.12),inset 0 -1px 0 rgba(0,0,0,.25)"></div>
<div class="" style="left:1268.4px;top:1272.8px;width:132.2px;height:5.9px;background:#76854e;border-radius:2.5px;box-shadow:inset 0 1px 0 rgba(255,255,255,.12),inset 0 -1px 0 rgba(0,0,0,.25)"></div>
<div class="" style="left:0px;top:1280.6px;width:124.5px;height:6.3px;background:#85824f;border-radius:2.5px;box-shadow:inset 0 1px 0 rgba(255,255,255,.12),inset 0 -1px 0 rgba(0,0,0,.25)"></div>
<div class="" style="left:1069px;top:1280.6px;width:331.6px;height:6.3px;background:#85824f;border-radius:2.5px;box-shadow:inset 0 1px 0 rgba(255,255,255,.12),inset 0 -1px 0 rgba(0,0,0,.25)"></div>
<div class="" style="left:534.4px;top:1360.5px;width:1334px;height:6.3px;background:#84506a;border-radius:2.5px;box-shadow:inset 0 1px 0 rgba(255,255,255,.12),inset 0 -1px 0 rgba(0,0,0,.25)"></div>
<div class="" style="left:0px;top:1440.5px;width:274px;height:6.3px;background:#85824f;border-radius:2.5px;box-shadow:inset 0 1px 0 rgba(255,255,255,.12),inset 0 -1px 0 rgba(0,0,0,.25)"></div>
<div class="" style="left:1069px;top:1440.5px;width:356.7px;height:6.3px;background:#85824f;border-radius:2.5px;box-shadow:inset 0 1px 0 rgba(255,255,255,.12),inset 0 -1px 0 rgba(0,0,0,.25)"></div>
<div class="" style="left:0px;top:1448.3px;width:1067.5px;height:6.5px;background:#55718c;border-radius:2.5px;box-shadow:inset 0 1px 0 rgba(255,255,255,.12),inset 0 -1px 0 rgba(0,0,0,.25)"></div>
<div class="" style="left:1069px;top:1448.3px;width:816px;height:6.5px;background:#55718c;border-radius:2.5px;box-shadow:inset 0 1px 0 rgba(255,255,255,.12),inset 0 -1px 0 rgba(0,0,0,.25)"></div>
<div class="h hb" style="left:467px;top:648.2px;width:66.6px;height:28.3px;"><i class="ic"></i><span class="lb" style="transform:scaleX(0.76);letter-spacing:0.97px;">T..7</span></div>
<div class="bb" style="left:467px;top:673px;width:66.6px;height:45.6px;"></div>
<svg style="left:467px;top:677.5px" width="66.6" height="41" viewBox="0 0 66.6 41"><path d="M0 20 L30 19.7 L65.6 17.5 L65.6 23.5 L30 21.3Z" fill="#d6effc"/><path d="M0 20.5 H66.6" stroke="#d6effc" stroke-width="1"/></svg>
<div class="h hb" style="left:601px;top:648.2px;width:57.4px;height:28.3px;"><i class="ic"></i><span class="lb" style="transform:scaleX(0.76);letter-spacing:1.79px;">..7</span></div>
<div class="bb" style="left:601px;top:673px;width:57.4px;height:45.6px;"></div>
<svg style="left:601px;top:677.5px" width="57.4" height="41" viewBox="0 0 57.4 41"><path d="M0 20 L25.8 19.7 L56.4 17.5 L56.4 23.5 L25.8 21.3Z" fill="#d6effc"/><path d="M0 20.5 H57.4" stroke="#d6effc" stroke-width="1"/></svg>
<div class="h hb" style="left:730.4px;top:648.2px;width:66.3px;height:28.3px;"><i class="ic"></i><span class="lb" style="transform:scaleX(0.76);letter-spacing:0.97px;">T..7</span></div>
<div class="bb" style="left:730.4px;top:673px;width:66.3px;height:45.6px;"></div>
<svg style="left:730.4px;top:677.5px" width="66.3" height="41" viewBox="0 0 66.3 41"><path d="M0 20 L29.8 19.7 L65.3 17.5 L65.3 23.5 L29.8 21.3Z" fill="#d6effc"/><path d="M0 20.5 H66.3" stroke="#d6effc" stroke-width="1"/><path d="M1 39.5 C33.1 39.5,36.5 2,65.3 2" fill="none" stroke="#d6effc" stroke-width="2.4"/></svg>
<div class="h hb" style="left:868px;top:648.2px;width:61.6px;height:28.3px;"><i class="ic"></i><span class="lb" style="transform:scaleX(0.76);letter-spacing:0.97px;">T..7</span></div>
<div class="bb" style="left:868px;top:673px;width:61.6px;height:45.6px;"></div>
<svg style="left:868px;top:677.5px" width="61.6" height="41" viewBox="0 0 61.6 41"><path d="M0 20 L27.7 19.7 L60.6 17.5 L60.6 23.5 L27.7 21.3Z" fill="#d6effc"/><path d="M0 20.5 H61.6" stroke="#d6effc" stroke-width="1"/></svg>
<div class="h hb" style="left:1001px;top:648.2px;width:67px;height:28.3px;"><i class="ic"></i><span class="lb" style="transform:scaleX(0.76);letter-spacing:0.97px;">T..7</span></div>
<div class="bb" style="left:1001px;top:673px;width:67px;height:45.6px;"></div>
<svg style="left:1001px;top:677.5px" width="67" height="41" viewBox="0 0 67 41"><path d="M0 20 L30.2 19.7 L66 17.5 L66 23.5 L30.2 21.3Z" fill="#d6effc"/><path d="M0 20.5 H67" stroke="#d6effc" stroke-width="1"/></svg>
<div class="h hb" style="left:1668.3px;top:648.2px;width:61.9px;height:28.3px;"><i class="ic"></i><span class="lb" style="transform:scaleX(0.76);letter-spacing:0.97px;">T..7</span></div>
<div class="bb" style="left:1668.3px;top:673px;width:61.9px;height:45.6px;"></div>
<svg style="left:1668.3px;top:677.5px" width="61.9" height="41" viewBox="0 0 61.9 41"><path d="M0 20 L27.9 19.7 L60.9 17.5 L60.9 23.5 L27.9 21.3Z" fill="#d6effc"/><path d="M0 20.5 H61.9" stroke="#d6effc" stroke-width="1"/></svg>
<div class="h hb" style="left:1785.3px;top:648.2px;width:66.3px;height:28.3px;"><i class="ic"></i><span class="lb" style="transform:scaleX(0.76);letter-spacing:0.97px;">T..7</span></div>
<div class="bb" style="left:1785.3px;top:673px;width:66.3px;height:45.6px;"></div>
<svg style="left:1785.3px;top:677.5px" width="66.3" height="41" viewBox="0 0 66.3 41"><path d="M0 20 L29.8 19.7 L65.3 17.5 L65.3 23.5 L29.8 21.3Z" fill="#d6effc"/><path d="M0 20.5 H66.3" stroke="#d6effc" stroke-width="1"/></svg>
<div class="h hb" style="left:534.4px;top:720.2px;width:116.1px;height:28.3px;"><i class="ic"></i><span class="lb" style="transform:scaleX(0.76);letter-spacing:-0.07px;">TPS..er 09</span></div>
<div class="bb" style="left:534.4px;top:745px;width:116.1px;height:45.6px;"></div>
<svg style="left:534.4px;top:749.5px" width="116.1" height="41" viewBox="0 0 116.1 41"><path d="M0 14.4L1.8 14.7L3.6 15.1L5.4 15.3L7.2 15.9L9 16.1L10.8 17.1L12.6 17L14.4 16.9L16.2 17.4L18 17.4L19.8 18.1L21.6 18L23.4 18.3L25.2 18.3L27 18.4L28.8 18.8L30.6 18.8L32.4 18.8L34.2 18.7L36 18.8L37.8 19.1L39.6 19L41.4 19.2L43.2 19.1L45 19.3L46.8 19.4L48.6 19.2L50.4 19.4L52.2 20L54 19.9L55.8 19.9L57.6 20L59.4 20L59.4 21L57.6 21L55.8 21.1L54 21.1L52.2 21L50.4 21.6L48.6 21.8L46.8 21.6L45 21.7L43.2 21.9L41.4 21.8L39.6 22L37.8 21.9L36 22.2L34.2 22.3L32.4 22.2L30.6 22.2L28.8 22.2L27 22.6L25.2 22.7L23.4 22.7L21.6 23L19.8 22.9L18 23.6L16.2 23.6L14.4 24.1L12.6 24L10.8 23.9L9 24.9L7.2 25.1L5.4 25.7L3.6 25.9L1.8 26.3L0 26.6Z" fill="#d6effc"/><path d="M0 20.5 H116.1" stroke="#d6effc" stroke-width="1"/><path d="M1 2 C48.8 2,58 39.5,115.1 39.5" fill="none" stroke="#d6effc" stroke-width="2.4"/></svg>
<div class="h hb" style="left:934px;top:720.2px;width:116.7px;height:28.3px;"><i class="ic"></i><span class="lb" style="transform:scaleX(0.76);letter-spacing:-0.07px;">TPS..er 09</span></div>
<div class="bb" style="left:934px;top:745px;width:116.7px;height:45.6px;"></div>
<svg style="left:934px;top:749.5px" width="116.7" height="41" viewBox="0 0 116.7 41"><path d="M0 14.4L1.8 14.7L3.6 15.1L5.4 15.3L7.2 15.9L9 16.1L10.8 17.1L12.6 17L14.4 16.9L16.2 17.4L18 17.4L19.8 18.1L21.6 18L23.4 18.3L25.2 18.3L27 18.4L28.8 18.8L30.6 18.8L32.4 18.8L34.2 18.7L36 18.8L37.8 19.1L39.6 19L41.4 19.2L43.2 19.1L45 19.3L46.8 19.4L48.6 19.2L50.4 19.4L52.2 20L54 19.9L55.8 19.9L57.6 20L59.4 20L59.4 21L57.6 21L55.8 21.1L54 21.1L52.2 21L50.4 21.6L48.6 21.8L46.8 21.6L45 21.7L43.2 21.9L41.4 21.8L39.6 22L37.8 21.9L36 22.2L34.2 22.3L32.4 22.2L30.6 22.2L28.8 22.2L27 22.6L25.2 22.7L23.4 22.7L21.6 23L19.8 22.9L18 23.6L16.2 23.6L14.4 24.1L12.6 24L10.8 23.9L9 24.9L7.2 25.1L5.4 25.7L3.6 25.9L1.8 26.3L0 26.6Z" fill="#d6effc"/><path d="M0 20.5 H116.7" stroke="#d6effc" stroke-width="1"/><path d="M1 2 C49 2,58.4 39.5,115.7 39.5" fill="none" stroke="#d6effc" stroke-width="2.4"/></svg>
<div class="h hb" style="left:1068px;top:720.2px;width:116.5px;height:28.3px;"><i class="ic"></i><span class="lb" style="transform:scaleX(0.76);letter-spacing:-0.07px;">TPS..er 09</span></div>
<div class="bb" style="left:1068px;top:745px;width:116.5px;height:45.6px;"></div>
<svg style="left:1068px;top:749.5px" width="116.5" height="41" viewBox="0 0 116.5 41"><path d="M0 14.4L1.8 14.7L3.6 15.1L5.4 15.3L7.2 15.9L9 16.1L10.8 17.1L12.6 17L14.4 16.9L16.2 17.4L18 17.4L19.8 18.1L21.6 18L23.4 18.3L25.2 18.3L27 18.4L28.8 18.8L30.6 18.8L32.4 18.8L34.2 18.7L36 18.8L37.8 19.1L39.6 19L41.4 19.2L43.2 19.1L45 19.3L46.8 19.4L48.6 19.2L50.4 19.4L52.2 20L54 19.9L55.8 19.9L57.6 20L59.4 20L59.4 21L57.6 21L55.8 21.1L54 21.1L52.2 21L50.4 21.6L48.6 21.8L46.8 21.6L45 21.7L43.2 21.9L41.4 21.8L39.6 22L37.8 21.9L36 22.2L34.2 22.3L32.4 22.2L30.6 22.2L28.8 22.2L27 22.6L25.2 22.7L23.4 22.7L21.6 23L19.8 22.9L18 23.6L16.2 23.6L14.4 24.1L12.6 24L10.8 23.9L9 24.9L7.2 25.1L5.4 25.7L3.6 25.9L1.8 26.3L0 26.6Z" fill="#d6effc"/><path d="M0 20.5 H116.5" stroke="#d6effc" stroke-width="1"/><path d="M1 2 C48.9 2,58.2 39.5,115.5 39.5" fill="none" stroke="#d6effc" stroke-width="2.4"/></svg>
<div class="h hb" style="left:1201px;top:720.2px;width:117px;height:28.3px;"><i class="ic"></i><span class="lb" style="transform:scaleX(0.76);letter-spacing:-0.07px;">TPS..er 09</span></div>
<div class="bb" style="left:1201px;top:745px;width:117px;height:45.6px;"></div>
<svg style="left:1201px;top:749.5px" width="117" height="41" viewBox="0 0 117 41"><path d="M0 14.4L1.8 14.7L3.6 15.1L5.4 15.3L7.2 15.9L9 16.1L10.8 17.1L12.6 17L14.4 16.9L16.2 17.4L18 17.4L19.8 18.1L21.6 18L23.4 18.3L25.2 18.3L27 18.4L28.8 18.8L30.6 18.8L32.4 18.8L34.2 18.7L36 18.8L37.8 19.1L39.6 19L41.4 19.2L43.2 19.1L45 19.3L46.8 19.4L48.6 19.2L50.4 19.4L52.2 20L54 19.9L55.8 19.9L57.6 20L59.4 20L59.4 21L57.6 21L55.8 21.1L54 21.1L52.2 21L50.4 21.6L48.6 21.8L46.8 21.6L45 21.7L43.2 21.9L41.4 21.8L39.6 22L37.8 21.9L36 22.2L34.2 22.3L32.4 22.2L30.6 22.2L28.8 22.2L27 22.6L25.2 22.7L23.4 22.7L21.6 23L19.8 22.9L18 23.6L16.2 23.6L14.4 24.1L12.6 24L10.8 23.9L9 24.9L7.2 25.1L5.4 25.7L3.6 25.9L1.8 26.3L0 26.6Z" fill="#d6effc"/><path d="M0 20.5 H117" stroke="#d6effc" stroke-width="1"/><path d="M1 2 C49.1 2,58.5 39.5,116 39.5" fill="none" stroke="#d6effc" stroke-width="2.4"/></svg>
<div class="h hb" style="left:1735px;top:720.2px;width:116.6px;height:28.3px;"><i class="ic"></i><span class="lb" style="transform:scaleX(0.76);letter-spacing:-0.07px;">TPS..er 09</span></div>
<div class="bb" style="left:1735px;top:745px;width:116.6px;height:45.6px;"></div>
<svg style="left:1735px;top:749.5px" width="116.6" height="41" viewBox="0 0 116.6 41"><path d="M0 14.4L1.8 14.7L3.6 15.1L5.4 15.3L7.2 15.9L9 16.1L10.8 17.1L12.6 17L14.4 16.9L16.2 17.4L18 17.4L19.8 18.1L21.6 18L23.4 18.3L25.2 18.3L27 18.4L28.8 18.8L30.6 18.8L32.4 18.8L34.2 18.7L36 18.8L37.8 19.1L39.6 19L41.4 19.2L43.2 19.1L45 19.3L46.8 19.4L48.6 19.2L50.4 19.4L52.2 20L54 19.9L55.8 19.9L57.6 20L59.4 20L59.4 21L57.6 21L55.8 21.1L54 21.1L52.2 21L50.4 21.6L48.6 21.8L46.8 21.6L45 21.7L43.2 21.9L41.4 21.8L39.6 22L37.8 21.9L36 22.2L34.2 22.3L32.4 22.2L30.6 22.2L28.8 22.2L27 22.6L25.2 22.7L23.4 22.7L21.6 23L19.8 22.9L18 23.6L16.2 23.6L14.4 24.1L12.6 24L10.8 23.9L9 24.9L7.2 25.1L5.4 25.7L3.6 25.9L1.8 26.3L0 26.6Z" fill="#d6effc"/><path d="M0 20.5 H116.6" stroke="#d6effc" stroke-width="1"/><path d="M1 2 C49 2,58.3 39.5,115.6 39.5" fill="none" stroke="#d6effc" stroke-width="2.4"/></svg>
<div class="h hb" style="left:267px;top:792.2px;width:128.4px;height:28.3px;"><i class="ic"></i><span class="lb" style="transform:scaleX(0.76);letter-spacing:-0.38px;">RISER</span></div>
<div class="bb" style="left:267px;top:817px;width:128.4px;height:45.6px;"></div>
<svg style="left:267px;top:821.5px" width="128.4" height="41" viewBox="0 0 128.4 41"><path d="M0 20.5L2 20.5L4 20.5L6 20.5L8 20.5L10 20.5L12 20.5L14 20.5L16 20.5L18 20.5L20 20.5L22 20.5L24 20.5L26 20.5L28 20.5L30 20.5L32 20.5L34 20.5L36 20.5L38 20.5L40 20.5L42 20.5L44 20.5L46 20.5L48 20.5L50 20.5L52 20.5L54 20.5L56 20.5L58 20.5L60 20.4L62 20.3L64 20.2L66 20.1L68 20L70 20L72 19.8L74 19.7L76 19.7L78 19.6L80 19.7L82 19.7L84 19.6L86 19.6L88 19.3L90 19.4L92 19.1L94 19.3L96 18.9L98 18.9L100 19.3L102 19.1L104 18.7L106 18.9L108 18.5L110 18.8L112 19L114 18.6L116 18.4L118 18.7L120 18.8L122 18.6L124 18.1L126 18.2L128 18.6L128 23.2L126 23.6L124 23.7L122 23.2L120 23L118 23.1L116 23.4L114 23.2L112 22.8L110 23L108 23.3L106 22.9L104 23.1L102 22.7L100 22.5L98 22.9L96 22.9L94 22.5L92 22.7L90 22.4L88 22.5L86 22.2L84 22.2L82 22.1L80 22.1L78 22.2L76 22.1L74 22.1L72 22L70 21.8L68 21.8L66 21.7L64 21.6L62 21.5L60 21.4L58 21.3L56 21.3L54 21.3L52 21.3L50 21.3L48 21.3L46 21.3L44 21.3L42 21.3L40 21.3L38 21.3L36 21.3L34 21.3L32 21.3L30 21.3L28 21.3L26 21.3L24 21.3L22 21.3L20 21.3L18 21.3L16 21.3L14 21.3L12 21.3L10 21.3L8 21.3L6 21.3L4 21.3L2 21.3L0 21.3Z" fill="#d6effc"/><path d="M0 20.9 H128.4" stroke="#d6effc" stroke-width="1"/><path d="M1 39.5 C64.2 39.5,70.6 2,127.4 2" fill="none" stroke="#d6effc" stroke-width="2.4"/></svg>
<div class="h hb" style="left:400.6px;top:792.2px;width:132.4px;height:28.3px;"><i class="ic"></i><span class="lb" style="transform:scaleX(0.76);letter-spacing:-0.38px;">RISER</span></div>
<div class="bb" style="left:400.6px;top:817px;width:132.4px;height:45.6px;"></div>
<svg style="left:400.6px;top:821.5px" width="132.4" height="41" viewBox="0 0 132.4 41"><path d="M0 20.5L2 20.5L4 20.5L6 20.5L8 20.5L10 20.5L12 20.5L14 20.5L16 20.5L18 20.5L20 20.5L22 20.5L24 20.5L26 20.5L28 20.5L30 20.5L32 20.5L34 20.5L36 20.5L38 20.5L40 20.5L42 20.5L44 20.5L46 20.5L48 20.5L50 20.5L52 20.5L54 20.5L56 20.5L58 20.5L60 20.5L62 20.3L64 20.3L66 20.2L68 20.1L70 20.1L72 19.9L74 19.8L76 19.7L78 19.7L80 19.8L82 19.7L84 19.6L86 19.7L88 19.4L90 19.4L92 19.2L94 19.3L96 19L98 19L100 19.4L102 19.2L104 18.8L106 19L108 18.6L110 18.9L112 19.1L114 18.7L116 18.5L118 18.8L120 18.9L122 18.7L124 18.2L126 18.3L128 18.7L130 18.5L132 18.6L132 23.2L130 23.3L128 23.1L126 23.5L124 23.6L122 23.1L120 22.9L118 23L116 23.3L114 23.1L112 22.7L110 22.9L108 23.2L106 22.8L104 23L102 22.6L100 22.4L98 22.8L96 22.8L94 22.5L92 22.6L90 22.4L88 22.4L86 22.1L84 22.2L82 22.1L80 22L78 22.1L76 22.1L74 22L72 21.9L70 21.7L68 21.7L66 21.6L64 21.5L62 21.5L60 21.3L58 21.3L56 21.3L54 21.3L52 21.3L50 21.3L48 21.3L46 21.3L44 21.3L42 21.3L40 21.3L38 21.3L36 21.3L34 21.3L32 21.3L30 21.3L28 21.3L26 21.3L24 21.3L22 21.3L20 21.3L18 21.3L16 21.3L14 21.3L12 21.3L10 21.3L8 21.3L6 21.3L4 21.3L2 21.3L0 21.3Z" fill="#d6effc"/><path d="M0 20.9 H132.4" stroke="#d6effc" stroke-width="1"/><path d="M1 39.5 C66.2 39.5,72.8 2,131.4 2" fill="none" stroke="#d6effc" stroke-width="2.4"/></svg>
<div class="h hb" style="left:534.4px;top:792.2px;width:124px;height:28.3px;"><i class="ic"></i><span class="lb" style="transform:scaleX(0.76);letter-spacing:-0.38px;">RISER</span></div>
<div class="bb" style="left:534.4px;top:817px;width:124px;height:45.6px;"></div>
<svg style="left:534.4px;top:821.5px" width="124" height="41" viewBox="0 0 124 41"><path d="M0 20.5L2 20.5L4 20.5L6 20.5L8 20.4L10 20.4L12 20.4L14 20.3L16 20.3L18 20.2L20 20.2L22 20.1L24 20.1L26 19.9L28 19.8L30 19.9L32 19.6L34 19.5L36 19.5L38 19.4L40 19.4L42 19.4L44 19.1L46 19.2L48 19L50 18.8L52 18.8L54 18.5L56 18.3L58 17.9L60 18L62 17.8L64 17.7L66 17.4L68 17.4L70 17.4L72 16.6L74 16.4L76 16.3L78 16.3L80 16.5L82 16.5L84 16.2L86 16.3L88 15.2L90 15.5L92 14.6L94 15.1L96 13.9L98 13.9L100 15.2L102 14.6L104 13L106 13.6L108 12.4L110 13.3L112 13.8L114 12.3L116 11.7L118 12.6L120 12.9L122 12L124 10.1L124 31.7L122 29.8L120 28.9L118 29.2L116 30.1L114 29.5L112 28L110 28.5L108 29.4L106 28.2L104 28.8L102 27.2L100 26.6L98 27.9L96 27.9L94 26.7L92 27.2L90 26.3L88 26.6L86 25.5L84 25.6L82 25.3L80 25.3L78 25.5L76 25.5L74 25.4L72 25.2L70 24.4L68 24.4L66 24.4L64 24.1L62 24L60 23.8L58 23.9L56 23.5L54 23.3L52 23L50 23L48 22.8L46 22.6L44 22.7L42 22.4L40 22.4L38 22.4L36 22.3L34 22.3L32 22.2L30 21.9L28 22L26 21.9L24 21.7L22 21.7L20 21.6L18 21.6L16 21.5L14 21.5L12 21.4L10 21.4L8 21.4L6 21.3L4 21.3L2 21.3L0 21.3Z" fill="#d6effc"/><path d="M0 20.9 H124" stroke="#d6effc" stroke-width="1"/></svg>
<div class="h hb" style="left:801px;top:792.2px;width:128.6px;height:28.3px;"><i class="ic"></i><span class="lb" style="transform:scaleX(0.76);letter-spacing:-0.38px;">RISER</span></div>
<div class="bb" style="left:801px;top:817px;width:128.6px;height:45.6px;"></div>
<svg style="left:801px;top:821.5px" width="128.6" height="41" viewBox="0 0 128.6 41"><path d="M0 20.5L2 20.5L4 20.5L6 20.5L8 20.4L10 20.4L12 20.4L14 20.4L16 20.3L18 20.3L20 20.3L22 20.3L24 20.3L26 20.2L28 20.2L30 20.2L32 20.1L34 20L36 20.1L38 20L40 20.1L42 20.1L44 19.9L46 20L48 20L50 19.9L52 19.9L54 19.8L56 19.8L58 19.6L60 19.7L62 19.6L64 19.6L66 19.5L68 19.5L70 19.6L72 19.3L74 19.2L76 19.3L78 19.3L80 19.4L82 19.4L84 19.3L86 19.4L88 19L90 19.2L92 18.9L94 19.1L96 18.7L98 18.8L100 19.2L102 19L104 18.6L106 18.8L108 18.4L110 18.8L112 18.9L114 18.5L116 18.4L118 18.7L120 18.8L122 18.6L124 18L126 18.2L128 18.6L128 23.2L126 23.6L124 23.8L122 23.2L120 23L118 23.1L116 23.4L114 23.3L112 22.9L110 23L108 23.4L106 23L104 23.2L102 22.8L100 22.6L98 23L96 23.1L94 22.7L92 22.9L90 22.6L88 22.8L86 22.4L84 22.5L82 22.4L80 22.4L78 22.5L76 22.5L74 22.6L72 22.5L70 22.2L68 22.3L66 22.3L64 22.2L62 22.2L60 22.1L58 22.2L56 22L54 22L52 21.9L50 21.9L48 21.8L46 21.8L44 21.9L42 21.7L40 21.7L38 21.8L36 21.7L34 21.8L32 21.7L30 21.6L28 21.6L26 21.6L24 21.5L22 21.5L20 21.5L18 21.5L16 21.5L14 21.4L12 21.4L10 21.4L8 21.4L6 21.3L4 21.3L2 21.3L0 21.3Z" fill="#d6effc"/><path d="M0 20.9 H128.6" stroke="#d6effc" stroke-width="1"/></svg>
<div class="h hb" style="left:934px;top:792.2px;width:133.5px;height:28.3px;"><i class="ic"></i><span class="lb" style="transform:scaleX(0.76);letter-spacing:-0.38px;">RISER</span></div>
<div class="bb" style="left:934px;top:817px;width:133.5px;height:45.6px;"></div>
<svg style="left:934px;top:821.5px" width="133.5" height="41" viewBox="0 0 133.5 41"><path d="M0 20.5L2 20.5L4 20.5L6 20.5L8 20.4L10 20.4L12 20.4L14 20.4L16 20.4L18 20.3L20 20.3L22 20.3L24 20.3L26 20.2L28 20.2L30 20.2L32 20.1L34 20.1L36 20.1L38 20.1L40 20.1L42 20.1L44 20L46 20L48 20L50 19.9L52 20L54 19.8L56 19.8L58 19.7L60 19.7L62 19.6L64 19.7L66 19.6L68 19.6L70 19.6L72 19.3L74 19.3L76 19.3L78 19.3L80 19.4L82 19.4L84 19.4L86 19.4L88 19.1L90 19.2L92 19L94 19.2L96 18.8L98 18.8L100 19.2L102 19.1L104 18.7L106 18.9L108 18.5L110 18.8L112 19L114 18.6L116 18.5L118 18.8L120 18.9L122 18.7L124 18.2L126 18.3L128 18.7L130 18.6L132 18.6L132 23.2L130 23.2L128 23.1L126 23.5L124 23.6L122 23.1L120 22.9L118 23L116 23.3L114 23.2L112 22.8L110 23L108 23.3L106 22.9L104 23.1L102 22.7L100 22.6L98 23L96 23L94 22.6L92 22.8L90 22.6L88 22.7L86 22.4L84 22.4L82 22.4L80 22.4L78 22.5L76 22.5L74 22.5L72 22.5L70 22.2L68 22.2L66 22.2L64 22.1L62 22.2L60 22.1L58 22.1L56 22L54 22L52 21.8L50 21.9L48 21.8L46 21.8L44 21.8L42 21.7L40 21.7L38 21.7L36 21.7L34 21.7L32 21.7L30 21.6L28 21.6L26 21.6L24 21.5L22 21.5L20 21.5L18 21.5L16 21.4L14 21.4L12 21.4L10 21.4L8 21.4L6 21.3L4 21.3L2 21.3L0 21.3Z" fill="#d6effc"/><path d="M0 20.9 H133.5" stroke="#d6effc" stroke-width="1"/></svg>
<div class="h hb" style="left:1068.4px;top:792.2px;width:132px;height:28.3px;"><i class="ic"></i><span class="lb" style="transform:scaleX(0.76);letter-spacing:-0.38px;">RISER</span></div>
<div class="bb" style="left:1068.4px;top:817px;width:132px;height:45.6px;"></div>
<svg style="left:1068.4px;top:821.5px" width="132" height="41" viewBox="0 0 132 41"><path d="M0 20.5L2 20.5L4 20.5L6 20.5L8 20.4L10 20.4L12 20.4L14 20.4L16 20.4L18 20.3L20 20.3L22 20.3L24 20.3L26 20.2L28 20.2L30 20.2L32 20.1L34 20.1L36 20.1L38 20L40 20.1L42 20.1L44 20L46 20L48 20L50 19.9L52 20L54 19.8L56 19.8L58 19.6L60 19.7L62 19.6L64 19.6L66 19.6L68 19.6L70 19.6L72 19.3L74 19.3L76 19.3L78 19.3L80 19.4L82 19.4L84 19.4L86 19.4L88 19.1L90 19.2L92 18.9L94 19.1L96 18.8L98 18.8L100 19.2L102 19.1L104 18.6L106 18.9L108 18.5L110 18.8L112 19L114 18.6L116 18.4L118 18.7L120 18.8L122 18.6L124 18.1L126 18.2L128 18.7L130 18.5L132 18.6L132 23.2L130 23.3L128 23.1L126 23.6L124 23.7L122 23.2L120 23L118 23.1L116 23.4L114 23.2L112 22.8L110 23L108 23.3L106 22.9L104 23.2L102 22.7L100 22.6L98 23L96 23L94 22.7L92 22.9L90 22.6L88 22.7L86 22.4L84 22.4L82 22.4L80 22.4L78 22.5L76 22.5L74 22.5L72 22.5L70 22.2L68 22.2L66 22.2L64 22.2L62 22.2L60 22.1L58 22.2L56 22L54 22L52 21.8L50 21.9L48 21.8L46 21.8L44 21.8L42 21.7L40 21.7L38 21.8L36 21.7L34 21.7L32 21.7L30 21.6L28 21.6L26 21.6L24 21.5L22 21.5L20 21.5L18 21.5L16 21.4L14 21.4L12 21.4L10 21.4L8 21.4L6 21.3L4 21.3L2 21.3L0 21.3Z" fill="#d6effc"/><path d="M0 20.9 H132" stroke="#d6effc" stroke-width="1"/></svg>
<div class="h hb" style="left:1268.4px;top:792.2px;width:132.2px;height:28.3px;"><i class="ic"></i><span class="lb" style="transform:scaleX(0.76);letter-spacing:-0.38px;">RISER</span></div>
<div class="bb" style="left:1268.4px;top:817px;width:132.2px;height:45.6px;"></div>
<svg style="left:1268.4px;top:821.5px" width="132.2" height="41" viewBox="0 0 132.2 41"><path d="M0 20.5L2 20.5L4 20.5L6 20.5L8 20.4L10 20.4L12 20.4L14 20.3L16 20.3L18 20.2L20 20.2L22 20.2L24 20.1L26 20L28 19.9L30 19.9L32 19.7L34 19.6L36 19.6L38 19.5L40 19.5L42 19.5L44 19.2L46 19.3L48 19.1L50 19L52 19L54 18.7L56 18.6L58 18.2L60 18.3L62 18.1L64 18L66 17.7L68 17.8L70 17.8L72 17L74 16.8L76 16.8L78 16.7L80 17L82 16.9L84 16.7L86 16.8L88 15.7L90 16L92 15.2L94 15.7L96 14.7L98 14.6L100 15.7L102 15.2L104 13.8L106 14.4L108 13.2L110 14.1L112 14.5L114 13.2L116 12.7L118 13.5L120 13.7L122 12.9L124 11.2L126 11.5L128 12.8L130 12.2L132 12.4L132 29.4L130 29.6L128 29L126 30.3L124 30.6L122 28.9L120 28.1L118 28.3L116 29.1L114 28.6L112 27.3L110 27.7L108 28.6L106 27.4L104 28L102 26.6L100 26.1L98 27.2L96 27.1L94 26.1L92 26.6L90 25.8L88 26.1L86 25L84 25.1L82 24.9L80 24.8L78 25.1L76 25L74 25L72 24.8L70 24L68 24L66 24.1L64 23.8L62 23.7L60 23.5L58 23.6L56 23.2L54 23.1L52 22.8L50 22.8L48 22.7L46 22.5L44 22.6L42 22.3L40 22.3L38 22.3L36 22.2L34 22.2L32 22.1L30 21.9L28 21.9L26 21.8L24 21.7L22 21.6L20 21.6L18 21.6L16 21.5L14 21.5L12 21.4L10 21.4L8 21.4L6 21.3L4 21.3L2 21.3L0 21.3Z" fill="#d6effc"/><path d="M0 20.9 H132.2" stroke="#d6effc" stroke-width="1"/></svg>
<div class="h hb" style="left:1401.4px;top:792.2px;width:62.1px;height:28.3px;"><i class="ic"></i><span class="lb" style="transform:scaleX(0.76);letter-spacing:1.90px;">RI..</span></div>
<div class="bb" style="left:1401.4px;top:817px;width:62.1px;height:45.6px;"></div>
<svg style="left:1401.4px;top:821.5px" width="62.1" height="41" viewBox="0 0 62.1 41"><path d="M0 20.5L2 20.5L4 20.5L6 20.5L8 20.5L10 20.5L12 20.5L14 20.5L16 20.5L18 20.5L20 20.5L22 20.5L24 20.5L26 20.5L28 20.5L30 20.3L32 20L34 19.9L36 19.8L38 19.6L40 19.7L42 19.6L44 19.3L46 19.4L48 19.2L50 19.1L52 19.1L54 18.7L56 18.7L58 18.3L60 18.4L62 18.2L62 23.6L60 23.4L58 23.5L56 23.1L54 23.1L52 22.7L50 22.7L48 22.6L46 22.4L44 22.5L42 22.2L40 22.1L38 22.2L36 22L34 21.9L32 21.8L30 21.5L28 21.3L26 21.3L24 21.3L22 21.3L20 21.3L18 21.3L16 21.3L14 21.3L12 21.3L10 21.3L8 21.3L6 21.3L4 21.3L2 21.3L0 21.3Z" fill="#d6effc"/><path d="M0 20.9 H62.1" stroke="#d6effc" stroke-width="1"/><path d="M1 39.5 C31 39.5,34.2 2,61.1 2" fill="none" stroke="#d6effc" stroke-width="2.4"/></svg>
<div class="h hb" style="left:1606px;top:792.2px;width:124px;height:28.3px;"><i class="ic"></i><span class="lb" style="transform:scaleX(0.76);letter-spacing:-0.38px;">RISER</span></div>
<div class="bb" style="left:1606px;top:817px;width:124px;height:45.6px;"></div>
<svg style="left:1606px;top:821.5px" width="124" height="41" viewBox="0 0 124 41"><path d="M0 20.5L2 20.5L4 20.5L6 20.5L8 20.4L10 20.4L12 20.4L14 20.4L16 20.3L18 20.3L20 20.3L22 20.3L24 20.3L26 20.2L28 20.2L30 20.2L32 20.1L34 20L36 20L38 20L40 20.1L42 20.1L44 19.9L46 20L48 19.9L50 19.9L52 19.9L54 19.8L56 19.7L58 19.6L60 19.6L62 19.6L64 19.6L66 19.5L68 19.5L70 19.5L72 19.2L74 19.2L76 19.2L78 19.2L80 19.3L82 19.3L84 19.3L86 19.3L88 19L90 19.1L92 18.8L94 19L96 18.7L98 18.7L100 19.1L102 19L104 18.5L106 18.7L108 18.3L110 18.7L112 18.9L114 18.4L116 18.3L118 18.6L120 18.7L122 18.5L124 17.9L124 23.9L122 23.3L120 23.1L118 23.2L116 23.5L114 23.4L112 22.9L110 23.1L108 23.5L106 23.1L104 23.3L102 22.8L100 22.7L98 23.1L96 23.1L94 22.8L92 23L90 22.7L88 22.8L86 22.5L84 22.5L82 22.5L80 22.5L78 22.6L76 22.6L74 22.6L72 22.6L70 22.3L68 22.3L66 22.3L64 22.2L62 22.2L60 22.2L58 22.2L56 22.1L54 22L52 21.9L50 21.9L48 21.9L46 21.8L44 21.9L42 21.7L40 21.7L38 21.8L36 21.8L34 21.8L32 21.7L30 21.6L28 21.6L26 21.6L24 21.5L22 21.5L20 21.5L18 21.5L16 21.5L14 21.4L12 21.4L10 21.4L8 21.4L6 21.3L4 21.3L2 21.3L0 21.3Z" fill="#d6effc"/><path d="M0 20.9 H124" stroke="#d6effc" stroke-width="1"/></svg>
<div class="h hb" style="left:1735px;top:792.2px;width:116.6px;height:28.3px;"><i class="ic"></i><span class="lb" style="transform:scaleX(0.76);letter-spacing:-0.38px;">RISER</span></div>
<div class="bb" style="left:1735px;top:817px;width:116.6px;height:45.6px;"></div>
<svg style="left:1735px;top:821.5px" width="116.6" height="41" viewBox="0 0 116.6 41"><path d="M0 20.5L2 20.5L4 20.5L6 20.5L8 20.4L10 20.4L12 20.4L14 20.4L16 20.3L18 20.3L20 20.3L22 20.3L24 20.3L26 20.2L28 20.1L30 20.2L32 20L34 20L36 20L38 20L40 20L42 20L44 19.9L46 19.9L48 19.9L50 19.8L52 19.9L54 19.7L56 19.7L58 19.5L60 19.6L62 19.5L64 19.5L66 19.4L68 19.4L70 19.5L72 19.1L74 19.1L76 19.1L78 19.1L80 19.2L82 19.2L84 19.2L86 19.2L88 18.8L90 19L92 18.7L94 18.9L96 18.5L98 18.5L100 19L102 18.8L104 18.3L106 18.6L108 18.2L110 18.5L112 18.7L114 18.3L116 18.1L116 23.7L114 23.5L112 23.1L110 23.3L108 23.6L106 23.2L104 23.5L102 23L100 22.8L98 23.3L96 23.3L94 22.9L92 23.1L90 22.8L88 23L86 22.6L84 22.6L82 22.6L80 22.6L78 22.7L76 22.7L74 22.7L72 22.7L70 22.3L68 22.4L66 22.4L64 22.3L62 22.3L60 22.2L58 22.3L56 22.1L54 22.1L52 21.9L50 22L48 21.9L46 21.9L44 21.9L42 21.8L40 21.8L38 21.8L36 21.8L34 21.8L32 21.8L30 21.6L28 21.7L26 21.6L24 21.5L22 21.5L20 21.5L18 21.5L16 21.5L14 21.4L12 21.4L10 21.4L8 21.4L6 21.3L4 21.3L2 21.3L0 21.3Z" fill="#d6effc"/><path d="M0 20.9 H116.6" stroke="#d6effc" stroke-width="1"/></svg>
<div class="h hb" style="left:400.3px;top:864.2px;width:65.5px;height:28.3px;"><i class="ic"></i><span class="lb" style="transform:scaleX(0.76);letter-spacing:2.74px;">f..2</span></div>
<div class="bb" style="left:400.3px;top:889px;width:65.5px;height:45.6px;"></div>
<svg style="left:400.3px;top:893.5px" width="65.5" height="41" viewBox="0 0 65.5 41"><path d="M9.9 21.7L11.3 1L12.5 12.7L14.7 18.7L21.5 21L21.5 22.4L14.7 24.7L12.5 30.7L11.3 40ZM26.6 21.7L28 1L29.2 12.7L31.4 18.7L38.2 21L38.2 22.4L31.4 24.7L29.2 30.7L28 40ZM43.3 21.7L44.7 1L45.9 12.7L48.1 18.7L54.9 21L54.9 22.4L48.1 24.7L45.9 30.7L44.7 40ZM60 21.7L61.4 1L62.6 12.7L64.8 18.7L65.5 21L65.5 22.4L64.8 24.7L62.6 30.7L61.4 40Z" fill="#d6effc"/><path d="M0 21.7 H65.5" stroke="#d6effc" stroke-width="1"/></svg>
<div class="h hb" style="left:467px;top:864.2px;width:65.5px;height:28.3px;"><i class="ic"></i><span class="lb" style="transform:scaleX(0.76);letter-spacing:2.74px;">f..2</span></div>
<div class="bb" style="left:467px;top:889px;width:65.5px;height:45.6px;"></div>
<svg style="left:467px;top:893.5px" width="65.5" height="41" viewBox="0 0 65.5 41"><path d="M9.9 21.7L11.3 1L12.5 12.7L14.7 18.7L21.5 21L21.5 22.4L14.7 24.7L12.5 30.7L11.3 40ZM26.6 21.7L28 1L29.2 12.7L31.4 18.7L38.2 21L38.2 22.4L31.4 24.7L29.2 30.7L28 40ZM43.3 21.7L44.7 1L45.9 12.7L48.1 18.7L54.9 21L54.9 22.4L48.1 24.7L45.9 30.7L44.7 40ZM60 21.7L61.4 1L62.6 12.7L64.8 18.7L65.5 21L65.5 22.4L64.8 24.7L62.6 30.7L61.4 40Z" fill="#d6effc"/><path d="M0 21.7 H65.5" stroke="#d6effc" stroke-width="1"/></svg>
<div class="h hb" style="left:533.8px;top:864.2px;width:65.5px;height:28.3px;"><i class="ic"></i><span class="lb" style="transform:scaleX(0.76);letter-spacing:2.74px;">f..2</span></div>
<div class="bb" style="left:533.8px;top:889px;width:65.5px;height:45.6px;"></div>
<svg style="left:533.8px;top:893.5px" width="65.5" height="41" viewBox="0 0 65.5 41"><path d="M9.9 21.7L11.3 1L12.5 12.7L14.7 18.7L21.5 21L21.5 22.4L14.7 24.7L12.5 30.7L11.3 40ZM26.6 21.7L28 1L29.2 12.7L31.4 18.7L38.2 21L38.2 22.4L31.4 24.7L29.2 30.7L28 40ZM43.3 21.7L44.7 1L45.9 12.7L48.1 18.7L54.9 21L54.9 22.4L48.1 24.7L45.9 30.7L44.7 40ZM60 21.7L61.4 1L62.6 12.7L64.8 18.7L65.5 21L65.5 22.4L64.8 24.7L62.6 30.7L61.4 40Z" fill="#d6effc"/><path d="M0 21.7 H65.5" stroke="#d6effc" stroke-width="1"/></svg>
<div class="h hb" style="left:600.5px;top:864.2px;width:57.9px;height:28.3px;"><i class="ic"></i><span class="lb" style="transform:scaleX(0.76);letter-spacing:3.16px;">f..</span></div>
<div class="bb" style="left:600.5px;top:889px;width:57.9px;height:45.6px;"></div>
<svg style="left:600.5px;top:893.5px" width="57.9" height="41" viewBox="0 0 57.9 41"><path d="M9.9 21.7L11.3 1L12.5 12.7L14.7 18.7L21.5 21L21.5 22.4L14.7 24.7L12.5 30.7L11.3 40ZM26.6 21.7L28 1L29.2 12.7L31.4 18.7L38.2 21L38.2 22.4L31.4 24.7L29.2 30.7L28 40ZM43.3 21.7L44.7 1L45.9 12.7L48.1 18.7L54.9 21L54.9 22.4L48.1 24.7L45.9 30.7L44.7 40Z" fill="#d6effc"/><path d="M0 21.7 H57.9" stroke="#d6effc" stroke-width="1"/></svg>
<div class="h hb" style="left:667.3px;top:864.2px;width:65.5px;height:28.3px;"><i class="ic"></i><span class="lb" style="transform:scaleX(0.76);letter-spacing:2.74px;">f..2</span></div>
<div class="bb" style="left:667.3px;top:889px;width:65.5px;height:45.6px;"></div>
<svg style="left:667.3px;top:893.5px" width="65.5" height="41" viewBox="0 0 65.5 41"><path d="M9.9 21.7L11.3 1L12.5 12.7L14.7 18.7L21.5 21L21.5 22.4L14.7 24.7L12.5 30.7L11.3 40ZM26.6 21.7L28 1L29.2 12.7L31.4 18.7L38.2 21L38.2 22.4L31.4 24.7L29.2 30.7L28 40ZM43.3 21.7L44.7 1L45.9 12.7L48.1 18.7L54.9 21L54.9 22.4L48.1 24.7L45.9 30.7L44.7 40ZM60 21.7L61.4 1L62.6 12.7L64.8 18.7L65.5 21L65.5 22.4L64.8 24.7L62.6 30.7L61.4 40Z" fill="#d6effc"/><path d="M0 21.7 H65.5" stroke="#d6effc" stroke-width="1"/></svg>
<div class="h hb" style="left:734.1px;top:864.2px;width:62.6px;height:28.3px;"><i class="ic"></i><span class="lb" style="transform:scaleX(0.76);letter-spacing:2.74px;">f..2</span></div>
<div class="bb" style="left:734.1px;top:889px;width:62.6px;height:45.6px;"></div>
<svg style="left:734.1px;top:893.5px" width="62.6" height="41" viewBox="0 0 62.6 41"><path d="M9.9 21.7L11.3 1L12.5 12.7L14.7 18.7L21.5 21L21.5 22.4L14.7 24.7L12.5 30.7L11.3 40ZM26.6 21.7L28 1L29.2 12.7L31.4 18.7L38.2 21L38.2 22.4L31.4 24.7L29.2 30.7L28 40ZM43.3 21.7L44.7 1L45.9 12.7L48.1 18.7L54.9 21L54.9 22.4L48.1 24.7L45.9 30.7L44.7 40ZM60 21.7L61.4 1L62.6 12.7L64.8 18.7L62.6 21L62.6 22.4L64.8 24.7L62.6 30.7L61.4 40Z" fill="#d6effc"/><path d="M0 21.7 H62.6" stroke="#d6effc" stroke-width="1"/></svg>
<div class="h hb" style="left:800.8px;top:864.2px;width:65.5px;height:28.3px;"><i class="ic"></i><span class="lb" style="transform:scaleX(0.76);letter-spacing:2.74px;">f..2</span></div>
<div class="bb" style="left:800.8px;top:889px;width:65.5px;height:45.6px;"></div>
<svg style="left:800.8px;top:893.5px" width="65.5" height="41" viewBox="0 0 65.5 41"><path d="M9.9 21.7L11.3 1L12.5 12.7L14.7 18.7L21.5 21L21.5 22.4L14.7 24.7L12.5 30.7L11.3 40ZM26.6 21.7L28 1L29.2 12.7L31.4 18.7L38.2 21L38.2 22.4L31.4 24.7L29.2 30.7L28 40ZM43.3 21.7L44.7 1L45.9 12.7L48.1 18.7L54.9 21L54.9 22.4L48.1 24.7L45.9 30.7L44.7 40ZM60 21.7L61.4 1L62.6 12.7L64.8 18.7L65.5 21L65.5 22.4L64.8 24.7L62.6 30.7L61.4 40Z" fill="#d6effc"/><path d="M0 21.7 H65.5" stroke="#d6effc" stroke-width="1"/></svg>
<div class="h hb" style="left:867.6px;top:864.2px;width:62px;height:28.3px;"><i class="ic"></i><span class="lb" style="transform:scaleX(0.76);letter-spacing:2.74px;">f..2</span></div>
<div class="bb" style="left:867.6px;top:889px;width:62px;height:45.6px;"></div>
<svg style="left:867.6px;top:893.5px" width="62" height="41" viewBox="0 0 62 41"><path d="M9.9 21.7L11.3 1L12.5 12.7L14.7 18.7L21.5 21L21.5 22.4L14.7 24.7L12.5 30.7L11.3 40ZM26.6 21.7L28 1L29.2 12.7L31.4 18.7L38.2 21L38.2 22.4L31.4 24.7L29.2 30.7L28 40ZM43.3 21.7L44.7 1L45.9 12.7L48.1 18.7L54.9 21L54.9 22.4L48.1 24.7L45.9 30.7L44.7 40Z" fill="#d6effc"/><path d="M0 21.7 H62" stroke="#d6effc" stroke-width="1"/></svg>
<div class="h hb" style="left:934.3px;top:864.2px;width:65.5px;height:28.3px;"><i class="ic"></i><span class="lb" style="transform:scaleX(0.76);letter-spacing:2.74px;">f..2</span></div>
<div class="bb" style="left:934.3px;top:889px;width:65.5px;height:45.6px;"></div>
<svg style="left:934.3px;top:893.5px" width="65.5" height="41" viewBox="0 0 65.5 41"><path d="M9.9 21.7L11.3 1L12.5 12.7L14.7 18.7L21.5 21L21.5 22.4L14.7 24.7L12.5 30.7L11.3 40ZM26.6 21.7L28 1L29.2 12.7L31.4 18.7L38.2 21L38.2 22.4L31.4 24.7L29.2 30.7L28 40ZM43.3 21.7L44.7 1L45.9 12.7L48.1 18.7L54.9 21L54.9 22.4L48.1 24.7L45.9 30.7L44.7 40ZM60 21.7L61.4 1L62.6 12.7L64.8 18.7L65.5 21L65.5 22.4L64.8 24.7L62.6 30.7L61.4 40Z" fill="#d6effc"/><path d="M0 21.7 H65.5" stroke="#d6effc" stroke-width="1"/></svg>
<div class="h hb" style="left:1001.1px;top:864.2px;width:65.5px;height:28.3px;"><i class="ic"></i><span class="lb" style="transform:scaleX(0.76);letter-spacing:2.74px;">f..2</span></div>
<div class="bb" style="left:1001.1px;top:889px;width:65.5px;height:45.6px;"></div>
<svg style="left:1001.1px;top:893.5px" width="65.5" height="41" viewBox="0 0 65.5 41"><path d="M9.9 21.7L11.3 1L12.5 12.7L14.7 18.7L21.5 21L21.5 22.4L14.7 24.7L12.5 30.7L11.3 40ZM26.6 21.7L28 1L29.2 12.7L31.4 18.7L38.2 21L38.2 22.4L31.4 24.7L29.2 30.7L28 40ZM43.3 21.7L44.7 1L45.9 12.7L48.1 18.7L54.9 21L54.9 22.4L48.1 24.7L45.9 30.7L44.7 40ZM60 21.7L61.4 1L62.6 12.7L64.8 18.7L65.5 21L65.5 22.4L64.8 24.7L62.6 30.7L61.4 40Z" fill="#d6effc"/><path d="M0 21.7 H65.5" stroke="#d6effc" stroke-width="1"/></svg>
<div class="h hb" style="left:1067.9px;top:864.2px;width:65.5px;height:28.3px;"><i class="ic"></i><span class="lb" style="transform:scaleX(0.76);letter-spacing:2.74px;">f..2</span></div>
<div class="bb" style="left:1067.9px;top:889px;width:65.5px;height:45.6px;"></div>
<svg style="left:1067.9px;top:893.5px" width="65.5" height="41" viewBox="0 0 65.5 41"><path d="M9.9 21.7L11.3 1L12.5 12.7L14.7 18.7L21.5 21L21.5 22.4L14.7 24.7L12.5 30.7L11.3 40ZM26.6 21.7L28 1L29.2 12.7L31.4 18.7L38.2 21L38.2 22.4L31.4 24.7L29.2 30.7L28 40ZM43.3 21.7L44.7 1L45.9 12.7L48.1 18.7L54.9 21L54.9 22.4L48.1 24.7L45.9 30.7L44.7 40ZM60 21.7L61.4 1L62.6 12.7L64.8 18.7L65.5 21L65.5 22.4L64.8 24.7L62.6 30.7L61.4 40Z" fill="#d6effc"/><path d="M0 21.7 H65.5" stroke="#d6effc" stroke-width="1"/></svg>
<div class="h hb" style="left:1134.6px;top:864.2px;width:65.5px;height:28.3px;"><i class="ic"></i><span class="lb" style="transform:scaleX(0.76);letter-spacing:2.74px;">f..2</span></div>
<div class="bb" style="left:1134.6px;top:889px;width:65.5px;height:45.6px;"></div>
<svg style="left:1134.6px;top:893.5px" width="65.5" height="41" viewBox="0 0 65.5 41"><path d="M9.9 21.7L11.3 1L12.5 12.7L14.7 18.7L21.5 21L21.5 22.4L14.7 24.7L12.5 30.7L11.3 40ZM26.6 21.7L28 1L29.2 12.7L31.4 18.7L38.2 21L38.2 22.4L31.4 24.7L29.2 30.7L28 40ZM43.3 21.7L44.7 1L45.9 12.7L48.1 18.7L54.9 21L54.9 22.4L48.1 24.7L45.9 30.7L44.7 40ZM60 21.7L61.4 1L62.6 12.7L64.8 18.7L65.5 21L65.5 22.4L64.8 24.7L62.6 30.7L61.4 40Z" fill="#d6effc"/><path d="M0 21.7 H65.5" stroke="#d6effc" stroke-width="1"/></svg>
<div class="h hb" style="left:1201.4px;top:864.2px;width:65.5px;height:28.3px;"><i class="ic"></i><span class="lb" style="transform:scaleX(0.76);letter-spacing:2.74px;">f..2</span></div>
<div class="bb" style="left:1201.4px;top:889px;width:65.5px;height:45.6px;"></div>
<svg style="left:1201.4px;top:893.5px" width="65.5" height="41" viewBox="0 0 65.5 41"><path d="M9.9 21.7L11.3 1L12.5 12.7L14.7 18.7L21.5 21L21.5 22.4L14.7 24.7L12.5 30.7L11.3 40ZM26.6 21.7L28 1L29.2 12.7L31.4 18.7L38.2 21L38.2 22.4L31.4 24.7L29.2 30.7L28 40ZM43.3 21.7L44.7 1L45.9 12.7L48.1 18.7L54.9 21L54.9 22.4L48.1 24.7L45.9 30.7L44.7 40ZM60 21.7L61.4 1L62.6 12.7L64.8 18.7L65.5 21L65.5 22.4L64.8 24.7L62.6 30.7L61.4 40Z" fill="#d6effc"/><path d="M0 21.7 H65.5" stroke="#d6effc" stroke-width="1"/></svg>
<div class="h hb" style="left:1268.1px;top:864.2px;width:65.5px;height:28.3px;"><i class="ic"></i><span class="lb" style="transform:scaleX(0.76);letter-spacing:2.74px;">f..2</span></div>
<div class="bb" style="left:1268.1px;top:889px;width:65.5px;height:45.6px;"></div>
<svg style="left:1268.1px;top:893.5px" width="65.5" height="41" viewBox="0 0 65.5 41"><path d="M9.9 21.7L11.3 1L12.5 12.7L14.7 18.7L21.5 21L21.5 22.4L14.7 24.7L12.5 30.7L11.3 40ZM26.6 21.7L28 1L29.2 12.7L31.4 18.7L38.2 21L38.2 22.4L31.4 24.7L29.2 30.7L28 40ZM43.3 21.7L44.7 1L45.9 12.7L48.1 18.7L54.9 21L54.9 22.4L48.1 24.7L45.9 30.7L44.7 40ZM60 21.7L61.4 1L62.6 12.7L64.8 18.7L65.5 21L65.5 22.4L64.8 24.7L62.6 30.7L61.4 40Z" fill="#d6effc"/><path d="M0 21.7 H65.5" stroke="#d6effc" stroke-width="1"/></svg>
<div class="h hb" style="left:1334.9px;top:864.2px;width:65.7px;height:28.3px;"><i class="ic"></i><span class="lb" style="transform:scaleX(0.76);letter-spacing:2.74px;">f..2</span></div>
<div class="bb" style="left:1334.9px;top:889px;width:65.7px;height:45.6px;"></div>
<svg style="left:1334.9px;top:893.5px" width="65.7" height="41" viewBox="0 0 65.7 41"><path d="M9.9 21.7L11.3 1L12.5 12.7L14.7 18.7L21.5 21L21.5 22.4L14.7 24.7L12.5 30.7L11.3 40ZM26.6 21.7L28 1L29.2 12.7L31.4 18.7L38.2 21L38.2 22.4L31.4 24.7L29.2 30.7L28 40ZM43.3 21.7L44.7 1L45.9 12.7L48.1 18.7L54.9 21L54.9 22.4L48.1 24.7L45.9 30.7L44.7 40ZM60 21.7L61.4 1L62.6 12.7L64.8 18.7L65.7 21L65.7 22.4L64.8 24.7L62.6 30.7L61.4 40Z" fill="#d6effc"/><path d="M0 21.7 H65.7" stroke="#d6effc" stroke-width="1"/></svg>
<div class="h hb" style="left:1468.4px;top:864.2px;width:65.5px;height:28.3px;"><i class="ic"></i><span class="lb" style="transform:scaleX(0.76);letter-spacing:2.74px;">f..2</span></div>
<div class="bb" style="left:1468.4px;top:889px;width:65.5px;height:45.6px;"></div>
<svg style="left:1468.4px;top:893.5px" width="65.5" height="41" viewBox="0 0 65.5 41"><path d="M9.9 21.7L11.3 1L12.5 12.7L14.7 18.7L21.5 21L21.5 22.4L14.7 24.7L12.5 30.7L11.3 40ZM26.6 21.7L28 1L29.2 12.7L31.4 18.7L38.2 21L38.2 22.4L31.4 24.7L29.2 30.7L28 40ZM43.3 21.7L44.7 1L45.9 12.7L48.1 18.7L54.9 21L54.9 22.4L48.1 24.7L45.9 30.7L44.7 40ZM60 21.7L61.4 1L62.6 12.7L64.8 18.7L65.5 21L65.5 22.4L64.8 24.7L62.6 30.7L61.4 40Z" fill="#d6effc"/><path d="M0 21.7 H65.5" stroke="#d6effc" stroke-width="1"/></svg>
<div class="h hb" style="left:1535.2px;top:864.2px;width:60.7px;height:28.3px;"><i class="ic"></i><span class="lb" style="transform:scaleX(0.76);letter-spacing:2.74px;">f..2</span></div>
<div class="bb" style="left:1535.2px;top:889px;width:60.7px;height:45.6px;"></div>
<svg style="left:1535.2px;top:893.5px" width="60.7" height="41" viewBox="0 0 60.7 41"><path d="M9.9 21.7L11.3 1L12.5 12.7L14.7 18.7L21.5 21L21.5 22.4L14.7 24.7L12.5 30.7L11.3 40ZM26.6 21.7L28 1L29.2 12.7L31.4 18.7L38.2 21L38.2 22.4L31.4 24.7L29.2 30.7L28 40ZM43.3 21.7L44.7 1L45.9 12.7L48.1 18.7L54.9 21L54.9 22.4L48.1 24.7L45.9 30.7L44.7 40Z" fill="#d6effc"/><path d="M0 21.7 H60.7" stroke="#d6effc" stroke-width="1"/></svg>
<div class="h hb" style="left:1601.9px;top:864.2px;width:65.5px;height:28.3px;"><i class="ic"></i><span class="lb" style="transform:scaleX(0.76);letter-spacing:2.74px;">f..2</span></div>
<div class="bb" style="left:1601.9px;top:889px;width:65.5px;height:45.6px;"></div>
<svg style="left:1601.9px;top:893.5px" width="65.5" height="41" viewBox="0 0 65.5 41"><path d="M9.9 21.7L11.3 1L12.5 12.7L14.7 18.7L21.5 21L21.5 22.4L14.7 24.7L12.5 30.7L11.3 40ZM26.6 21.7L28 1L29.2 12.7L31.4 18.7L38.2 21L38.2 22.4L31.4 24.7L29.2 30.7L28 40ZM43.3 21.7L44.7 1L45.9 12.7L48.1 18.7L54.9 21L54.9 22.4L48.1 24.7L45.9 30.7L44.7 40ZM60 21.7L61.4 1L62.6 12.7L64.8 18.7L65.5 21L65.5 22.4L64.8 24.7L62.6 30.7L61.4 40Z" fill="#d6effc"/><path d="M0 21.7 H65.5" stroke="#d6effc" stroke-width="1"/></svg>
<div class="h hb" style="left:1668.7px;top:864.2px;width:65.5px;height:28.3px;"><i class="ic"></i><span class="lb" style="transform:scaleX(0.76);letter-spacing:2.74px;">f..2</span></div>
<div class="bb" style="left:1668.7px;top:889px;width:65.5px;height:45.6px;"></div>
<svg style="left:1668.7px;top:893.5px" width="65.5" height="41" viewBox="0 0 65.5 41"><path d="M9.9 21.7L11.3 1L12.5 12.7L14.7 18.7L21.5 21L21.5 22.4L14.7 24.7L12.5 30.7L11.3 40ZM26.6 21.7L28 1L29.2 12.7L31.4 18.7L38.2 21L38.2 22.4L31.4 24.7L29.2 30.7L28 40ZM43.3 21.7L44.7 1L45.9 12.7L48.1 18.7L54.9 21L54.9 22.4L48.1 24.7L45.9 30.7L44.7 40ZM60 21.7L61.4 1L62.6 12.7L64.8 18.7L65.5 21L65.5 22.4L64.8 24.7L62.6 30.7L61.4 40Z" fill="#d6effc"/><path d="M0 21.7 H65.5" stroke="#d6effc" stroke-width="1"/></svg>
<div class="h hb" style="left:1735.5px;top:864.2px;width:65.5px;height:28.3px;"><i class="ic"></i><span class="lb" style="transform:scaleX(0.76);letter-spacing:2.74px;">f..2</span></div>
<div class="bb" style="left:1735.5px;top:889px;width:65.5px;height:45.6px;"></div>
<svg style="left:1735.5px;top:893.5px" width="65.5" height="41" viewBox="0 0 65.5 41"><path d="M9.9 21.7L11.3 1L12.5 12.7L14.7 18.7L21.5 21L21.5 22.4L14.7 24.7L12.5 30.7L11.3 40ZM26.6 21.7L28 1L29.2 12.7L31.4 18.7L38.2 21L38.2 22.4L31.4 24.7L29.2 30.7L28 40ZM43.3 21.7L44.7 1L45.9 12.7L48.1 18.7L54.9 21L54.9 22.4L48.1 24.7L45.9 30.7L44.7 40ZM60 21.7L61.4 1L62.6 12.7L64.8 18.7L65.5 21L65.5 22.4L64.8 24.7L62.6 30.7L61.4 40Z" fill="#d6effc"/><path d="M0 21.7 H65.5" stroke="#d6effc" stroke-width="1"/></svg>
<div class="h hb" style="left:1802.2px;top:864.2px;width:49.4px;height:28.3px;"><i class="ic"></i><span class="lb mu" style="transform:scaleX(0.76);letter-spacing:3.16px;">f..</span></div>
<div class="bb" style="left:1802.2px;top:889px;width:49.4px;height:45.6px;"></div>
<svg style="left:1802.2px;top:893.5px" width="49.4" height="41" viewBox="0 0 49.4 41"><path d="M9.9 21.7L11.3 1L12.5 12.7L14.7 18.7L21.5 21L21.5 22.4L14.7 24.7L12.5 30.7L11.3 40ZM26.6 21.7L28 1L29.2 12.7L31.4 18.7L38.2 21L38.2 22.4L31.4 24.7L29.2 30.7L28 40ZM43.3 21.7L44.7 1L45.9 12.7L48.1 18.7L49.4 21L49.4 22.4L48.1 24.7L45.9 30.7L44.7 40Z" fill="#d6effc"/><path d="M0 21.7 H49.4" stroke="#d6effc" stroke-width="1"/></svg>
<div class="br" style="left:1201px;top:1065px;width:262.5px;height:45.6px;"></div>
<div class="" style="left:1202px;top:1073.5px;width:261.5px;height:3px;background:repeating-linear-gradient(90deg,#e9a19c 0,#e9a19c 1px,transparent 1px,transparent 2.1px,#e9a19c 2.1px,#e9a19c 3.1px,transparent 3.1px,transparent 5.2px,#e9a19c 5.2px,#e9a19c 7.2px,transparent 7.2px,transparent 8.345px);opacity:.8"></div>
<div class="h hr" style="left:1201px;top:1040.2px;width:-0.7px;height:28.4px;"><i class="pi"></i></div>
<div class="h hr" style="left:1201.4px;top:1040.2px;width:32.3px;height:28.4px;"><i class="pi"></i></div>
<div class="h hr" style="left:1234.8px;top:1040.2px;width:32.3px;height:28.4px;"><i class="pi"></i></div>
<div class="h hr" style="left:1268.1px;top:1040.2px;width:32.3px;height:28.4px;"><i class="pi"></i></div>
<div class="h hr" style="left:1301.5px;top:1040.2px;width:32.3px;height:28.4px;"><i class="pi"></i></div>
<div class="h hr" style="left:1334.9px;top:1040.2px;width:32.3px;height:28.4px;"><i class="pi"></i></div>
<div class="h hr" style="left:1368.3px;top:1040.2px;width:32.3px;height:28.4px;"><i class="pi"></i></div>
<div class="h hr" style="left:1401.7px;top:1040.2px;width:32.3px;height:28.4px;"><i class="pi"></i></div>
<div class="h hr" style="left:1435px;top:1040.2px;width:28.5px;height:28.4px;"><i class="pi"></i></div>
<div class="br" style="left:1468.3px;top:1065px;width:266.7px;height:45.6px;"></div>
<div class="" style="left:1469.3px;top:1073.5px;width:265.7px;height:3px;background:repeating-linear-gradient(90deg,#e9a19c 0,#e9a19c 1px,transparent 1px,transparent 2.1px,#e9a19c 2.1px,#e9a19c 3.1px,transparent 3.1px,transparent 5.2px,#e9a19c 5.2px,#e9a19c 7.2px,transparent 7.2px,transparent 8.345px);opacity:.8"></div>
<div class="h hr" style="left:1468.3px;top:1040.2px;width:32.4px;height:28.4px;"><i class="pi"></i></div>
<div class="h hr" style="left:1501.8px;top:1040.2px;width:32.3px;height:28.4px;"><i class="pi"></i></div>
<div class="h hr" style="left:1535.2px;top:1040.2px;width:32.3px;height:28.4px;"><i class="pi"></i></div>
<div class="h hr" style="left:1568.6px;top:1040.2px;width:32.3px;height:28.4px;"><i class="pi"></i></div>
<div class="h hr" style="left:1601.9px;top:1040.2px;width:32.3px;height:28.4px;"><i class="pi"></i></div>
<div class="h hr" style="left:1635.3px;top:1040.2px;width:32.3px;height:28.4px;"><i class="pi"></i></div>
<div class="h hr" style="left:1668.7px;top:1040.2px;width:32.3px;height:28.4px;"><i class="pi"></i></div>
<div class="h hr" style="left:1702.1px;top:1040.2px;width:32.3px;height:28.4px;"><i class="pi"></i></div>
<div class="br" style="left:133.5px;top:1225px;width:16px;height:45.6px;"></div>
<div class="h hr" style="left:133.5px;top:1200.2px;width:16px;height:28.4px;"><i class="pi"></i></div>
<div class="" style="left:133.5px;top:1234px;width:8px;height:2.8px;background:#ee9a96"></div>
<div class="br" style="left:200.6px;top:1225px;width:16px;height:45.6px;"></div>
<div class="h hr" style="left:200.6px;top:1200.2px;width:16px;height:28.4px;"><i class="pi"></i></div>
<div class="" style="left:200.6px;top:1234px;width:8px;height:2.8px;background:#ee9a96"></div>
<div class="br" style="left:334.3px;top:1225px;width:16px;height:45.6px;"></div>
<div class="h hr" style="left:334.3px;top:1200.2px;width:16px;height:28.4px;"><i class="pi"></i></div>
<div class="" style="left:334.3px;top:1234px;width:8px;height:2.8px;background:#ee9a96"></div>
<div class="br" style="left:425.3px;top:1225px;width:16px;height:45.6px;"></div>
<div class="h hr" style="left:425.3px;top:1200.2px;width:16px;height:28.4px;"><i class="pi"></i></div>
<div class="" style="left:425.3px;top:1234px;width:8px;height:2.8px;background:#ee9a96"></div>
<div class="br" style="left:492.4px;top:1225px;width:16px;height:45.6px;"></div>
<div class="h hr" style="left:492.4px;top:1200.2px;width:16px;height:28.4px;"><i class="pi"></i></div>
<div class="" style="left:492.4px;top:1234px;width:8px;height:2.8px;background:#ee9a96"></div>
<div class="br" style="left:584.2px;top:1225px;width:16px;height:45.6px;"></div>
<div class="h hr" style="left:584.2px;top:1200.2px;width:16px;height:28.4px;"><i class="pi"></i></div>
<div class="" style="left:584.2px;top:1234px;width:8px;height:2.8px;background:#ee9a96"></div>
<div class="br" style="left:659.5px;top:1225px;width:16px;height:45.6px;"></div>
<div class="h hr" style="left:659.5px;top:1200.2px;width:16px;height:28.4px;"><i class="pi"></i></div>
<div class="" style="left:659.5px;top:1234px;width:8px;height:2.8px;background:#ee9a96"></div>
<div class="br" style="left:930.4px;top:1225px;width:16px;height:45.6px;"></div>
<div class="h hr" style="left:930.4px;top:1200.2px;width:16px;height:28.4px;"><i class="pi"></i></div>
<div class="" style="left:930.4px;top:1234px;width:8px;height:2.8px;background:#ee9a96"></div>
<div class="br" style="left:968.2px;top:1225px;width:16px;height:45.6px;"></div>
<div class="h hr" style="left:968.2px;top:1200.2px;width:16px;height:28.4px;"><i class="pi"></i></div>
<div class="" style="left:968.2px;top:1234px;width:8px;height:2.8px;background:#ee9a96"></div>
<div class="br" style="left:1001.2px;top:1225px;width:16px;height:45.6px;"></div>
<div class="h hr" style="left:1001.2px;top:1200.2px;width:16px;height:28.4px;"><i class="pi"></i></div>
<div class="" style="left:1001.2px;top:1234px;width:8px;height:2.8px;background:#ee9a96"></div>
<div class="br" style="left:1034.5px;top:1225px;width:16px;height:45.6px;"></div>
<div class="h hr" style="left:1034.5px;top:1200.2px;width:16px;height:28.4px;"><i class="pi"></i></div>
<div class="" style="left:1034.5px;top:1234px;width:8px;height:2.8px;background:#ee9a96"></div>
<div class="br" style="left:1068px;top:1225px;width:16px;height:45.6px;"></div>
<div class="h hr" style="left:1068px;top:1200.2px;width:16px;height:28.4px;"><i class="pi"></i></div>
<div class="" style="left:1068px;top:1234px;width:8px;height:2.8px;background:#ee9a96"></div>
<div class="br" style="left:1101px;top:1225px;width:16px;height:45.6px;"></div>
<div class="h hr" style="left:1101px;top:1200.2px;width:16px;height:28.4px;"><i class="pi"></i></div>
<div class="" style="left:1101px;top:1234px;width:8px;height:2.8px;background:#ee9a96"></div>
<div class="br" style="left:1135.2px;top:1225px;width:16px;height:45.6px;"></div>
<div class="h hr" style="left:1135.2px;top:1200.2px;width:16px;height:28.4px;"><i class="pi"></i></div>
<div class="" style="left:1135.2px;top:1234px;width:8px;height:2.8px;background:#ee9a96"></div>
<div class="br" style="left:1168.2px;top:1225px;width:16px;height:45.6px;"></div>
<div class="h hr" style="left:1168.2px;top:1200.2px;width:16px;height:28.4px;"><i class="pi"></i></div>
<div class="" style="left:1168.2px;top:1234px;width:8px;height:2.8px;background:#ee9a96"></div>
<div class="br" style="left:1201.3px;top:1225px;width:16px;height:45.6px;"></div>
<div class="h hr" style="left:1201.3px;top:1200.2px;width:16px;height:28.4px;"><i class="pi"></i></div>
<div class="" style="left:1201.3px;top:1234px;width:8px;height:2.8px;background:#ee9a96"></div>
<div class="br" style="left:1235.4px;top:1225px;width:16px;height:45.6px;"></div>
<div class="h hr" style="left:1235.4px;top:1200.2px;width:16px;height:28.4px;"><i class="pi"></i></div>
<div class="" style="left:1235.4px;top:1234px;width:8px;height:2.8px;background:#ee9a96"></div>
<div class="br" style="left:1268px;top:1225px;width:16px;height:45.6px;"></div>
<div class="h hr" style="left:1268px;top:1200.2px;width:16px;height:28.4px;"><i class="pi"></i></div>
<div class="" style="left:1268px;top:1234px;width:8px;height:2.8px;background:#ee9a96"></div>
<div class="br" style="left:1301.7px;top:1225px;width:16px;height:45.6px;"></div>
<div class="h hr" style="left:1301.7px;top:1200.2px;width:16px;height:28.4px;"><i class="pi"></i></div>
<div class="" style="left:1301.7px;top:1234px;width:8px;height:2.8px;background:#ee9a96"></div>
<div class="br" style="left:1335.3px;top:1225px;width:16px;height:45.6px;"></div>
<div class="h hr" style="left:1335.3px;top:1200.2px;width:16px;height:28.4px;"><i class="pi"></i></div>
<div class="" style="left:1335.3px;top:1234px;width:8px;height:2.8px;background:#ee9a96"></div>
<div class="br" style="left:1368.4px;top:1225px;width:16px;height:45.6px;"></div>
<div class="h hr" style="left:1368.4px;top:1200.2px;width:16px;height:28.4px;"><i class="pi"></i></div>
<div class="" style="left:1368.4px;top:1234px;width:8px;height:2.8px;background:#ee9a96"></div>
<div class="br" style="left:1643.4px;top:1225px;width:16px;height:45.6px;"></div>
<div class="h hr" style="left:1643.4px;top:1200.2px;width:16px;height:28.4px;"><i class="pi"></i></div>
<div class="" style="left:1643.4px;top:1234px;width:8px;height:2.8px;background:#ee9a96"></div>
<div class="br" style="left:1677px;top:1225px;width:16px;height:45.6px;"></div>
<div class="h hr" style="left:1677px;top:1200.2px;width:16px;height:28.4px;"><i class="pi"></i></div>
<div class="" style="left:1677px;top:1234px;width:8px;height:2.8px;background:#ee9a96"></div>
<div class="br" style="left:1760.7px;top:1225px;width:16px;height:45.6px;"></div>
<div class="h hr" style="left:1760.7px;top:1200.2px;width:16px;height:28.4px;"><i class="pi"></i></div>
<div class="" style="left:1760.7px;top:1234px;width:8px;height:2.8px;background:#ee9a96"></div>
<div class="br" style="left:1794.2px;top:1225px;width:16px;height:45.6px;"></div>
<div class="h hr" style="left:1794.2px;top:1200.2px;width:16px;height:28.4px;"><i class="pi"></i></div>
<div class="" style="left:1794.2px;top:1234px;width:8px;height:2.8px;background:#ee9a96"></div>
<div class="br" style="left:1827.3px;top:1225px;width:16px;height:45.6px;"></div>
<div class="h hr" style="left:1827.3px;top:1200.2px;width:16px;height:28.4px;"><i class="pi"></i></div>
<div class="" style="left:1827.3px;top:1234px;width:8px;height:2.8px;background:#ee9a96"></div>
<div class="br" style="left:1860.3px;top:1225px;width:16px;height:45.6px;"></div>
<div class="h hr" style="left:1860.3px;top:1200.2px;width:16px;height:28.4px;"><i class="pi"></i></div>
<div class="" style="left:1860.3px;top:1234px;width:8px;height:2.8px;background:#ee9a96"></div>
<div class="br" style="left:534.4px;top:1313px;width:124px;height:45.6px;"></div>
<div class="" style="left:535.4px;top:1321.5px;width:123px;height:3px;background:repeating-linear-gradient(90deg,#e9a19c 0,#e9a19c 1px,transparent 1px,transparent 2.1px,#e9a19c 2.1px,#e9a19c 3.1px,transparent 3.1px,transparent 5.2px,#e9a19c 5.2px,#e9a19c 7.2px,transparent 7.2px,transparent 8.345px);opacity:.8"></div>
<div class="h hr" style="left:534.4px;top:1288.2px;width:15px;height:28.4px;"><i class="pi"></i></div>
<div class="h hr" style="left:550.5px;top:1288.2px;width:15.6px;height:28.4px;"><i class="pi"></i></div>
<div class="h hr" style="left:567.2px;top:1288.2px;width:15.6px;height:28.4px;"><i class="pi"></i></div>
<div class="h hr" style="left:583.9px;top:1288.2px;width:15.6px;height:28.4px;"><i class="pi"></i></div>
<div class="h hr" style="left:600.5px;top:1288.2px;width:15.6px;height:28.4px;"><i class="pi"></i></div>
<div class="h hr" style="left:617.2px;top:1288.2px;width:15.6px;height:28.4px;"><i class="pi"></i></div>
<div class="h hr" style="left:633.9px;top:1288.2px;width:15.6px;height:28.4px;"><i class="pi"></i></div>
<div class="h hr" style="left:650.6px;top:1288.2px;width:7.8px;height:28.4px;"><i class="pi" style="opacity:.45"></i></div>
<div class="br" style="left:667.4px;top:1313px;width:129.3px;height:45.6px;"></div>
<div class="" style="left:668.4px;top:1321.5px;width:128.3px;height:3px;background:repeating-linear-gradient(90deg,#e9a19c 0,#e9a19c 1px,transparent 1px,transparent 2.1px,#e9a19c 2.1px,#e9a19c 3.1px,transparent 3.1px,transparent 5.2px,#e9a19c 5.2px,#e9a19c 7.2px,transparent 7.2px,transparent 8.345px);opacity:.8"></div>
<div class="h hr" style="left:667.4px;top:1288.2px;width:15.5px;height:28.4px;"><i class="pi"></i></div>
<div class="h hr" style="left:684px;top:1288.2px;width:15.6px;height:28.4px;"><i class="pi"></i></div>
<div class="h hr" style="left:700.7px;top:1288.2px;width:15.6px;height:28.4px;"><i class="pi"></i></div>
<div class="h hr" style="left:717.4px;top:1288.2px;width:15.6px;height:28.4px;"><i class="pi"></i></div>
<div class="h hr" style="left:734.1px;top:1288.2px;width:15.6px;height:28.4px;"><i class="pi"></i></div>
<div class="h hr" style="left:750.8px;top:1288.2px;width:15.6px;height:28.4px;"><i class="pi"></i></div>
<div class="h hr" style="left:767.4px;top:1288.2px;width:15.6px;height:28.4px;"><i class="pi"></i></div>
<div class="h hr" style="left:784.1px;top:1288.2px;width:12.6px;height:28.4px;"><i class="pi" style="opacity:.45"></i></div>
<div class="br" style="left:801px;top:1313px;width:128.6px;height:45.6px;"></div>
<div class="" style="left:802px;top:1321.5px;width:127.6px;height:3px;background:repeating-linear-gradient(90deg,#e9a19c 0,#e9a19c 1px,transparent 1px,transparent 2.1px,#e9a19c 2.1px,#e9a19c 3.1px,transparent 3.1px,transparent 5.2px,#e9a19c 5.2px,#e9a19c 7.2px,transparent 7.2px,transparent 8.345px);opacity:.8"></div>
<div class="h hr" style="left:801px;top:1288.2px;width:15.4px;height:28.4px;"><i class="pi"></i></div>
<div class="h hr" style="left:817.5px;top:1288.2px;width:15.6px;height:28.4px;"><i class="pi"></i></div>
<div class="h hr" style="left:834.2px;top:1288.2px;width:15.6px;height:28.4px;"><i class="pi"></i></div>
<div class="h hr" style="left:850.9px;top:1288.2px;width:15.6px;height:28.4px;"><i class="pi"></i></div>
<div class="h hr" style="left:867.6px;top:1288.2px;width:15.6px;height:28.4px;"><i class="pi"></i></div>
<div class="h hr" style="left:884.3px;top:1288.2px;width:15.6px;height:28.4px;"><i class="pi"></i></div>
<div class="h hr" style="left:901px;top:1288.2px;width:15.6px;height:28.4px;"><i class="pi"></i></div>
<div class="h hr" style="left:917.7px;top:1288.2px;width:11.9px;height:28.4px;"><i class="pi" style="opacity:.45"></i></div>
<div class="br" style="left:951.4px;top:1313px;width:16.2px;height:45.6px;"></div>
<div class="" style="left:952.4px;top:1321.5px;width:15.2px;height:3px;background:repeating-linear-gradient(90deg,#e9a19c 0,#e9a19c 1px,transparent 1px,transparent 2.1px,#e9a19c 2.1px,#e9a19c 3.1px,transparent 3.1px,transparent 5.2px,#e9a19c 5.2px,#e9a19c 7.2px,transparent 7.2px,transparent 8.345px);opacity:.8"></div>
<div class="h hr" style="left:951.4px;top:1288.2px;width:15.2px;height:28.4px;"><i class="pi"></i></div>
<div class="br" style="left:984.4px;top:1313px;width:12.3px;height:45.6px;"></div>
<div class="" style="left:985.4px;top:1321.5px;width:11.3px;height:3px;background:repeating-linear-gradient(90deg,#e9a19c 0,#e9a19c 1px,transparent 1px,transparent 2.1px,#e9a19c 2.1px,#e9a19c 3.1px,transparent 3.1px,transparent 5.2px,#e9a19c 5.2px,#e9a19c 7.2px,transparent 7.2px,transparent 8.345px);opacity:.8"></div>
<div class="h hr" style="left:984.4px;top:1288.2px;width:12.3px;height:28.4px;"><i class="pi" style="opacity:.45"></i></div>
<div class="br" style="left:1018px;top:1313px;width:16px;height:45.6px;"></div>
<div class="" style="left:1019px;top:1321.5px;width:15px;height:3px;background:repeating-linear-gradient(90deg,#e9a19c 0,#e9a19c 1px,transparent 1px,transparent 2.1px,#e9a19c 2.1px,#e9a19c 3.1px,transparent 3.1px,transparent 5.2px,#e9a19c 5.2px,#e9a19c 7.2px,transparent 7.2px,transparent 8.345px);opacity:.8"></div>
<div class="h hr" style="left:1018px;top:1288.2px;width:15.4px;height:28.4px;"><i class="pi"></i></div>
<div class="br" style="left:1068px;top:1313px;width:332.6px;height:45.6px;"></div>
<div class="" style="left:1069px;top:1321.5px;width:331.6px;height:3px;background:repeating-linear-gradient(90deg,#e9a19c 0,#e9a19c 1px,transparent 1px,transparent 2.1px,#e9a19c 2.1px,#e9a19c 3.1px,transparent 3.1px,transparent 5.2px,#e9a19c 5.2px,#e9a19c 7.2px,transparent 7.2px,transparent 8.345px);opacity:.8"></div>
<div class="h hr" style="left:1068px;top:1288.2px;width:15.5px;height:28.4px;"><i class="pi"></i></div>
<div class="h hr" style="left:1084.6px;top:1288.2px;width:15.6px;height:28.4px;"><i class="pi"></i></div>
<div class="h hr" style="left:1101.2px;top:1288.2px;width:15.6px;height:28.4px;"><i class="pi"></i></div>
<div class="h hr" style="left:1117.9px;top:1288.2px;width:15.6px;height:28.4px;"><i class="pi"></i></div>
<div class="h hr" style="left:1134.6px;top:1288.2px;width:15.6px;height:28.4px;"><i class="pi"></i></div>
<div class="h hr" style="left:1151.3px;top:1288.2px;width:15.6px;height:28.4px;"><i class="pi"></i></div>
<div class="h hr" style="left:1168px;top:1288.2px;width:15.6px;height:28.4px;"><i class="pi"></i></div>
<div class="h hr" style="left:1184.7px;top:1288.2px;width:15.6px;height:28.4px;"><i class="pi"></i></div>
<div class="h hr" style="left:1201.4px;top:1288.2px;width:15.6px;height:28.4px;"><i class="pi"></i></div>
<div class="h hr" style="left:1218.1px;top:1288.2px;width:15.6px;height:28.4px;"><i class="pi"></i></div>
<div class="h hr" style="left:1234.8px;top:1288.2px;width:15.6px;height:28.4px;"><i class="pi"></i></div>
<div class="h hr" style="left:1251.5px;top:1288.2px;width:15.6px;height:28.4px;"><i class="pi"></i></div>
<div class="h hr" style="left:1268.1px;top:1288.2px;width:15.6px;height:28.4px;"><i class="pi"></i></div>
<div class="h hr" style="left:1284.8px;top:1288.2px;width:15.6px;height:28.4px;"><i class="pi"></i></div>
<div class="h hr" style="left:1301.5px;top:1288.2px;width:15.6px;height:28.4px;"><i class="pi"></i></div>
<div class="h hr" style="left:1318.2px;top:1288.2px;width:15.6px;height:28.4px;"><i class="pi"></i></div>
<div class="h hr" style="left:1334.9px;top:1288.2px;width:15.6px;height:28.4px;"><i class="pi"></i></div>
<div class="h hr" style="left:1351.6px;top:1288.2px;width:15.6px;height:28.4px;"><i class="pi"></i></div>
<div class="h hr" style="left:1368.3px;top:1288.2px;width:15.6px;height:28.4px;"><i class="pi"></i></div>
<div class="h hr" style="left:1385px;top:1288.2px;width:15.6px;height:28.4px;"><i class="pi"></i></div>
<div class="br" style="left:1602.6px;top:1313px;width:32.2px;height:45.6px;"></div>
<div class="" style="left:1603.6px;top:1321.5px;width:31.2px;height:3px;background:repeating-linear-gradient(90deg,#e9a19c 0,#e9a19c 1px,transparent 1px,transparent 2.1px,#e9a19c 2.1px,#e9a19c 3.1px,transparent 3.1px,transparent 5.2px,#e9a19c 5.2px,#e9a19c 7.2px,transparent 7.2px,transparent 8.345px);opacity:.8"></div>
<div class="h hr" style="left:1602.6px;top:1288.2px;width:14.9px;height:28.4px;"><i class="pi"></i></div>
<div class="h hr" style="left:1618.6px;top:1288.2px;width:15.6px;height:28.4px;"><i class="pi"></i></div>
<div class="br" style="left:1652.4px;top:1313px;width:15.4px;height:45.6px;"></div>
<div class="" style="left:1653.4px;top:1321.5px;width:14.4px;height:3px;background:repeating-linear-gradient(90deg,#e9a19c 0,#e9a19c 1px,transparent 1px,transparent 2.1px,#e9a19c 2.1px,#e9a19c 3.1px,transparent 3.1px,transparent 5.2px,#e9a19c 5.2px,#e9a19c 7.2px,transparent 7.2px,transparent 8.345px);opacity:.8"></div>
<div class="h hr" style="left:1652.4px;top:1288.2px;width:15.2px;height:28.4px;"><i class="pi"></i></div>
<div class="br" style="left:1685.4px;top:1313px;width:44.8px;height:45.6px;"></div>
<div class="" style="left:1686.4px;top:1321.5px;width:43.8px;height:3px;background:repeating-linear-gradient(90deg,#e9a19c 0,#e9a19c 1px,transparent 1px,transparent 2.1px,#e9a19c 2.1px,#e9a19c 3.1px,transparent 3.1px,transparent 5.2px,#e9a19c 5.2px,#e9a19c 7.2px,transparent 7.2px,transparent 8.345px);opacity:.8"></div>
<div class="h hr" style="left:1685.4px;top:1288.2px;width:15.6px;height:28.4px;"><i class="pi"></i></div>
<div class="h hr" style="left:1702.1px;top:1288.2px;width:15.6px;height:28.4px;"><i class="pi"></i></div>
<div class="h hr" style="left:1718.8px;top:1288.2px;width:11.4px;height:28.4px;"><i class="pi" style="opacity:.45"></i></div>
<div class="br" style="left:1735.5px;top:1313px;width:116.1px;height:45.6px;"></div>
<div class="" style="left:1736.5px;top:1321.5px;width:115.1px;height:3px;background:repeating-linear-gradient(90deg,#e9a19c 0,#e9a19c 1px,transparent 1px,transparent 2.1px,#e9a19c 2.1px,#e9a19c 3.1px,transparent 3.1px,transparent 5.2px,#e9a19c 5.2px,#e9a19c 7.2px,transparent 7.2px,transparent 8.345px);opacity:.8"></div>
<div class="h hr" style="left:1735.5px;top:1288.2px;width:15.5px;height:28.4px;"><i class="pi"></i></div>
<div class="h hr" style="left:1752.1px;top:1288.2px;width:15.6px;height:28.4px;"><i class="pi"></i></div>
<div class="h hr" style="left:1768.8px;top:1288.2px;width:15.6px;height:28.4px;"><i class="pi"></i></div>
<div class="h hr" style="left:1785.5px;top:1288.2px;width:15.6px;height:28.4px;"><i class="pi"></i></div>
<div class="h hr" style="left:1802.2px;top:1288.2px;width:15.6px;height:28.4px;"><i class="pi"></i></div>
<div class="h hr" style="left:1818.9px;top:1288.2px;width:15.6px;height:28.4px;"><i class="pi"></i></div>
<div class="h hr" style="left:1835.6px;top:1288.2px;width:15.6px;height:28.4px;"><i class="pi"></i></div>
<div class="" style="left:734px;top:1338px;width:32px;height:2px;background:repeating-linear-gradient(90deg,transparent 0,transparent 1px,#d98a86 1px,#d98a86 2px,transparent 2px,transparent 4px,#d98a86 4px,#d98a86 5px,transparent 5px,transparent 7px,#d98a86 7px,#d98a86 8px,transparent 8px,transparent 16.69px);opacity:.55"></div>
<div class="" style="left:817px;top:1338px;width:17px;height:2px;background:repeating-linear-gradient(90deg,transparent 0,transparent 1px,#d98a86 1px,#d98a86 2px,transparent 2px,transparent 4px,#d98a86 4px,#d98a86 5px,transparent 5px,transparent 7px,#d98a86 7px,#d98a86 8px,transparent 8px,transparent 16.69px);opacity:.55"></div>
<div class="" style="left:850px;top:1338px;width:17px;height:2px;background:repeating-linear-gradient(90deg,transparent 0,transparent 1px,#d98a86 1px,#d98a86 2px,transparent 2px,transparent 4px,#d98a86 4px,#d98a86 5px,transparent 5px,transparent 7px,#d98a86 7px,#d98a86 8px,transparent 8px,transparent 16.69px);opacity:.55"></div>
<div class="" style="left:884px;top:1338px;width:17px;height:2px;background:repeating-linear-gradient(90deg,transparent 0,transparent 1px,#d98a86 1px,#d98a86 2px,transparent 2px,transparent 4px,#d98a86 4px,#d98a86 5px,transparent 5px,transparent 7px,#d98a86 7px,#d98a86 8px,transparent 8px,transparent 16.69px);opacity:.55"></div>
<div class="" style="left:917px;top:1338px;width:12px;height:2px;background:repeating-linear-gradient(90deg,transparent 0,transparent 1px,#d98a86 1px,#d98a86 2px,transparent 2px,transparent 4px,#d98a86 4px,#d98a86 5px,transparent 5px,transparent 7px,#d98a86 7px,#d98a86 8px,transparent 8px,transparent 16.69px);opacity:.55"></div>
<div class="" style="left:951.4px;top:1338px;width:16.2px;height:2px;background:repeating-linear-gradient(90deg,transparent 0,transparent 1px,#d98a86 1px,#d98a86 2px,transparent 2px,transparent 4px,#d98a86 4px,#d98a86 5px,transparent 5px,transparent 7px,#d98a86 7px,#d98a86 8px,transparent 8px,transparent 16.69px);opacity:.55"></div>
<div class="" style="left:984.4px;top:1338px;width:12.3px;height:2px;background:repeating-linear-gradient(90deg,transparent 0,transparent 1px,#d98a86 1px,#d98a86 2px,transparent 2px,transparent 4px,#d98a86 4px,#d98a86 5px,transparent 5px,transparent 7px,#d98a86 7px,#d98a86 8px,transparent 8px,transparent 16.69px);opacity:.55"></div>
<div class="" style="left:1618px;top:1338px;width:16.8px;height:2px;background:repeating-linear-gradient(90deg,transparent 0,transparent 1px,#d98a86 1px,#d98a86 2px,transparent 2px,transparent 4px,#d98a86 4px,#d98a86 5px,transparent 5px,transparent 7px,#d98a86 7px,#d98a86 8px,transparent 8px,transparent 16.69px);opacity:.55"></div>
<div class="" style="left:1652.4px;top:1338px;width:15.4px;height:2px;background:repeating-linear-gradient(90deg,transparent 0,transparent 1px,#d98a86 1px,#d98a86 2px,transparent 2px,transparent 4px,#d98a86 4px,#d98a86 5px,transparent 5px,transparent 7px,#d98a86 7px,#d98a86 8px,transparent 8px,transparent 16.69px);opacity:.55"></div>
<div class="" style="left:1685.4px;top:1338px;width:16.6px;height:2px;background:repeating-linear-gradient(90deg,transparent 0,transparent 1px,#d98a86 1px,#d98a86 2px,transparent 2px,transparent 4px,#d98a86 4px,#d98a86 5px,transparent 5px,transparent 7px,#d98a86 7px,#d98a86 8px,transparent 8px,transparent 16.69px);opacity:.55"></div>
<div class="" style="left:1718px;top:1338px;width:12px;height:2px;background:repeating-linear-gradient(90deg,transparent 0,transparent 1px,#d98a86 1px,#d98a86 2px,transparent 2px,transparent 4px,#d98a86 4px,#d98a86 5px,transparent 5px,transparent 7px,#d98a86 7px,#d98a86 8px,transparent 8px,transparent 16.69px);opacity:.55"></div>
<div class="" style="left:1752px;top:1338px;width:34px;height:2px;background:repeating-linear-gradient(90deg,transparent 0,transparent 1px,#d98a86 1px,#d98a86 2px,transparent 2px,transparent 4px,#d98a86 4px,#d98a86 5px,transparent 5px,transparent 7px,#d98a86 7px,#d98a86 8px,transparent 8px,transparent 16.69px);opacity:.55"></div>
<div class="" style="left:1802px;top:1338px;width:33px;height:2px;background:repeating-linear-gradient(90deg,transparent 0,transparent 1px,#d98a86 1px,#d98a86 2px,transparent 2px,transparent 4px,#d98a86 4px,#d98a86 5px,transparent 5px,transparent 7px,#d98a86 7px,#d98a86 8px,transparent 8px,transparent 16.69px);opacity:.55"></div>
<div class="br" style="left:0px;top:1393px;width:249.6px;height:45.6px;"></div>
<div class="" style="left:1px;top:1401.5px;width:248.6px;height:3px;background:repeating-linear-gradient(90deg,#e9a19c 0,#e9a19c 1px,transparent 1px,transparent 2.1px,#e9a19c 2.1px,#e9a19c 3.1px,transparent 3.1px,transparent 5.2px,#e9a19c 5.2px,#e9a19c 7.2px,transparent 7.2px,transparent 8.345px);opacity:.8"></div>
<div class="h hr" style="left:0px;top:1368.2px;width:15.3px;height:28.4px;"><i class="pi"></i></div>
<div class="h hr" style="left:16.4px;top:1368.2px;width:15.6px;height:28.4px;"><i class="pi"></i></div>
<div class="h hr" style="left:33.1px;top:1368.2px;width:15.6px;height:28.4px;"><i class="pi"></i></div>
<div class="h hr" style="left:49.8px;top:1368.2px;width:15.6px;height:28.4px;"><i class="pi"></i></div>
<div class="h hr" style="left:66.5px;top:1368.2px;width:15.6px;height:28.4px;"><i class="pi"></i></div>
<div class="h hr" style="left:83.2px;top:1368.2px;width:15.6px;height:28.4px;"><i class="pi"></i></div>
<div class="h hr" style="left:99.8px;top:1368.2px;width:15.6px;height:28.4px;"><i class="pi"></i></div>
<div class="h hr" style="left:116.5px;top:1368.2px;width:15.6px;height:28.4px;"><i class="pi"></i></div>
<div class="h hr" style="left:133.2px;top:1368.2px;width:15.6px;height:28.4px;"><i class="pi"></i></div>
<div class="h hr" style="left:149.9px;top:1368.2px;width:15.6px;height:28.4px;"><i class="pi"></i></div>
<div class="h hr" style="left:166.6px;top:1368.2px;width:15.6px;height:28.4px;"><i class="pi"></i></div>
<div class="h hr" style="left:183.3px;top:1368.2px;width:15.6px;height:28.4px;"><i class="pi"></i></div>
<div class="h hr" style="left:200px;top:1368.2px;width:15.6px;height:28.4px;"><i class="pi"></i></div>
<div class="h hr" style="left:216.7px;top:1368.2px;width:15.6px;height:28.4px;"><i class="pi"></i></div>
<div class="h hr" style="left:233.4px;top:1368.2px;width:15.6px;height:28.4px;"><i class="pi"></i></div>
<div class="br" style="left:267px;top:1393px;width:129px;height:45.6px;"></div>
<div class="" style="left:268px;top:1401.5px;width:128px;height:3px;background:repeating-linear-gradient(90deg,#e9a19c 0,#e9a19c 1px,transparent 1px,transparent 2.1px,#e9a19c 2.1px,#e9a19c 3.1px,transparent 3.1px,transparent 5.2px,#e9a19c 5.2px,#e9a19c 7.2px,transparent 7.2px,transparent 8.345px);opacity:.8"></div>
<div class="h hr" style="left:267px;top:1368.2px;width:15.3px;height:28.4px;"><i class="pi"></i></div>
<div class="h hr" style="left:283.4px;top:1368.2px;width:15.6px;height:28.4px;"><i class="pi"></i></div>
<div class="h hr" style="left:300.1px;top:1368.2px;width:15.6px;height:28.4px;"><i class="pi"></i></div>
<div class="h hr" style="left:316.8px;top:1368.2px;width:15.6px;height:28.4px;"><i class="pi"></i></div>
<div class="h hr" style="left:333.5px;top:1368.2px;width:15.6px;height:28.4px;"><i class="pi"></i></div>
<div class="h hr" style="left:350.2px;top:1368.2px;width:15.6px;height:28.4px;"><i class="pi"></i></div>
<div class="h hr" style="left:366.9px;top:1368.2px;width:15.6px;height:28.4px;"><i class="pi"></i></div>
<div class="h hr" style="left:383.6px;top:1368.2px;width:12.4px;height:28.4px;"><i class="pi" style="opacity:.45"></i></div>
<div class="br" style="left:400px;top:1393px;width:133.6px;height:45.6px;"></div>
<div class="" style="left:401px;top:1401.5px;width:132.6px;height:3px;background:repeating-linear-gradient(90deg,#e9a19c 0,#e9a19c 1px,transparent 1px,transparent 2.1px,#e9a19c 2.1px,#e9a19c 3.1px,transparent 3.1px,transparent 5.2px,#e9a19c 5.2px,#e9a19c 7.2px,transparent 7.2px,transparent 8.345px);opacity:.8"></div>
<div class="h hr" style="left:400px;top:1368.2px;width:15.9px;height:28.4px;"><i class="pi"></i></div>
<div class="h hr" style="left:417px;top:1368.2px;width:15.6px;height:28.4px;"><i class="pi"></i></div>
<div class="h hr" style="left:433.6px;top:1368.2px;width:15.6px;height:28.4px;"><i class="pi"></i></div>
<div class="h hr" style="left:450.3px;top:1368.2px;width:15.6px;height:28.4px;"><i class="pi"></i></div>
<div class="h hr" style="left:467px;top:1368.2px;width:15.6px;height:28.4px;"><i class="pi"></i></div>
<div class="h hr" style="left:483.7px;top:1368.2px;width:15.6px;height:28.4px;"><i class="pi"></i></div>
<div class="h hr" style="left:500.4px;top:1368.2px;width:15.6px;height:28.4px;"><i class="pi"></i></div>
<div class="h hr" style="left:517.1px;top:1368.2px;width:15.6px;height:28.4px;"><i class="pi"></i></div>
<div class="br" style="left:667.4px;top:1393px;width:129.3px;height:45.6px;"></div>
<div class="" style="left:668.4px;top:1401.5px;width:128.3px;height:3px;background:repeating-linear-gradient(90deg,#e9a19c 0,#e9a19c 1px,transparent 1px,transparent 2.1px,#e9a19c 2.1px,#e9a19c 3.1px,transparent 3.1px,transparent 5.2px,#e9a19c 5.2px,#e9a19c 7.2px,transparent 7.2px,transparent 8.345px);opacity:.8"></div>
<div class="h hr" style="left:667.4px;top:1368.2px;width:15.5px;height:28.4px;"><i class="pi"></i></div>
<div class="h hr" style="left:684px;top:1368.2px;width:15.6px;height:28.4px;"><i class="pi"></i></div>
<div class="h hr" style="left:700.7px;top:1368.2px;width:15.6px;height:28.4px;"><i class="pi"></i></div>
<div class="h hr" style="left:717.4px;top:1368.2px;width:15.6px;height:28.4px;"><i class="pi"></i></div>
<div class="h hr" style="left:734.1px;top:1368.2px;width:15.6px;height:28.4px;"><i class="pi"></i></div>
<div class="h hr" style="left:750.8px;top:1368.2px;width:15.6px;height:28.4px;"><i class="pi"></i></div>
<div class="h hr" style="left:767.4px;top:1368.2px;width:15.6px;height:28.4px;"><i class="pi"></i></div>
<div class="h hr" style="left:784.1px;top:1368.2px;width:12.6px;height:28.4px;"><i class="pi" style="opacity:.45"></i></div>
<div class="br" style="left:801px;top:1393px;width:128.6px;height:45.6px;"></div>
<div class="" style="left:802px;top:1401.5px;width:127.6px;height:3px;background:repeating-linear-gradient(90deg,#e9a19c 0,#e9a19c 1px,transparent 1px,transparent 2.1px,#e9a19c 2.1px,#e9a19c 3.1px,transparent 3.1px,transparent 5.2px,#e9a19c 5.2px,#e9a19c 7.2px,transparent 7.2px,transparent 8.345px);opacity:.8"></div>
<div class="h hr" style="left:801px;top:1368.2px;width:15.4px;height:28.4px;"><i class="pi"></i></div>
<div class="h hr" style="left:817.5px;top:1368.2px;width:15.6px;height:28.4px;"><i class="pi"></i></div>
<div class="h hr" style="left:834.2px;top:1368.2px;width:15.6px;height:28.4px;"><i class="pi"></i></div>
<div class="h hr" style="left:850.9px;top:1368.2px;width:15.6px;height:28.4px;"><i class="pi"></i></div>
<div class="h hr" style="left:867.6px;top:1368.2px;width:15.6px;height:28.4px;"><i class="pi"></i></div>
<div class="h hr" style="left:884.3px;top:1368.2px;width:15.6px;height:28.4px;"><i class="pi"></i></div>
<div class="h hr" style="left:901px;top:1368.2px;width:15.6px;height:28.4px;"><i class="pi"></i></div>
<div class="h hr" style="left:917.7px;top:1368.2px;width:11.9px;height:28.4px;"><i class="pi" style="opacity:.45"></i></div>
<div class="br" style="left:934px;top:1393px;width:466.6px;height:45.6px;"></div>
<div class="" style="left:935px;top:1401.5px;width:465.6px;height:3px;background:repeating-linear-gradient(90deg,#e9a19c 0,#e9a19c 1px,transparent 1px,transparent 2.1px,#e9a19c 2.1px,#e9a19c 3.1px,transparent 3.1px,transparent 5.2px,#e9a19c 5.2px,#e9a19c 7.2px,transparent 7.2px,transparent 8.345px);opacity:.8"></div>
<div class="h hr" style="left:934px;top:1368.2px;width:-0.8px;height:28.4px;"><i class="pi" style="opacity:.45"></i></div>
<div class="h hr" style="left:934.3px;top:1368.2px;width:15.6px;height:28.4px;"><i class="pi"></i></div>
<div class="h hr" style="left:951px;top:1368.2px;width:15.6px;height:28.4px;"><i class="pi"></i></div>
<div class="h hr" style="left:967.7px;top:1368.2px;width:15.6px;height:28.4px;"><i class="pi"></i></div>
<div class="h hr" style="left:984.4px;top:1368.2px;width:15.6px;height:28.4px;"><i class="pi"></i></div>
<div class="h hr" style="left:1001.1px;top:1368.2px;width:15.6px;height:28.4px;"><i class="pi"></i></div>
<div class="h hr" style="left:1017.8px;top:1368.2px;width:15.6px;height:28.4px;"><i class="pi"></i></div>
<div class="h hr" style="left:1034.5px;top:1368.2px;width:15.6px;height:28.4px;"><i class="pi"></i></div>
<div class="h hr" style="left:1051.2px;top:1368.2px;width:15.6px;height:28.4px;"><i class="pi"></i></div>
<div class="h hr" style="left:1067.9px;top:1368.2px;width:15.6px;height:28.4px;"><i class="pi"></i></div>
<div class="h hr" style="left:1084.6px;top:1368.2px;width:15.6px;height:28.4px;"><i class="pi"></i></div>
<div class="h hr" style="left:1101.2px;top:1368.2px;width:15.6px;height:28.4px;"><i class="pi"></i></div>
<div class="h hr" style="left:1117.9px;top:1368.2px;width:15.6px;height:28.4px;"><i class="pi"></i></div>
<div class="h hr" style="left:1134.6px;top:1368.2px;width:15.6px;height:28.4px;"><i class="pi"></i></div>
<div class="h hr" style="left:1151.3px;top:1368.2px;width:15.6px;height:28.4px;"><i class="pi"></i></div>
<div class="h hr" style="left:1168px;top:1368.2px;width:15.6px;height:28.4px;"><i class="pi"></i></div>
<div class="h hr" style="left:1184.7px;top:1368.2px;width:15.6px;height:28.4px;"><i class="pi"></i></div>
<div class="h hr" style="left:1201.4px;top:1368.2px;width:15.6px;height:28.4px;"><i class="pi"></i></div>
<div class="h hr" style="left:1218.1px;top:1368.2px;width:15.6px;height:28.4px;"><i class="pi"></i></div>
<div class="h hr" style="left:1234.8px;top:1368.2px;width:15.6px;height:28.4px;"><i class="pi"></i></div>
<div class="h hr" style="left:1251.5px;top:1368.2px;width:15.6px;height:28.4px;"><i class="pi"></i></div>
<div class="h hr" style="left:1268.1px;top:1368.2px;width:15.6px;height:28.4px;"><i class="pi"></i></div>
<div class="h hr" style="left:1284.8px;top:1368.2px;width:15.6px;height:28.4px;"><i class="pi"></i></div>
<div class="h hr" style="left:1301.5px;top:1368.2px;width:15.6px;height:28.4px;"><i class="pi"></i></div>
<div class="h hr" style="left:1318.2px;top:1368.2px;width:15.6px;height:28.4px;"><i class="pi"></i></div>
<div class="h hr" style="left:1334.9px;top:1368.2px;width:15.6px;height:28.4px;"><i class="pi"></i></div>
<div class="h hr" style="left:1351.6px;top:1368.2px;width:15.6px;height:28.4px;"><i class="pi"></i></div>
<div class="h hr" style="left:1368.3px;top:1368.2px;width:15.6px;height:28.4px;"><i class="pi"></i></div>
<div class="h hr" style="left:1385px;top:1368.2px;width:15.6px;height:28.4px;"><i class="pi"></i></div>
<div class="br" style="left:1468.3px;top:1393px;width:129px;height:45.6px;"></div>
<div class="" style="left:1469.3px;top:1401.5px;width:128px;height:3px;background:repeating-linear-gradient(90deg,#e9a19c 0,#e9a19c 1px,transparent 1px,transparent 2.1px,#e9a19c 2.1px,#e9a19c 3.1px,transparent 3.1px,transparent 5.2px,#e9a19c 5.2px,#e9a19c 7.2px,transparent 7.2px,transparent 8.345px);opacity:.8"></div>
<div class="h hr" style="left:1468.3px;top:1368.2px;width:15.7px;height:28.4px;"><i class="pi"></i></div>
<div class="h hr" style="left:1485.1px;top:1368.2px;width:15.6px;height:28.4px;"><i class="pi"></i></div>
<div class="h hr" style="left:1501.8px;top:1368.2px;width:15.6px;height:28.4px;"><i class="pi"></i></div>
<div class="h hr" style="left:1518.5px;top:1368.2px;width:15.6px;height:28.4px;"><i class="pi"></i></div>
<div class="h hr" style="left:1535.2px;top:1368.2px;width:15.6px;height:28.4px;"><i class="pi"></i></div>
<div class="h hr" style="left:1551.9px;top:1368.2px;width:15.6px;height:28.4px;"><i class="pi"></i></div>
<div class="h hr" style="left:1568.6px;top:1368.2px;width:15.6px;height:28.4px;"><i class="pi"></i></div>
<div class="h hr" style="left:1585.2px;top:1368.2px;width:12.1px;height:28.4px;"><i class="pi" style="opacity:.45"></i></div>
<div class="br" style="left:1602px;top:1393px;width:128.2px;height:45.6px;"></div>
<div class="" style="left:1603px;top:1401.5px;width:127.2px;height:3px;background:repeating-linear-gradient(90deg,#e9a19c 0,#e9a19c 1px,transparent 1px,transparent 2.1px,#e9a19c 2.1px,#e9a19c 3.1px,transparent 3.1px,transparent 5.2px,#e9a19c 5.2px,#e9a19c 7.2px,transparent 7.2px,transparent 8.345px);opacity:.8"></div>
<div class="h hr" style="left:1602px;top:1368.2px;width:15.5px;height:28.4px;"><i class="pi"></i></div>
<div class="h hr" style="left:1618.6px;top:1368.2px;width:15.6px;height:28.4px;"><i class="pi"></i></div>
<div class="h hr" style="left:1635.3px;top:1368.2px;width:15.6px;height:28.4px;"><i class="pi"></i></div>
<div class="h hr" style="left:1652px;top:1368.2px;width:15.6px;height:28.4px;"><i class="pi"></i></div>
<div class="h hr" style="left:1668.7px;top:1368.2px;width:15.6px;height:28.4px;"><i class="pi"></i></div>
<div class="h hr" style="left:1685.4px;top:1368.2px;width:15.6px;height:28.4px;"><i class="pi"></i></div>
<div class="h hr" style="left:1702.1px;top:1368.2px;width:15.6px;height:28.4px;"><i class="pi"></i></div>
<div class="h hr" style="left:1718.8px;top:1368.2px;width:11.4px;height:28.4px;"><i class="pi" style="opacity:.45"></i></div>
<div class="br" style="left:1735.5px;top:1393px;width:116.1px;height:45.6px;"></div>
<div class="" style="left:1736.5px;top:1401.5px;width:115.1px;height:3px;background:repeating-linear-gradient(90deg,#e9a19c 0,#e9a19c 1px,transparent 1px,transparent 2.1px,#e9a19c 2.1px,#e9a19c 3.1px,transparent 3.1px,transparent 5.2px,#e9a19c 5.2px,#e9a19c 7.2px,transparent 7.2px,transparent 8.345px);opacity:.8"></div>
<div class="h hr" style="left:1735.5px;top:1368.2px;width:15.5px;height:28.4px;"><i class="pi"></i></div>
<div class="h hr" style="left:1752.1px;top:1368.2px;width:15.6px;height:28.4px;"><i class="pi"></i></div>
<div class="h hr" style="left:1768.8px;top:1368.2px;width:15.6px;height:28.4px;"><i class="pi"></i></div>
<div class="h hr" style="left:1785.5px;top:1368.2px;width:15.6px;height:28.4px;"><i class="pi"></i></div>
<div class="h hr" style="left:1802.2px;top:1368.2px;width:15.6px;height:28.4px;"><i class="pi"></i></div>
<div class="h hr" style="left:1818.9px;top:1368.2px;width:15.6px;height:28.4px;"><i class="pi"></i></div>
<div class="h hr" style="left:1835.6px;top:1368.2px;width:15.6px;height:28.4px;"><i class="pi"></i></div>
<div class="br" style="left:1869.2px;top:1393px;width:332.8px;height:45.6px;"></div>
<div class="" style="left:1870.2px;top:1401.5px;width:331.8px;height:3px;background:repeating-linear-gradient(90deg,#e9a19c 0,#e9a19c 1px,transparent 1px,transparent 2.1px,#e9a19c 2.1px,#e9a19c 3.1px,transparent 3.1px,transparent 5.2px,#e9a19c 5.2px,#e9a19c 7.2px,transparent 7.2px,transparent 8.345px);opacity:.8"></div>
<div class="h hr" style="left:1869.2px;top:1368.2px;width:15.4px;height:28.4px;"><i class="pi"></i></div>
<div class="h hr" style="left:1885.7px;top:1368.2px;width:15.6px;height:28.4px;"><i class="pi"></i></div>
<div class="h hr" style="left:1902.4px;top:1368.2px;width:15.6px;height:28.4px;"><i class="pi"></i></div>
<div class="h hr" style="left:1919.1px;top:1368.2px;width:15.6px;height:28.4px;"><i class="pi"></i></div>
<div class="h hr" style="left:1935.7px;top:1368.2px;width:15.6px;height:28.4px;"><i class="pi"></i></div>
<div class="h hr" style="left:1952.4px;top:1368.2px;width:15.6px;height:28.4px;"><i class="pi"></i></div>
<div class="h hr" style="left:1969.1px;top:1368.2px;width:15.6px;height:28.4px;"><i class="pi"></i></div>
<div class="h hr" style="left:1985.8px;top:1368.2px;width:15.6px;height:28.4px;"><i class="pi"></i></div>
<div class="h hr" style="left:2002.5px;top:1368.2px;width:15.6px;height:28.4px;"><i class="pi"></i></div>
<div class="h hr" style="left:2019.2px;top:1368.2px;width:15.6px;height:28.4px;"><i class="pi"></i></div>
<div class="h hr" style="left:2035.9px;top:1368.2px;width:15.6px;height:28.4px;"><i class="pi"></i></div>
<div class="h hr" style="left:2052.6px;top:1368.2px;width:15.6px;height:28.4px;"><i class="pi"></i></div>
<div class="h hr" style="left:2069.3px;top:1368.2px;width:15.6px;height:28.4px;"><i class="pi"></i></div>
<div class="h hr" style="left:2085.9px;top:1368.2px;width:15.6px;height:28.4px;"><i class="pi"></i></div>
<div class="h hr" style="left:2102.6px;top:1368.2px;width:15.6px;height:28.4px;"><i class="pi"></i></div>
<div class="h hr" style="left:2119.3px;top:1368.2px;width:15.6px;height:28.4px;"><i class="pi"></i></div>
<div class="h hr" style="left:2136px;top:1368.2px;width:15.6px;height:28.4px;"><i class="pi"></i></div>
<div class="h hr" style="left:2152.7px;top:1368.2px;width:15.6px;height:28.4px;"><i class="pi"></i></div>
<div class="h hr" style="left:2169.4px;top:1368.2px;width:15.6px;height:28.4px;"><i class="pi"></i></div>
<div class="h hr" style="left:2186.1px;top:1368.2px;width:15.6px;height:28.4px;"><i class="pi"></i></div>
<div style="left:-0.5px;top:0;width:2271px;height:1484px;background:repeating-linear-gradient(90deg,rgba(10,14,20,.13) 0,rgba(10,14,20,.13) 2px,transparent 2px,transparent 33.380px);pointer-events:none"></div></div>
<div style="left:350px;top:130px;width:203px;height:1486px;background:#1e262c;"></div>
<div class="th thg" style="top:132px;height:71.5px;"><b class="cir">A</b><span class="nm" style="letter-spacing:0.00px">TPS – Eclipse –..</span><i class="led" style="top:42px"></i><i class="wv" style="left:125px;top:37px"></i><i class="dots" style="top:60.5px"></i></div>
<div class="th thg" style="top:204px;height:71.5px;"><b class="cir">A</b><span class="nm" style="letter-spacing:0.00px">TPS – Eclipse –..</span><i class="led" style="top:42px"></i><i class="wv" style="left:125px;top:37px"></i><i class="dots" style="top:60.5px"></i></div>
<div class="th thg" style="top:276px;height:71.5px;"><b class="cir">A</b><span class="nm" style="letter-spacing:0.00px">TPS – Eclipse –..</span><i class="led" style="top:42px"></i><i class="wv" style="left:125px;top:37px"></i><i class="dots" style="top:60.5px"></i></div>
<div class="th thg" style="top:348px;height:71.5px;"><b class="cir">A</b><span class="nm" style="letter-spacing:0.00px">TPS – Eclipse –..</span><i class="led" style="top:42px"></i><i class="wv" style="left:125px;top:37px"></i><i class="dots" style="top:60.5px"></i></div>
<div class="th thg" style="top:420px;height:71.5px;"><b class="cir">A</b><span class="nm" style="letter-spacing:2.34px">ride</span><i class="led" style="top:42px"></i><i class="wv" style="left:125px;top:37px"></i><i class="dots" style="top:60.5px"></i></div>
<div class="th thg" style="top:492px;height:71.5px;"><b class="cir">A</b><span class="nm" style="letter-spacing:0.00px">TPS – Eclipse –..</span><i class="led" style="top:42px"></i><i class="wv" style="left:125px;top:37px"></i><i class="dots" style="top:60.5px"></i></div>
<div class="th thg" style="top:564px;height:71.5px;"><b class="cir">A</b><span class="nm" style="letter-spacing:0.00px">TPS – Eclipse –..</span><i class="led" style="top:42px"></i><i class="wv" style="left:125px;top:37px"></i><i class="dots" style="top:60.5px"></i></div>
<div class="th thg" style="top:636px;height:31.5px;"><b class="cir">A</b><span class="nm" style="letter-spacing:-0.34px;top:3px">TPS..t 08</span><i class="led" style="top:6px"></i><i class="wv" style="left:125px;top:7px;transform:scale(.72)"></i></div>
<div class="th thx" style="top:668px;height:31.5px;"><span class="nm" style="letter-spacing:-0.26px;top:3px">Track 9</span><i class="led" style="top:6px"></i></div>
<div class="gs" style="top:762px;height:17.5px;background:#807a57"></div>
<div class="th thb" style="top:700px;height:71.5px;border-bottom-left-radius:12px;border-bottom-right-radius:0;"><b class="cir">A</b><span class="nm" style="letter-spacing:2.48px">groove voc</span><i class="led" style="top:42px"></i><i class="wv" style="left:90px;top:37px"></i><i class="tri" style="left:136px;top:48px"></i><i class="dots" style="top:60.5px"></i></div>
<div class="th thb" style="top:780px;height:71.5px;"><b class="cir">A</b><span class="nm" style="letter-spacing:0.00px">TPS – Eclipse –..</span><i class="led" style="top:42px"></i><i class="wv" style="left:125px;top:37px"></i><i class="dots" style="top:60.5px"></i></div>
<div class="th thb" style="top:852px;height:71.5px;"><b class="cir">A</b><span class="nm" style="letter-spacing:0.00px">TPS – Eclipse –..</span><i class="led" style="top:42px"></i><i class="wv" style="left:125px;top:37px"></i><i class="dots" style="top:60.5px"></i></div>
<div class="th thb" style="top:924px;height:71.5px;"><b class="cir">A</b><span class="nm" style="letter-spacing:-0.34px">RISER</span><i class="led" style="top:42px"></i><i class="wv" style="left:125px;top:37px"></i><i class="dots" style="top:60.5px"></i></div>
<div class="gs" style="top:1058px;height:17.5px;background:#8a4d63"></div>
<div class="th thb" style="top:996px;height:71.5px;border-bottom-left-radius:12px;border-bottom-right-radius:0;"><b class="cir">A</b><span class="nm" style="letter-spacing:2.39px">fx voc 2</span><i class="led" style="top:42px"></i><i class="wv" style="left:90px;top:37px"></i><i class="tri" style="left:136px;top:48px"></i><i class="dots" style="top:60.5px"></i></div>
<div class="th thx" style="top:1076px;height:31.5px;"><span class="nm" style="letter-spacing:-0.28px;top:3px">Track 17</span><i class="led" style="top:6px"></i></div>
<div class="th thx" style="top:1108px;height:31.5px;"><span class="nm" style="letter-spacing:-0.20px;top:3px">Track 18</span><i class="led" style="top:6px"></i></div>
<div class="th thx" style="top:1140px;height:31.5px;"><span class="nm" style="letter-spacing:-0.17px;top:3px">Track 19</span><i class="led" style="top:6px"></i></div>
<div class="gs" style="top:1234px;height:25.5px;background:linear-gradient(#707c4f 0,#707c4f 68%,#79754f 72%)"></div>
<div class="th thr" style="top:1172px;height:71.5px;border-bottom-left-radius:12px;border-bottom-right-radius:0;"><b class="cir">I</b><span class="nm" style="letter-spacing:2.35px">sy drop 2</span><i class="led" style="top:42px"></i><i class="tri" style="left:136px;top:48px"></i><i class="dots" style="top:60.5px"></i></div>
<div class="th thx" style="top:1260px;height:71.5px;"><span class="nm" style="letter-spacing:0.02px">Track 23</span><i class="led" style="top:42px"></i><i class="dots" style="top:60.5px"></i></div>
<div class="gs" style="top:1394px;height:25.5px;background:linear-gradient(#707c4f 0,#707c4f 68%,#79754f 72%)"></div>
<div class="th thr" style="top:1332px;height:71.5px;border-bottom-left-radius:12px;border-bottom-right-radius:0;"><b class="cir">I</b><span class="nm" style="letter-spacing:2.35px">ldzao</span><i class="led" style="top:42px"></i><i class="tri" style="left:136px;top:48px"></i><i class="dots" style="top:60.5px"></i></div>
<div class="gs" style="top:1482px;height:17.5px;background:#7d4a5f"></div>
<div class="th thr" style="top:1420px;height:71.5px;border-bottom-left-radius:12px;border-bottom-right-radius:0;"><b class="cir">I</b><span class="nm" style="letter-spacing:2.58px">groove acid</span><i class="led" style="top:42px"></i><i class="tri" style="left:136px;top:48px"></i><i class="dots" style="top:60.5px"></i></div>
<div class="gs" style="top:1570px;height:17.5px;background:linear-gradient(#7d7852 0,#7d7852 56%,#4a6682 56%)"></div>
<div class="th thr" style="top:1500px;height:71.5px;border-bottom-left-radius:12px;border-bottom-right-radius:0;"><b class="cir">I</b><span class="nm" style="letter-spacing:1.45px">bass</span><i class="led" style="top:42px"></i><i class="tri" style="left:136px;top:48px"></i><i class="dots" style="top:60.5px"></i></div>
<div class="th thx" style="top:1588px;height:27.5px;"><span class="nm" style="letter-spacing:-0.17px;top:3px">Track 32</span><i class="led" style="top:4px"></i></div>
<div style="left:350px;top:50px;width:224px;height:82px;background:#2b3238;clip-path:polygon(0 100%,0 82%,8.6% 6%,11.5% 0,100% 0,100% 100%)"></div>
<div style="left:352px;top:52px;width:60px;height:78px;background:#4f585c;clip-path:polygon(0 100%,0 86%,31% 8%,40% 0,100% 0,100% 100%);"></div>
<div style="left:353.5px;top:53.5px;width:57px;height:76px;background:#525b5f;clip-path:polygon(0 100%,0 86%,31% 8%,40% 0,100% 0,100% 100%);"></div>
<div style="left:410.3px;top:52px;width:1.7px;height:78px;background:#394146;"></div>
<div style="left:412px;top:52px;width:160px;height:78px;background:#525b5f;border:1.5px solid #5d666a;border-right-color:#454d52;border-bottom-color:#454d52"></div>
<div style="left:377px;top:105px;width:16.3px;height:4.3px;background:#dfe3e6;"></div>
<div style="left:383px;top:99px;width:4.3px;height:16.3px;background:#dfe3e6;"></div>
<div class="t" style="left:431.5px;top:105.7px;font-size:14.4px;color:#c9ced2;transform:scaleX(0.824);">STEP</div>
<div style="left:466px;top:102.4px;width:21.7px;height:21.4px;background:transparent;border:1.8px solid #8f989d;border-radius:7px"></div>
<div class="t" style="left:499.5px;top:105.7px;font-size:14.4px;color:#c9ced2;transform:scaleX(0.877);">SLIDE</div>
<div style="left:542.2px;top:104.3px;width:17.2px;height:17.2px;background:transparent;border:1.8px solid #6d767b;border-radius:50%"></div>
<div style="left:547.6px;top:109.7px;width:6.4px;height:6.4px;background:#cfd4d8;border-radius:50%"></div>
<div style="left:28px;top:130px;width:312px;height:1447px;background:#252c32;"></div>
<div style="left:30px;top:132px;width:278px;height:1443px;background:#353c47;"></div>
<div style="left:308.3px;top:132px;width:1.7px;height:1443px;background:#1f262a;"></div>
<div style="left:310px;top:132px;width:28px;height:1443px;background:#353b40;background-image:repeating-linear-gradient(45deg,rgba(255,255,255,0.04) 0,rgba(255,255,255,0.04) 1px,transparent 1px,transparent 3px)"></div>
<div style="left:310px;top:133px;width:28px;height:27px;background:#525b5f;border:1px solid #626b70;border-bottom-color:#454d52"></div>
<div style="left:322px;top:141px;width:3.5px;height:10px;background:#1f2529;"></div>
<div style="left:35px;top:164px;width:270px;height:44px;background:#5f3a40;"></div>
<div style="left:35px;top:138px;width:270px;height:26.5px;background:#cf372d;border-radius:1.5px;box-shadow:inset 0 0 0 1px rgba(225,70,55,.55),inset 0 1.5px 0 rgba(170,40,30,.6)"></div>
<i style="left:39px;top:142px;width:16px;height:18px;border-right:5px solid #f2aaa4;border-top:2px solid #f2aaa4;border-bottom:2px solid #f2aaa4;background:linear-gradient(#f2aaa4,#f2aaa4) 0 3.5px/11px 2px no-repeat,linear-gradient(#f2aaa4,#f2aaa4) 0 8.5px/11px 2px no-repeat,linear-gradient(rgba(242,170,164,.55),rgba(242,170,164,.55)) 6px 0/5px 14px no-repeat"></i>
<div class="t" style="left:61px;top:138.6px;font-size:24.5px;color:#fff;transform:scaleX(0.880);letter-spacing:0.6px;">bass</div>
<div style="left:68.5px;top:169.2px;width:30px;height:3px;background:#ee8f88;"></div>
<div style="left:136px;top:169.2px;width:30.5px;height:3px;background:#ee8f88;"></div>
<div style="left:170px;top:169.2px;width:29px;height:3px;background:#ee8f88;"></div>
<div style="left:203.4px;top:169.2px;width:29.4px;height:3px;background:#ee8f88;"></div>
<div style="left:270.6px;top:169.2px;width:29.4px;height:3px;background:#ee8f88;"></div>
<div style="left:35px;top:240px;width:270px;height:44px;background:#5f3a40;"></div>
<div style="left:35px;top:214px;width:270px;height:26.5px;background:#cf372d;border-radius:1.5px;box-shadow:inset 0 0 0 1px rgba(225,70,55,.55),inset 0 1.5px 0 rgba(170,40,30,.6)"></div>
<i style="left:39px;top:218px;width:16px;height:18px;border-right:5px solid #f2aaa4;border-top:2px solid #f2aaa4;border-bottom:2px solid #f2aaa4;background:linear-gradient(#f2aaa4,#f2aaa4) 0 3.5px/11px 2px no-repeat,linear-gradient(#f2aaa4,#f2aaa4) 0 8.5px/11px 2px no-repeat,linear-gradient(rgba(242,170,164,.55),rgba(242,170,164,.55)) 6px 0/5px 14px no-repeat"></i>
<div class="t" style="left:61px;top:214.6px;font-size:24.5px;color:#fff;transform:scaleX(0.880);letter-spacing:0.6px;">sub</div>
<div style="left:35.5px;top:245.5px;width:11px;height:3px;background:#ee8f88;"></div>
<div style="left:52.3px;top:245.5px;width:11px;height:3px;background:#ee8f88;"></div>
<div style="left:69.1px;top:245.5px;width:11px;height:3px;background:#ee8f88;"></div>
<div style="left:85.9px;top:245.5px;width:11px;height:3px;background:#ee8f88;"></div>
<div style="left:102.7px;top:245.5px;width:11px;height:3px;background:#ee8f88;"></div>
<div style="left:119.5px;top:245.5px;width:11px;height:3px;background:#ee8f88;"></div>
<div style="left:136.3px;top:245.5px;width:11px;height:3px;background:#ee8f88;"></div>
<div style="left:153.1px;top:245.5px;width:11px;height:3px;background:#ee8f88;"></div>
<div style="left:169.9px;top:245.5px;width:11px;height:3px;background:#ee8f88;"></div>
<div style="left:186.7px;top:245.5px;width:11px;height:3px;background:#ee8f88;"></div>
<div style="left:203.5px;top:245.5px;width:11px;height:3px;background:#ee8f88;"></div>
<div style="left:220.3px;top:245.5px;width:11px;height:3px;background:#ee8f88;"></div>
<div style="left:237.1px;top:245.5px;width:11px;height:3px;background:#ee8f88;"></div>
<div style="left:253.9px;top:245.5px;width:11px;height:3px;background:#ee8f88;"></div>
<div style="left:270.7px;top:245.5px;width:11px;height:3px;background:#ee8f88;"></div>
<div style="left:287.5px;top:245.5px;width:11px;height:3px;background:#ee8f88;"></div>
<div style="left:35px;top:316px;width:270px;height:44px;background:#5f3a40;"></div>
<div style="left:35px;top:290px;width:270px;height:26.5px;background:#cf372d;border-radius:1.5px;box-shadow:inset 0 0 0 1px rgba(225,70,55,.55),inset 0 1.5px 0 rgba(170,40,30,.6)"></div>
<i style="left:39px;top:294px;width:16px;height:18px;border-right:5px solid #f2aaa4;border-top:2px solid #f2aaa4;border-bottom:2px solid #f2aaa4;background:linear-gradient(#f2aaa4,#f2aaa4) 0 3.5px/11px 2px no-repeat,linear-gradient(#f2aaa4,#f2aaa4) 0 8.5px/11px 2px no-repeat,linear-gradient(rgba(242,170,164,.55),rgba(242,170,164,.55)) 6px 0/5px 14px no-repeat"></i>
<div class="t" style="left:61px;top:290.6px;font-size:24.5px;color:#fff;transform:scaleX(0.880);letter-spacing:0.6px;">lead groove</div>
<div style="left:35.5px;top:321.5px;width:10.5px;height:3px;background:#ee8f88;"></div>
<div style="left:52px;top:321.5px;width:11px;height:3px;background:#ee8f88;"></div>
<div style="left:69px;top:321.5px;width:11px;height:3px;background:#ee8f88;"></div>
<div style="left:102.7px;top:321.5px;width:12.3px;height:3px;background:#ee8f88;"></div>
<div style="left:136px;top:321.5px;width:13px;height:3px;background:#ee8f88;"></div>
<div style="left:170px;top:321.5px;width:12.4px;height:3px;background:#ee8f88;"></div>
<div style="left:186.6px;top:321.5px;width:12.4px;height:3px;background:#ee8f88;"></div>
<div style="left:203.4px;top:321.5px;width:12.6px;height:3px;background:#ee8f88;"></div>
<div style="left:237px;top:321.5px;width:12.6px;height:3px;background:#ee8f88;"></div>
<div style="left:270.6px;top:321.5px;width:10.4px;height:3px;background:#ee8f88;"></div>
<div style="left:35px;top:392px;width:270px;height:44px;background:#5f3a40;"></div>
<div style="left:35px;top:366px;width:270px;height:26.5px;background:#cf372d;border-radius:1.5px;box-shadow:inset 0 0 0 1px rgba(225,70,55,.55),inset 0 1.5px 0 rgba(170,40,30,.6)"></div>
<i style="left:39px;top:370px;width:16px;height:18px;border-right:5px solid #f2aaa4;border-top:2px solid #f2aaa4;border-bottom:2px solid #f2aaa4;background:linear-gradient(#f2aaa4,#f2aaa4) 0 3.5px/11px 2px no-repeat,linear-gradient(#f2aaa4,#f2aaa4) 0 8.5px/11px 2px no-repeat,linear-gradient(rgba(242,170,164,.55),rgba(242,170,164,.55)) 6px 0/5px 14px no-repeat"></i>
<div class="t" style="left:61px;top:366.6px;font-size:24.5px;color:#fff;transform:scaleX(0.880);letter-spacing:0.6px;">stab fx</div>
<div style="left:35.5px;top:397.5px;width:24.5px;height:3px;background:#ee8f88;"></div>
<div style="left:69px;top:397.5px;width:12.7px;height:3px;background:#ee8f88;"></div>
<div style="left:86px;top:397.5px;width:13px;height:3px;background:#ee8f88;"></div>
<div style="left:35px;top:468px;width:270px;height:44px;background:#5f3a40;"></div>
<div style="left:35px;top:442px;width:270px;height:26.5px;background:#cf372d;border-radius:1.5px;box-shadow:inset 0 0 0 1px rgba(225,70,55,.55),inset 0 1.5px 0 rgba(170,40,30,.6)"></div>
<i style="left:39px;top:446px;width:16px;height:18px;border-right:5px solid #f2aaa4;border-top:2px solid #f2aaa4;border-bottom:2px solid #f2aaa4;background:linear-gradient(#f2aaa4,#f2aaa4) 0 3.5px/11px 2px no-repeat,linear-gradient(#f2aaa4,#f2aaa4) 0 8.5px/11px 2px no-repeat,linear-gradient(rgba(242,170,164,.55),rgba(242,170,164,.55)) 6px 0/5px 14px no-repeat"></i>
<div class="t" style="left:61px;top:442.6px;font-size:24.5px;color:#fff;transform:scaleX(0.880);letter-spacing:0.6px;">synth arp</div>
<div style="left:35.5px;top:491.5px;width:10.5px;height:2px;background:#ee8f88;"></div>
<div style="left:52px;top:491.5px;width:11px;height:2px;background:#ee8f88;"></div>
<div style="left:69px;top:491.5px;width:11px;height:2px;background:#ee8f88;"></div>
<div style="left:102.7px;top:491.5px;width:12.3px;height:2px;background:#ee8f88;"></div>
<div style="left:136px;top:491.5px;width:13px;height:2px;background:#ee8f88;"></div>
<div style="left:153px;top:489.5px;width:12.6px;height:2px;background:#ee8f88;"></div>
<div style="left:170px;top:491.5px;width:12.4px;height:2px;background:#ee8f88;"></div>
<div style="left:186.6px;top:491.5px;width:12.4px;height:2px;background:#ee8f88;"></div>
<div style="left:203.4px;top:491.5px;width:12.6px;height:2px;background:#ee8f88;"></div>
<div style="left:237px;top:491.5px;width:12.6px;height:2px;background:#ee8f88;"></div>
<div style="left:270.6px;top:491.5px;width:10.4px;height:2px;background:#ee8f88;"></div>
<div style="left:35px;top:544px;width:270px;height:44px;background:#5f3a40;"></div>
<div style="left:35px;top:518px;width:270px;height:26.5px;background:#cf372d;border-radius:1.5px;box-shadow:inset 0 0 0 1px rgba(225,70,55,.55),inset 0 1.5px 0 rgba(170,40,30,.6)"></div>
<i style="left:39px;top:522px;width:16px;height:18px;border-right:5px solid #f2aaa4;border-top:2px solid #f2aaa4;border-bottom:2px solid #f2aaa4;background:linear-gradient(#f2aaa4,#f2aaa4) 0 3.5px/11px 2px no-repeat,linear-gradient(#f2aaa4,#f2aaa4) 0 8.5px/11px 2px no-repeat,linear-gradient(rgba(242,170,164,.55),rgba(242,170,164,.55)) 6px 0/5px 14px no-repeat"></i>
<div class="t" style="left:61px;top:518.6px;font-size:24.5px;color:#fff;transform:scaleX(0.880);letter-spacing:0.6px;">ldzao</div>
<div style="left:35.5px;top:549.2px;width:130.5px;height:3px;background:#ee8f88;"></div>
<div style="left:35px;top:620px;width:270px;height:44px;background:#5f3a40;"></div>
<div style="left:35px;top:594px;width:270px;height:26.5px;background:#cf372d;border-radius:1.5px;box-shadow:inset 0 0 0 1px rgba(225,70,55,.55),inset 0 1.5px 0 rgba(170,40,30,.6)"></div>
<i style="left:39px;top:598px;width:16px;height:18px;border-right:5px solid #f2aaa4;border-top:2px solid #f2aaa4;border-bottom:2px solid #f2aaa4;background:linear-gradient(#f2aaa4,#f2aaa4) 0 3.5px/11px 2px no-repeat,linear-gradient(#f2aaa4,#f2aaa4) 0 8.5px/11px 2px no-repeat,linear-gradient(rgba(242,170,164,.55),rgba(242,170,164,.55)) 6px 0/5px 14px no-repeat"></i>
<div class="t" style="left:61px;top:594.6px;font-size:24.5px;color:#fff;transform:scaleX(0.880);letter-spacing:0.6px;">groove acid</div>
<div style="left:102.7px;top:625.5px;width:12.3px;height:3px;background:#ee8f88;"></div>
<div style="left:170px;top:625.5px;width:12.4px;height:3px;background:#ee8f88;"></div>
<div style="left:237px;top:625.5px;width:12.6px;height:3px;background:#ee8f88;"></div>
<div style="left:270.6px;top:625.5px;width:33.4px;height:3px;background:#ee8f88;"></div>
<div style="left:35px;top:696px;width:270px;height:44px;background:#5f3a40;"></div>
<div style="left:35px;top:670px;width:270px;height:26.5px;background:#cf372d;border-radius:1.5px;box-shadow:inset 0 0 0 1px rgba(225,70,55,.55),inset 0 1.5px 0 rgba(170,40,30,.6)"></div>
<i style="left:39px;top:674px;width:16px;height:18px;border-right:5px solid #f2aaa4;border-top:2px solid #f2aaa4;border-bottom:2px solid #f2aaa4;background:linear-gradient(#f2aaa4,#f2aaa4) 0 3.5px/11px 2px no-repeat,linear-gradient(#f2aaa4,#f2aaa4) 0 8.5px/11px 2px no-repeat,linear-gradient(rgba(242,170,164,.55),rgba(242,170,164,.55)) 6px 0/5px 14px no-repeat"></i>
<div class="t" style="left:61px;top:670.6px;font-size:24.5px;color:#fff;transform:scaleX(0.880);letter-spacing:0.6px;">groove acid #2</div>
<div style="left:35.5px;top:719.5px;width:12.5px;height:2px;background:#ee8f88;"></div>
<div style="left:102.7px;top:719.5px;width:12.3px;height:2px;background:#ee8f88;"></div>
<div style="left:170px;top:719.5px;width:12.4px;height:2px;background:#ee8f88;"></div>
<div style="left:203.4px;top:717.5px;width:12.6px;height:2px;background:#ee8f88;"></div>
<div style="left:237px;top:719.5px;width:12.6px;height:2px;background:#ee8f88;"></div>
<div style="left:270.6px;top:719.5px;width:33.4px;height:2px;background:#ee8f88;"></div>
<div style="left:35px;top:772px;width:270px;height:44px;background:#5f3a40;"></div>
<div style="left:35px;top:746px;width:270px;height:26.5px;background:#cf372d;border-radius:1.5px;box-shadow:inset 0 0 0 1px rgba(225,70,55,.55),inset 0 1.5px 0 rgba(170,40,30,.6)"></div>
<i style="left:39px;top:750px;width:16px;height:18px;border-right:5px solid #f2aaa4;border-top:2px solid #f2aaa4;border-bottom:2px solid #f2aaa4;background:linear-gradient(#f2aaa4,#f2aaa4) 0 3.5px/11px 2px no-repeat,linear-gradient(#f2aaa4,#f2aaa4) 0 8.5px/11px 2px no-repeat,linear-gradient(rgba(242,170,164,.55),rgba(242,170,164,.55)) 6px 0/5px 14px no-repeat"></i>
<div class="t" style="left:61px;top:746.6px;font-size:24.5px;color:#fff;transform:scaleX(0.880);letter-spacing:0.6px;">groove acid #3</div>
<div style="left:35.5px;top:795.4px;width:12.5px;height:2px;background:#ee8f88;"></div>
<div style="left:102.7px;top:795.4px;width:12.3px;height:2px;background:#ee8f88;"></div>
<div style="left:136px;top:793.4px;width:13px;height:2px;background:#ee8f88;"></div>
<div style="left:170px;top:795.4px;width:12.4px;height:2px;background:#ee8f88;"></div>
<div style="left:203.4px;top:793.4px;width:12.6px;height:2px;background:#ee8f88;"></div>
<div style="left:237px;top:795.4px;width:12.6px;height:2px;background:#ee8f88;"></div>
<div style="left:270.6px;top:795.4px;width:33.4px;height:2px;background:#ee8f88;"></div>
<div style="left:35px;top:848px;width:270px;height:44px;background:#5f3a40;"></div>
<div style="left:35px;top:822px;width:270px;height:26.5px;background:#cf372d;border-radius:1.5px;box-shadow:inset 0 0 0 1px rgba(225,70,55,.55),inset 0 1.5px 0 rgba(170,40,30,.6)"></div>
<i style="left:39px;top:826px;width:16px;height:18px;border-right:5px solid #f2aaa4;border-top:2px solid #f2aaa4;border-bottom:2px solid #f2aaa4;background:linear-gradient(#f2aaa4,#f2aaa4) 0 3.5px/11px 2px no-repeat,linear-gradient(#f2aaa4,#f2aaa4) 0 8.5px/11px 2px no-repeat,linear-gradient(rgba(242,170,164,.55),rgba(242,170,164,.55)) 6px 0/5px 14px no-repeat"></i>
<div class="t" style="left:61px;top:822.6px;font-size:24.5px;color:#fff;transform:scaleX(0.880);letter-spacing:0.6px;">sy drop 2</div>
<div style="left:35.5px;top:853.5px;width:4px;height:3px;background:#ee8f88;"></div>
<div style="left:57.5px;top:853.5px;width:4px;height:3px;background:#ee8f88;"></div>
<div style="left:69px;top:853.5px;width:4px;height:3px;background:#ee8f88;"></div>
<div style="left:80px;top:853.5px;width:4px;height:3px;background:#ee8f88;"></div>
<div style="left:102.7px;top:853.5px;width:4px;height:3px;background:#ee8f88;"></div>
<div style="left:113.5px;top:853.5px;width:4px;height:3px;background:#ee8f88;"></div>
<div style="left:124.5px;top:853.5px;width:4px;height:3px;background:#ee8f88;"></div>
<div style="left:147.5px;top:853.5px;width:4px;height:3px;background:#ee8f88;"></div>
<div style="left:158.7px;top:853.5px;width:4px;height:3px;background:#ee8f88;"></div>
<div style="left:170px;top:853.5px;width:4px;height:3px;background:#ee8f88;"></div>
<div style="left:192.2px;top:853.5px;width:4px;height:3px;background:#ee8f88;"></div>
<div style="left:203.4px;top:853.5px;width:4px;height:3px;background:#ee8f88;"></div>
<div style="left:214.6px;top:853.5px;width:4px;height:3px;background:#ee8f88;"></div>
<div style="left:32.5px;top:616.5px;width:15px;height:23px;background:#3a1c26;clip-path:polygon(0 0,100% 50%,0 100%,8% 50%)"></div>
<div style="left:34px;top:619.5px;width:12px;height:17px;background:#d9455e;clip-path:polygon(0 0,100% 50%,0 100%,8% 50%)"></div>
<div style="left:6px;top:794px;width:4px;height:3px;background:#353c40;"></div>
<div style="left:6px;top:802px;width:4px;height:3px;background:#353c40;"></div>
<div style="left:6px;top:810px;width:4px;height:3px;background:#353c40;"></div>
<div style="left:6px;top:818px;width:4px;height:3px;background:#353c40;"></div>
<div style="left:6px;top:826px;width:4px;height:3px;background:#353c40;"></div>
<div style="left:163px;top:1597.5px;width:14px;height:3px;background:#d5d9dc;"></div>
<div style="left:168.5px;top:1592px;width:3px;height:14px;background:#d5d9dc;"></div>
<svg style="left:0;top:0" width="2880" height="132" viewBox="0 0 2880 132"><path d="M43.5 16 L53 25 L43.5 34Z" fill="#c4c9cd"/><path d="M76.9 38.3 L76 24 A13.1 13.1 0 0 1 102.2 24 L101.5 38.3 H92.9 L93.7 24 A4.75 4.75 0 0 0 84.2 24 L85.5 38.3 Z" fill="#d6dade"/><path d="M78.3 35.6 L78.9 30.1 H83 V35.6Z M95.4 30.1 H99.5 L100.1 35.6 H95.4Z" fill="#40484c"/><path d="M142.2 12.3 H154.6 L170 29.8 V33.8 Q169.3 39.4 161.8 39.7 L159.3 39.5 L142.2 24.7 Z" fill="none" stroke="#d6dade" stroke-width="2.5" stroke-linejoin="round"/><path d="M153.6 13 L151.7 18.8 L146.6 25.8 M151.7 18.8 L166.8 35.2" fill="none" stroke="#d6dade" stroke-width="2.3" stroke-linejoin="round"/><path d="M190.4 9 L202.8 19.2 L191.3 30.6 L181.2 18.3 L186.6 18.6 L185.5 14.4 L189.6 14.6 Z" fill="#8fcbfa"/><path d="M196 25.5 L200.3 21.5 Q203 27.5 208.5 31.2 A4.6 4.6 0 1 1 203.4 38.4 Q201.5 31.5 196 29.5 Z" fill="#8fcbfa"/><circle cx="207.7" cy="35.9" r="1.7" fill="#40484c"/><path d="M201.2 17.8 L189.8 29" stroke="#40484c" stroke-width="1.1"/><path d="M183.2 22.5 L185.6 24.3 Q186.5 31 188.3 36.6 L183.6 37.8 Z" fill="#8fcbfa"/><circle cx="239" cy="24.8" r="11.8" fill="none" stroke="#d6dade" stroke-width="2.9"/><path d="M230.8 32.8 L247.2 16.8" stroke="#d6dade" stroke-width="2.9"/><path d="M281.9 9.8 V40.2 Q277 31.5 268 30 Q266 29.5 266 27.5 V22.2 Q266 20.2 268 19.8 Q277 18.3 281.9 9.8Z" fill="#d6dade"/><path d="M284.3 18.6 L296 31.8 M296 18.6 L284.3 31.8" stroke="#d6dade" stroke-width="2.8"/><path d="M307.9 24.8 L318.2 13.2 V20.1 H322.3 V29.6 H318.2 V36.8Z M338.2 24.8 L327.9 13.2 V20.1 H323.8 V29.6 H327.9 V36.8Z" fill="#d6dade"/><path d="M350 12.1 H366.2 V30Z" fill="#d6dade"/><path d="M352.8 11.5 L367 27.5" stroke="#40484c" stroke-width="1"/><path d="M367.9 12.1 H374.6 Q380 14 380 19 V37.5 Q379 40.3 375 39.8 L367.9 34.2Z" fill="#d6dade"/><circle cx="373.9" cy="24.2" r="2.1" fill="#40484c"/><path d="M404 13.7 H400 Q395.7 13.7 395.7 18 V21.6 M409.8 13.7 H413.8 Q418.2 13.7 418.2 18 V21.6 M395.7 28.3 V32 Q395.7 36.3 400 36.3 H404 M418.2 28.3 V32 Q418.2 36.3 413.8 36.3 H409.8" fill="none" stroke="#d6dade" stroke-width="3.2"/><circle cx="447.1" cy="23.3" r="11.7" fill="none" stroke="#d6dade" stroke-width="2.9"/><path d="M455.5 33.5 Q459 33 462.5 36 Q465 38.8 463 39.8 Q460 40.5 457.5 37.5 Q455.2 35 455.5 33.5Z" fill="#d6dade"/><path d="M439 25.2 Q439.5 19 449.3 16 Q446 24.5 439 25.2Z" fill="#d6dade"/><path d="M492.1 10 V40 Q487 31.5 478 30 Q476 29.5 476 27.5 V22.2 Q476 20.2 478 19.8 Q487 18.3 492.1 10Z" fill="#d6dade"/><path d="M497.4 16.2 V33.8 M503.3 16.2 V33.8" stroke="#d6dade" stroke-width="2.8"/><path d="M557.3 12.5 V37.8 Q553 30.5 545.5 29.3 Q543.6 28.8 543.6 27 V22.8 Q543.6 21 545.5 20.6 Q553 19.3 557.3 12.5Z" fill="none" stroke="#d6dade" stroke-width="2.7" stroke-linejoin="round"/><path d="M561.8 16.7 L571 24.9 L561.8 33.3Z" fill="#d6dade"/><path d="M875.5 17.5 L883 24 L875.5 30.5Z M1343.5 17.5 L1351 24 L1343.5 30.5Z" fill="#8b9398"/><path d="M2787 19.8 H2801" stroke="#d6dade" stroke-width="3.6"/><path d="M2824 20.5 H2840 V31 H2824Z" fill="none" stroke="#d6dade" stroke-width="1.9"/><path d="M2823 19.5 H2841" stroke="#d6dade" stroke-width="3.4"/><path d="M2862 16 L2880 34 M2880 16 L2862 34" stroke="#d6dade" stroke-width="3"/><path d="M60 91 H91 V113.3 H60Z" fill="#d6dade"/><path d="M67.3 91 H71 V104.5 H67.3Z M80 91 H83.7 V104.5 H80Z" fill="#40484c"/><path d="M69.1 104 V110 M81.8 104 V110" stroke="#9aa1a6" stroke-width="0.8"/><path d="M148.5 101L152.2 99.9L155.1 94.2L157.9 99.9L162 98.2L165.7 91.3L169 86.8L172.3 91.3L176 98.2L180.1 99.9L182.9 94.2L185.8 99.9L189.5 101L185.8 102.1L182.9 107.8L180.1 102.1L176 103.8L172.3 110.7L169 115.2L165.7 110.7L162 103.8L157.9 102.1L155.1 107.8L152.2 102.1Z" fill="#4e575c"/><path d="M256.8 107.6 L272.7 96.3" stroke="#4e575c" stroke-width="2.2"/><circle cx="253.5" cy="109.9" r="3.7" fill="none" stroke="#4e575c" stroke-width="2.2"/><circle cx="276" cy="94" r="3.7" fill="none" stroke="#4e575c" stroke-width="2.2"/><path d="M420.9 71L424.7 69.9L427.6 64.2L430.5 69.9L434.6 68.2L438.4 61.3L441.7 56.8L445 61.3L448.8 68.2L452.9 69.9L455.8 64.2L458.7 69.9L462.4 71L458.7 72.1L455.8 77.8L452.9 72.1L448.8 73.8L445 80.7L441.7 85.2L438.4 80.7L434.6 73.8L430.5 72.1L427.6 77.8L424.7 72.1Z" fill="#7c868b"/><path d="M488 76.5 L504 65.3" stroke="#d6dade" stroke-width="2.3"/><circle cx="484.6" cy="78.9" r="3.9" fill="none" stroke="#d6dade" stroke-width="2.3"/><circle cx="507.5" cy="62.9" r="3.9" fill="none" stroke="#d6dade" stroke-width="2.3"/><path d="M529.7 59.8 H560 V82 H529.7Z" fill="#7c868b"/><path d="M537 59.8 H540.6 V73 H537Z M549.3 59.8 H552.9 V73 H549.3Z" fill="#525b5f"/></svg>
<div class="t" style="left:586.5px;top:10.6px;font-size:27px;color:#d3d7db;transform:scaleX(1.034);">Playlist - Arrangement</div>
<div class="t" style="left:892px;top:10.6px;font-size:27px;color:#d3d7db;transform:scaleX(1.005);">Pro-Q 3 (Slot 2) - Band 2 Frequency</div>
</body></html>
